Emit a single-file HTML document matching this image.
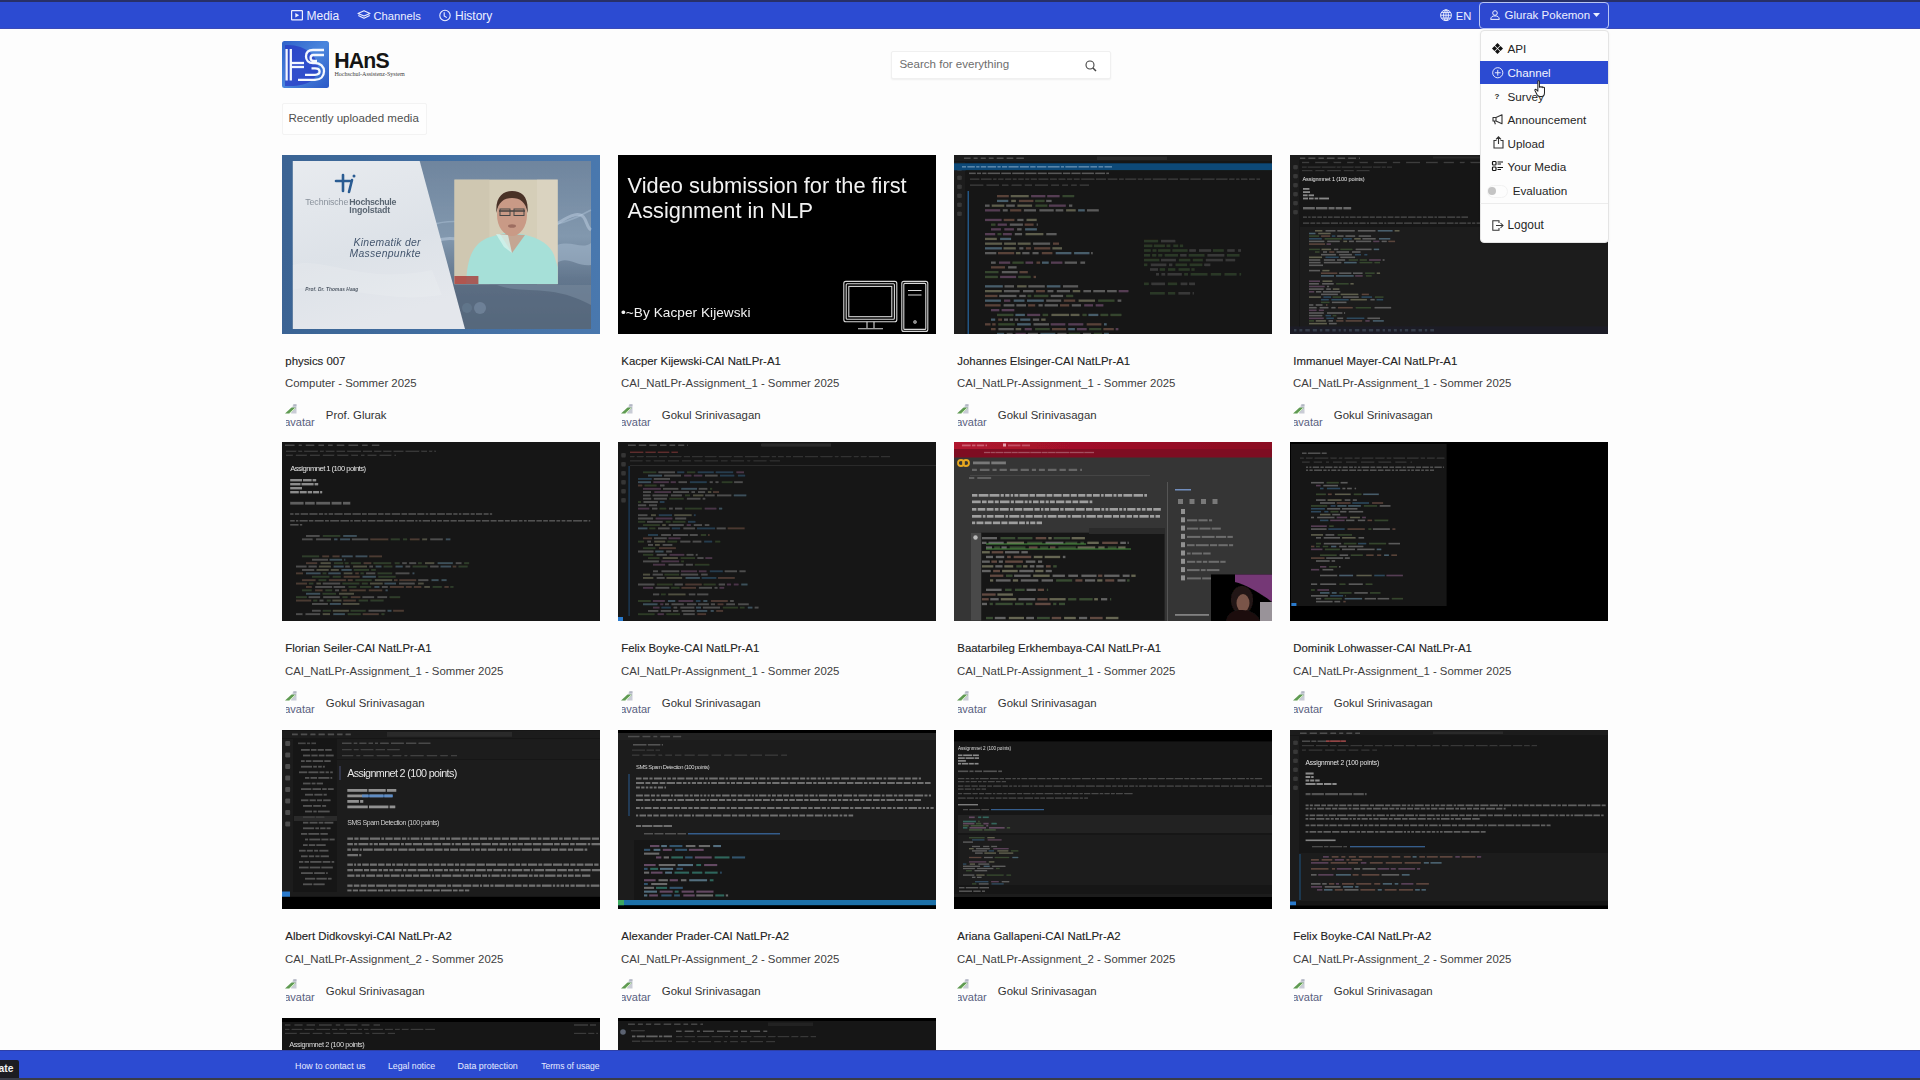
<!DOCTYPE html><html><head><meta charset="utf-8"><style>
*{margin:0;padding:0;box-sizing:border-box}
html,body{width:1920px;height:1080px;overflow:hidden;background:#fdfdfd;font-family:"Liberation Sans",sans-serif}
.t{position:absolute;white-space:nowrap;line-height:1}
.a{position:absolute}
svg{position:absolute;overflow:visible}
</style></head><body>
<svg width="0" height="0" style="position:absolute"><defs><filter id="bl" x="-5%" y="-5%" width="110%" height="110%"><feGaussianBlur stdDeviation="0.4"/></filter></defs></svg>
<svg style="left:282px;top:154.5px;overflow:hidden" width="318" height="179" viewBox="0 0 318 179"><g filter="url(#bl)"><defs><linearGradient id="t1b" x1="0" y1="0" x2="1" y2="0"><stop offset="0" stop-color="#3a6494"/><stop offset="1" stop-color="#4a78ae"/></linearGradient><linearGradient id="t1s" x1="0" y1="0" x2="0.3" y2="1"><stop offset="0" stop-color="#e8ebef"/><stop offset="0.6" stop-color="#dde2e8"/><stop offset="1" stop-color="#e4e7ec"/></linearGradient><linearGradient id="t1g" x1="0" y1="0" x2="0" y2="1"><stop offset="0" stop-color="#6f859e"/><stop offset="0.45" stop-color="#8298ae"/><stop offset="0.7" stop-color="#63778e"/><stop offset="1" stop-color="#55677c"/></linearGradient></defs><rect x="0.0" y="0.0" width="318.0" height="179.0" fill="url(#t1b)"/><rect x="10.8" y="6.0" width="298.2" height="168.0" fill="url(#t1g)"/><path d="M140 95 C180 60 210 120 260 80 S300 70 309 75" stroke="#c8d8e8" stroke-width="3" fill="none" opacity="0.45"/><path d="M150 70 C190 55 240 95 309 55" stroke="#b8cce0" stroke-width="1.5" fill="none" opacity="0.4"/><path d="M275 90 C290 85 300 95 309 88 L309 110 C295 112 285 100 275 108 Z" fill="#a9bdd2" opacity="0.5"/><rect x="172.0" y="130.0" width="137.0" height="44.0" fill="#56687c" opacity="0.6"/><path d="M215 130 C240 140 270 128 309 150 L309 130 Z" fill="#8fa3b8" opacity="0.35"/><circle cx="198" cy="153" r="6" fill="#7b8fa6" opacity="0.6"/><circle cx="185" cy="153" r="5" fill="#6a7f96" opacity="0.5"/><path d="M10.8 6 L137.7 6 L183 174 L10.8 174 Z" fill="url(#t1s)"/><path d="M10.8 110 C40 100 80 130 150 115 L160 140 C100 150 50 125 10.8 135 Z" fill="#ffffff" opacity="0.12"/><g stroke="#2b5b92" stroke-width="2.6" fill="none" stroke-linecap="round"><path d="M54 26 H68"/><path d="M61 20 V36"/><path d="M70 25 L67 37"/></g><circle cx="72" cy="21" r="1.5" fill="#2b5b92"/><text x="23.3" y="49.5" font-family="Liberation Sans" font-size="8.8" fill="#8a929c" textLength="43">Technische</text><text x="67.3" y="49.5" font-family="Liberation Sans" font-size="8.8" font-weight="700" fill="#5a6672" textLength="47">Hochschule</text><text x="67.3" y="57.8" font-family="Liberation Sans" font-size="8.8" font-weight="700" fill="#5a6672" textLength="41">Ingolstadt</text><text x="138.5" y="91.2" text-anchor="end" font-family="Liberation Sans" font-size="10.4" font-style="italic" fill="#44566e" textLength="67">Kinematik der</text><text x="138.5" y="101.5" text-anchor="end" font-family="Liberation Sans" font-size="10.4" font-style="italic" fill="#44566e" textLength="71">Massenpunkte</text><text x="23.3" y="135.8" font-family="Liberation Sans" font-size="4.8" font-style="italic" font-weight="700" fill="#505a66" textLength="53">Prof. Dr. Thomas Haag</text><rect x="172.4" y="24.6" width="103.3" height="104.5" fill="#d5ceb8"/><rect x="172.4" y="24.6" width="35.0" height="104.5" fill="#cbc3ab" opacity="0.6"/><rect x="255.0" y="24.6" width="20.7" height="104.5" fill="#ddd7c5" opacity="0.6"/><path d="M184 129 C185 104 190 90 205 83 L222 78 L240 79 C258 83 268 90 272 100 L275.7 112 L275.7 129 Z" fill="#a6e0d8"/><path d="M218 79 L230 98 L243 80 Z" fill="#c8a08c" opacity="0.9"/><path d="M214 79 L222 92 L230 98 L226 80 Z" fill="#d6f2ec" opacity="0.8"/><ellipse cx="230" cy="60" rx="15" ry="21" fill="#c99a86"/><path d="M214.5 58 C213 42 221 36 230 36 C240 36 247 42 245.5 58 C244 47 238 43 230 43 C222 43 216 47 214.5 58 Z" fill="#4a3028"/><path d="M217 56 H243" stroke="#3a3a3a" stroke-width="1.4"/><rect x="218" y="54" width="10" height="6.5" fill="none" stroke="#444" stroke-width="1"/><rect x="232" y="54" width="10" height="6.5" fill="none" stroke="#444" stroke-width="1"/><ellipse cx="230" cy="71" rx="4" ry="1.8" fill="#8a5a50" opacity="0.7"/><rect x="172.4" y="121.0" width="24.0" height="8.0" fill="#a83a38" opacity="0.8"/></g></svg>
<svg style="left:618px;top:154.5px;overflow:hidden" width="318" height="179" viewBox="0 0 318 179"><g filter="url(#bl)"><rect x="0.0" y="0.0" width="318.0" height="179.0" fill="#000"/><text x="9.6" y="37.9" font-family="Liberation Sans" font-size="21.8" fill="#f2f2f2" textLength="279">Video submission for the first</text><text x="9.6" y="63.1" font-family="Liberation Sans" font-size="21.8" fill="#f2f2f2">Assignment in NLP</text><text x="3" y="161.9" font-family="Liberation Sans" font-size="13.6" fill="#f2f2f2" textLength="129.5">•~By Kacper Kijewski</text><g fill="none" stroke="#d8d8d8" stroke-width="1.1"><rect x="225.8" y="126.4" width="53" height="40.3" rx="2"/><rect x="228.2" y="128.8" width="48.2" height="35.5" rx="1"/><rect x="230.8" y="131.4" width="43" height="30.3"/><path d="M249 166.7 V173 M256 166.7 V173 M240 173.8 H265"/><rect x="283.8" y="126.4" width="26" height="50" rx="2"/><rect x="285.8" y="128.4" width="22" height="46" rx="1"/><path d="M290 135.5 H303.5 M290 140 H303.5"/><circle cx="297" cy="167" r="1.2"/></g></g></svg>
<svg style="left:954px;top:154.5px;overflow:hidden" width="318" height="179" viewBox="0 0 318 179"><g filter="url(#bl)"><rect x="0.0" y="0.0" width="318.0" height="179.0" fill="#171717"/><rect x="0.0" y="0.0" width="318.0" height="6.5" fill="#1b1b1b"/><rect x="10.0" y="2.5" width="6.6" height="1.5" fill="#bbbbbb" opacity="0.324"/><rect x="19.6" y="2.5" width="4.1" height="1.5" fill="#bbbbbb" opacity="0.324"/><rect x="26.7" y="2.5" width="5.1" height="1.5" fill="#bbbbbb" opacity="0.324"/><rect x="34.8" y="2.5" width="4.9" height="1.5" fill="#bbbbbb" opacity="0.324"/><rect x="42.7" y="2.5" width="6.9" height="1.5" fill="#bbbbbb" opacity="0.324"/><rect x="52.6" y="2.5" width="6.7" height="1.5" fill="#bbbbbb" opacity="0.324"/><rect x="62.3" y="2.5" width="7.6" height="1.5" fill="#bbbbbb" opacity="0.324"/><rect x="143.1" y="1.5" width="70.0" height="3.5" fill="#2c2c2c"/><rect x="0.0" y="6.5" width="11.5" height="172.5" fill="#1b1b1b"/><rect x="3.2" y="11.5" width="4.6" height="4.6" fill="#8a8a8a" opacity="0.25" rx="1"/><rect x="3.2" y="20.5" width="4.6" height="4.6" fill="#8a8a8a" opacity="0.25" rx="1"/><rect x="3.2" y="29.5" width="4.6" height="4.6" fill="#8a8a8a" opacity="0.25" rx="1"/><rect x="3.2" y="38.5" width="4.6" height="4.6" fill="#8a8a8a" opacity="0.25" rx="1"/><rect x="3.2" y="47.5" width="4.6" height="4.6" fill="#8a8a8a" opacity="0.25" rx="1"/><rect x="3.2" y="56.5" width="4.6" height="4.6" fill="#8a8a8a" opacity="0.25" rx="1"/><rect x="0.0" y="8.3" width="318.0" height="7.0" fill="#0c4878"/><rect x="8.0" y="11.0" width="4.0" height="1.6" fill="#d0e4f4" opacity="0.396"/><rect x="13.3" y="11.0" width="7.6" height="1.6" fill="#d0e4f4" opacity="0.396"/><rect x="22.2" y="11.0" width="3.3" height="1.6" fill="#d0e4f4" opacity="0.396"/><rect x="26.8" y="11.0" width="5.4" height="1.6" fill="#d0e4f4" opacity="0.396"/><rect x="33.5" y="11.0" width="8.6" height="1.6" fill="#d0e4f4" opacity="0.396"/><rect x="43.4" y="11.0" width="3.3" height="1.6" fill="#d0e4f4" opacity="0.396"/><rect x="48.0" y="11.0" width="5.2" height="1.6" fill="#d0e4f4" opacity="0.396"/><rect x="54.5" y="11.0" width="10.1" height="1.6" fill="#d0e4f4" opacity="0.396"/><rect x="65.9" y="11.0" width="9.0" height="1.6" fill="#d0e4f4" opacity="0.396"/><rect x="76.2" y="11.0" width="5.4" height="1.6" fill="#d0e4f4" opacity="0.396"/><rect x="82.9" y="11.0" width="9.5" height="1.6" fill="#d0e4f4" opacity="0.396"/><rect x="93.7" y="11.0" width="11.9" height="1.6" fill="#d0e4f4" opacity="0.396"/><rect x="106.9" y="11.0" width="3.1" height="1.6" fill="#d0e4f4" opacity="0.396"/><rect x="111.3" y="11.0" width="11.9" height="1.6" fill="#d0e4f4" opacity="0.396"/><rect x="124.5" y="11.0" width="10.7" height="1.6" fill="#d0e4f4" opacity="0.396"/><rect x="136.4" y="11.0" width="6.7" height="1.6" fill="#d0e4f4" opacity="0.396"/><rect x="144.5" y="11.0" width="4.7" height="1.6" fill="#d0e4f4" opacity="0.396"/><rect x="150.5" y="11.0" width="7.5" height="1.6" fill="#d0e4f4" opacity="0.396"/><rect x="11.5" y="15.3" width="306.5" height="6.5" fill="#181818"/><rect x="15.0" y="17.6" width="6.7" height="1.5" fill="#cccccc" opacity="0.36"/><rect x="23.0" y="17.6" width="4.0" height="1.5" fill="#cccccc" opacity="0.36"/><rect x="28.3" y="17.6" width="4.1" height="1.5" fill="#cccccc" opacity="0.36"/><rect x="33.7" y="17.6" width="12.3" height="1.5" fill="#cccccc" opacity="0.36"/><rect x="47.3" y="17.6" width="9.6" height="1.5" fill="#cccccc" opacity="0.36"/><rect x="58.3" y="17.6" width="11.9" height="1.5" fill="#cccccc" opacity="0.36"/><rect x="71.4" y="17.6" width="11.0" height="1.5" fill="#cccccc" opacity="0.36"/><rect x="83.8" y="17.6" width="8.9" height="1.5" fill="#cccccc" opacity="0.36"/><rect x="94.0" y="17.6" width="13.7" height="1.5" fill="#cccccc" opacity="0.36"/><rect x="109.0" y="17.6" width="7.2" height="1.5" fill="#cccccc" opacity="0.36"/><rect x="117.4" y="17.6" width="9.1" height="1.5" fill="#cccccc" opacity="0.36"/><rect x="127.8" y="17.6" width="12.1" height="1.5" fill="#cccccc" opacity="0.36"/><rect x="141.2" y="17.6" width="9.8" height="1.5" fill="#cccccc" opacity="0.36"/><rect x="152.3" y="17.6" width="2.7" height="1.5" fill="#cccccc" opacity="0.36"/><rect x="16.0" y="23.5" width="9.4" height="1.3" fill="#aaaaaa" opacity="0.252"/><rect x="26.9" y="23.5" width="10.8" height="1.3" fill="#aaaaaa" opacity="0.252"/><rect x="39.1" y="23.5" width="3.5" height="1.3" fill="#aaaaaa" opacity="0.252"/><rect x="44.1" y="23.5" width="5.5" height="1.3" fill="#aaaaaa" opacity="0.252"/><rect x="51.1" y="23.5" width="6.2" height="1.3" fill="#aaaaaa" opacity="0.252"/><rect x="58.8" y="23.5" width="3.9" height="1.3" fill="#aaaaaa" opacity="0.252"/><rect x="64.2" y="23.5" width="5.6" height="1.3" fill="#aaaaaa" opacity="0.252"/><rect x="71.2" y="23.5" width="4.1" height="1.3" fill="#aaaaaa" opacity="0.252"/><rect x="76.8" y="23.5" width="6.1" height="1.3" fill="#aaaaaa" opacity="0.252"/><rect x="84.4" y="23.5" width="10.0" height="1.3" fill="#aaaaaa" opacity="0.252"/><rect x="95.9" y="23.5" width="7.0" height="1.3" fill="#aaaaaa" opacity="0.252"/><rect x="104.4" y="23.5" width="7.1" height="1.3" fill="#aaaaaa" opacity="0.252"/><rect x="113.0" y="23.5" width="5.3" height="1.3" fill="#aaaaaa" opacity="0.252"/><rect x="119.8" y="23.5" width="5.9" height="1.3" fill="#aaaaaa" opacity="0.252"/><rect x="127.2" y="23.5" width="13.3" height="1.3" fill="#aaaaaa" opacity="0.252"/><rect x="142.0" y="23.5" width="10.1" height="1.3" fill="#aaaaaa" opacity="0.252"/><rect x="153.7" y="23.5" width="9.7" height="1.3" fill="#aaaaaa" opacity="0.252"/><rect x="164.9" y="23.5" width="4.9" height="1.3" fill="#aaaaaa" opacity="0.252"/><rect x="171.2" y="23.5" width="11.0" height="1.3" fill="#aaaaaa" opacity="0.252"/><rect x="183.8" y="23.5" width="4.8" height="1.3" fill="#aaaaaa" opacity="0.252"/><rect x="190.1" y="23.5" width="7.2" height="1.3" fill="#aaaaaa" opacity="0.252"/><rect x="198.7" y="23.5" width="13.9" height="1.3" fill="#aaaaaa" opacity="0.252"/><rect x="214.1" y="23.5" width="10.0" height="1.3" fill="#aaaaaa" opacity="0.252"/><rect x="225.7" y="23.5" width="9.1" height="1.3" fill="#aaaaaa" opacity="0.252"/><rect x="236.3" y="23.5" width="10.5" height="1.3" fill="#aaaaaa" opacity="0.252"/><rect x="248.3" y="23.5" width="12.3" height="1.3" fill="#aaaaaa" opacity="0.252"/><rect x="262.1" y="23.5" width="11.5" height="1.3" fill="#aaaaaa" opacity="0.252"/><rect x="275.1" y="23.5" width="5.5" height="1.3" fill="#aaaaaa" opacity="0.252"/><rect x="282.1" y="23.5" width="3.4" height="1.3" fill="#aaaaaa" opacity="0.252"/><rect x="287.0" y="23.5" width="6.5" height="1.3" fill="#aaaaaa" opacity="0.252"/><rect x="295.0" y="23.5" width="5.9" height="1.3" fill="#aaaaaa" opacity="0.252"/><rect x="302.4" y="23.5" width="3.6" height="1.3" fill="#aaaaaa" opacity="0.252"/><rect x="16.0" y="29.5" width="13.4" height="1.3" fill="#aaaaaa" opacity="0.252"/><rect x="32.4" y="29.5" width="12.6" height="1.3" fill="#aaaaaa" opacity="0.252"/><rect x="48.0" y="29.5" width="6.5" height="1.3" fill="#aaaaaa" opacity="0.252"/><rect x="57.5" y="29.5" width="10.2" height="1.3" fill="#aaaaaa" opacity="0.252"/><rect x="70.7" y="29.5" width="7.4" height="1.3" fill="#aaaaaa" opacity="0.252"/><rect x="81.0" y="29.5" width="13.1" height="1.3" fill="#aaaaaa" opacity="0.252"/><rect x="97.1" y="29.5" width="8.0" height="1.3" fill="#aaaaaa" opacity="0.252"/><rect x="108.1" y="29.5" width="5.9" height="1.3" fill="#aaaaaa" opacity="0.252"/><rect x="117.1" y="29.5" width="5.7" height="1.3" fill="#aaaaaa" opacity="0.252"/><rect x="125.8" y="29.5" width="9.2" height="1.3" fill="#aaaaaa" opacity="0.252"/><rect x="13.6" y="36.0" width="1.2" height="143.0" fill="#2a6fb0" opacity="0.9"/><rect x="43.0" y="40.0" width="11.8" height="2.3" fill="#ce9178" opacity="0.36"/><rect x="56.7" y="40.0" width="18.0" height="2.3" fill="#dcdcaa" opacity="0.36"/><rect x="77.1" y="40.0" width="14.3" height="2.3" fill="#c586c0" opacity="0.36"/><rect x="93.2" y="40.0" width="12.4" height="2.3" fill="#c586c0" opacity="0.36"/><rect x="108.5" y="40.0" width="11.7" height="2.3" fill="#6a9955" opacity="0.36"/><rect x="43.0" y="44.8" width="11.3" height="2.3" fill="#9cdcfe" opacity="0.36"/><rect x="57.2" y="44.8" width="4.7" height="2.3" fill="#dcdcaa" opacity="0.36"/><rect x="64.9" y="44.8" width="14.5" height="2.3" fill="#ce9178" opacity="0.36"/><rect x="81.1" y="44.8" width="9.5" height="2.3" fill="#6a9955" opacity="0.36"/><rect x="92.2" y="44.8" width="5.4" height="2.3" fill="#d4d4d4" opacity="0.36"/><rect x="31.0" y="49.5" width="4.6" height="2.3" fill="#d4d4d4" opacity="0.36"/><rect x="37.7" y="49.5" width="12.6" height="2.3" fill="#dcdcaa" opacity="0.36"/><rect x="52.2" y="49.5" width="8.6" height="2.3" fill="#d4d4d4" opacity="0.36"/><rect x="63.4" y="49.5" width="14.7" height="2.3" fill="#dcdcaa" opacity="0.36"/><rect x="81.4" y="49.5" width="12.0" height="2.3" fill="#6a9955" opacity="0.36"/><rect x="94.9" y="49.5" width="16.9" height="2.3" fill="#c586c0" opacity="0.36"/><rect x="115.0" y="49.5" width="3.3" height="2.3" fill="#d4d4d4" opacity="0.36"/><rect x="31.0" y="54.2" width="15.2" height="2.3" fill="#c586c0" opacity="0.36"/><rect x="48.8" y="54.2" width="4.9" height="2.3" fill="#d4d4d4" opacity="0.36"/><rect x="56.1" y="54.2" width="11.2" height="2.3" fill="#ce9178" opacity="0.36"/><rect x="69.9" y="54.2" width="12.1" height="2.3" fill="#d4d4d4" opacity="0.36"/><rect x="85.4" y="54.2" width="14.3" height="2.3" fill="#d4d4d4" opacity="0.36"/><rect x="101.6" y="54.2" width="7.7" height="2.3" fill="#d4d4d4" opacity="0.36"/><rect x="112.1" y="54.2" width="9.6" height="2.3" fill="#dcdcaa" opacity="0.36"/><rect x="124.1" y="54.2" width="6.7" height="2.3" fill="#9cdcfe" opacity="0.36"/><rect x="133.0" y="54.2" width="11.8" height="2.3" fill="#d4d4d4" opacity="0.36"/><rect x="31.0" y="63.8" width="16.6" height="2.3" fill="#c586c0" opacity="0.36"/><rect x="49.7" y="63.8" width="10.7" height="2.3" fill="#ce9178" opacity="0.36"/><rect x="63.3" y="63.8" width="6.2" height="2.3" fill="#d4d4d4" opacity="0.36"/><rect x="72.5" y="63.8" width="10.2" height="2.3" fill="#dcdcaa" opacity="0.36"/><rect x="37.0" y="68.5" width="4.5" height="2.3" fill="#6a9955" opacity="0.36"/><rect x="43.7" y="68.5" width="9.2" height="2.3" fill="#c586c0" opacity="0.36"/><rect x="55.8" y="68.5" width="13.1" height="2.3" fill="#d4d4d4" opacity="0.36"/><rect x="70.6" y="68.5" width="9.0" height="2.3" fill="#ce9178" opacity="0.36"/><rect x="82.7" y="68.5" width="1.1" height="2.3" fill="#d4d4d4" opacity="0.36"/><rect x="37.0" y="73.2" width="9.9" height="2.3" fill="#c586c0" opacity="0.36"/><rect x="50.3" y="73.2" width="9.6" height="2.3" fill="#c586c0" opacity="0.36"/><rect x="63.1" y="73.2" width="4.5" height="2.3" fill="#d4d4d4" opacity="0.36"/><rect x="71.1" y="73.2" width="11.8" height="2.3" fill="#9cdcfe" opacity="0.36"/><rect x="31.0" y="78.0" width="10.2" height="2.3" fill="#c586c0" opacity="0.36"/><rect x="43.5" y="78.0" width="3.9" height="2.3" fill="#6a9955" opacity="0.36"/><rect x="48.9" y="78.0" width="8.9" height="2.3" fill="#c586c0" opacity="0.36"/><rect x="60.8" y="78.0" width="7.3" height="2.3" fill="#d4d4d4" opacity="0.36"/><rect x="71.5" y="78.0" width="17.9" height="2.3" fill="#dcdcaa" opacity="0.36"/><rect x="92.3" y="78.0" width="10.3" height="2.3" fill="#d4d4d4" opacity="0.36"/><rect x="31.0" y="82.8" width="11.8" height="2.3" fill="#dcdcaa" opacity="0.36"/><rect x="46.1" y="82.8" width="11.0" height="2.3" fill="#9cdcfe" opacity="0.36"/><rect x="31.0" y="87.5" width="17.1" height="2.3" fill="#dcdcaa" opacity="0.36"/><rect x="50.1" y="87.5" width="11.9" height="2.3" fill="#dcdcaa" opacity="0.36"/><rect x="63.7" y="87.5" width="12.9" height="2.3" fill="#dcdcaa" opacity="0.36"/><rect x="79.1" y="87.5" width="17.0" height="2.3" fill="#d4d4d4" opacity="0.36"/><rect x="99.0" y="87.5" width="6.0" height="2.3" fill="#ce9178" opacity="0.36"/><rect x="31.0" y="92.2" width="16.9" height="2.3" fill="#9cdcfe" opacity="0.36"/><rect x="49.5" y="92.2" width="12.3" height="2.3" fill="#dcdcaa" opacity="0.36"/><rect x="65.3" y="92.2" width="4.1" height="2.3" fill="#d4d4d4" opacity="0.36"/><rect x="71.9" y="92.2" width="5.0" height="2.3" fill="#ce9178" opacity="0.36"/><rect x="80.1" y="92.2" width="16.2" height="2.3" fill="#ce9178" opacity="0.36"/><rect x="98.4" y="92.2" width="9.6" height="2.3" fill="#dcdcaa" opacity="0.36"/><rect x="31.0" y="97.0" width="11.3" height="2.3" fill="#d4d4d4" opacity="0.36"/><rect x="44.0" y="97.0" width="16.2" height="2.3" fill="#ce9178" opacity="0.36"/><rect x="61.9" y="97.0" width="4.6" height="2.3" fill="#dcdcaa" opacity="0.36"/><rect x="68.3" y="97.0" width="7.2" height="2.3" fill="#d4d4d4" opacity="0.36"/><rect x="78.5" y="97.0" width="6.1" height="2.3" fill="#d4d4d4" opacity="0.36"/><rect x="87.8" y="97.0" width="10.6" height="2.3" fill="#ce9178" opacity="0.36"/><rect x="101.7" y="97.0" width="15.7" height="2.3" fill="#9cdcfe" opacity="0.36"/><rect x="120.1" y="97.0" width="15.4" height="2.3" fill="#9cdcfe" opacity="0.36"/><rect x="137.1" y="97.0" width="1.6" height="2.3" fill="#d4d4d4" opacity="0.36"/><rect x="37.0" y="106.5" width="4.7" height="2.3" fill="#d4d4d4" opacity="0.36"/><rect x="45.0" y="106.5" width="11.2" height="2.3" fill="#c586c0" opacity="0.36"/><rect x="58.4" y="106.5" width="11.3" height="2.3" fill="#6a9955" opacity="0.36"/><rect x="71.5" y="106.5" width="7.6" height="2.3" fill="#c586c0" opacity="0.36"/><rect x="82.5" y="106.5" width="3.6" height="2.3" fill="#ce9178" opacity="0.36"/><rect x="88.0" y="106.5" width="6.7" height="2.3" fill="#9cdcfe" opacity="0.36"/><rect x="97.0" y="106.5" width="11.4" height="2.3" fill="#c586c0" opacity="0.36"/><rect x="110.7" y="106.5" width="12.3" height="2.3" fill="#d4d4d4" opacity="0.36"/><rect x="126.4" y="106.5" width="4.7" height="2.3" fill="#d4d4d4" opacity="0.36"/><rect x="37.0" y="111.2" width="14.0" height="2.3" fill="#ce9178" opacity="0.36"/><rect x="54.1" y="111.2" width="8.5" height="2.3" fill="#d4d4d4" opacity="0.36"/><rect x="31.0" y="116.0" width="13.5" height="2.3" fill="#6a9955" opacity="0.36"/><rect x="47.8" y="116.0" width="15.9" height="2.3" fill="#d4d4d4" opacity="0.36"/><rect x="65.5" y="116.0" width="8.3" height="2.3" fill="#ce9178" opacity="0.36"/><rect x="31.0" y="120.8" width="12.9" height="2.3" fill="#6a9955" opacity="0.36"/><rect x="46.1" y="120.8" width="16.0" height="2.3" fill="#c586c0" opacity="0.36"/><rect x="64.1" y="120.8" width="12.6" height="2.3" fill="#6a9955" opacity="0.36"/><rect x="79.6" y="120.8" width="2.4" height="2.3" fill="#ce9178" opacity="0.36"/><rect x="31.0" y="130.2" width="17.8" height="2.3" fill="#9cdcfe" opacity="0.36"/><rect x="50.5" y="130.2" width="9.5" height="2.3" fill="#d4d4d4" opacity="0.36"/><rect x="63.1" y="130.2" width="9.5" height="2.3" fill="#dcdcaa" opacity="0.36"/><rect x="74.3" y="130.2" width="16.5" height="2.3" fill="#d4d4d4" opacity="0.36"/><rect x="92.8" y="130.2" width="13.6" height="2.3" fill="#9cdcfe" opacity="0.36"/><rect x="109.0" y="130.2" width="15.1" height="2.3" fill="#d4d4d4" opacity="0.36"/><rect x="31.0" y="135.0" width="16.8" height="2.3" fill="#dcdcaa" opacity="0.36"/><rect x="49.9" y="135.0" width="15.7" height="2.3" fill="#d4d4d4" opacity="0.36"/><rect x="69.0" y="135.0" width="10.6" height="2.3" fill="#d4d4d4" opacity="0.36"/><rect x="81.9" y="135.0" width="9.0" height="2.3" fill="#ce9178" opacity="0.36"/><rect x="93.5" y="135.0" width="5.9" height="2.3" fill="#d4d4d4" opacity="0.36"/><rect x="102.8" y="135.0" width="13.2" height="2.3" fill="#d4d4d4" opacity="0.36"/><rect x="118.7" y="135.0" width="7.5" height="2.3" fill="#dcdcaa" opacity="0.36"/><rect x="129.4" y="135.0" width="7.6" height="2.3" fill="#d4d4d4" opacity="0.36"/><rect x="139.3" y="135.0" width="11.7" height="2.3" fill="#d4d4d4" opacity="0.36"/><rect x="153.1" y="135.0" width="9.6" height="2.3" fill="#d4d4d4" opacity="0.36"/><rect x="164.7" y="135.0" width="9.8" height="2.3" fill="#c586c0" opacity="0.36"/><rect x="31.0" y="139.8" width="12.5" height="2.3" fill="#ce9178" opacity="0.36"/><rect x="45.2" y="139.8" width="17.3" height="2.3" fill="#d4d4d4" opacity="0.36"/><rect x="65.3" y="139.8" width="6.4" height="2.3" fill="#d4d4d4" opacity="0.36"/><rect x="73.5" y="139.8" width="3.7" height="2.3" fill="#6a9955" opacity="0.36"/><rect x="79.9" y="139.8" width="14.5" height="2.3" fill="#6a9955" opacity="0.36"/><rect x="96.7" y="139.8" width="12.4" height="2.3" fill="#d4d4d4" opacity="0.36"/><rect x="112.1" y="139.8" width="7.1" height="2.3" fill="#6a9955" opacity="0.36"/><rect x="31.0" y="144.5" width="15.9" height="2.3" fill="#9cdcfe" opacity="0.36"/><rect x="50.0" y="144.5" width="6.3" height="2.3" fill="#c586c0" opacity="0.36"/><rect x="59.7" y="144.5" width="10.8" height="2.3" fill="#9cdcfe" opacity="0.36"/><rect x="73.0" y="144.5" width="16.8" height="2.3" fill="#9cdcfe" opacity="0.36"/><rect x="92.2" y="144.5" width="15.0" height="2.3" fill="#d4d4d4" opacity="0.36"/><rect x="109.8" y="144.5" width="11.4" height="2.3" fill="#ce9178" opacity="0.36"/><rect x="124.6" y="144.5" width="16.4" height="2.3" fill="#dcdcaa" opacity="0.36"/><rect x="144.1" y="144.5" width="16.4" height="2.3" fill="#6a9955" opacity="0.36"/><rect x="163.6" y="144.5" width="3.7" height="2.3" fill="#d4d4d4" opacity="0.36"/><rect x="31.0" y="149.2" width="15.6" height="2.3" fill="#ce9178" opacity="0.36"/><rect x="49.6" y="149.2" width="10.8" height="2.3" fill="#d4d4d4" opacity="0.36"/><rect x="62.4" y="149.2" width="9.6" height="2.3" fill="#d4d4d4" opacity="0.36"/><rect x="74.1" y="149.2" width="7.1" height="2.3" fill="#ce9178" opacity="0.36"/><rect x="84.5" y="149.2" width="4.2" height="2.3" fill="#d4d4d4" opacity="0.36"/><rect x="90.6" y="149.2" width="13.4" height="2.3" fill="#d4d4d4" opacity="0.36"/><rect x="106.0" y="149.2" width="9.2" height="2.3" fill="#ce9178" opacity="0.36"/><rect x="117.8" y="149.2" width="9.2" height="2.3" fill="#d4d4d4" opacity="0.36"/><rect x="130.2" y="149.2" width="8.8" height="2.3" fill="#c586c0" opacity="0.36"/><rect x="141.7" y="149.2" width="7.7" height="2.3" fill="#c586c0" opacity="0.36"/><rect x="37.0" y="154.0" width="8.3" height="2.3" fill="#c586c0" opacity="0.36"/><rect x="47.6" y="154.0" width="12.7" height="2.3" fill="#c586c0" opacity="0.36"/><rect x="43.0" y="158.8" width="16.5" height="2.3" fill="#6a9955" opacity="0.36"/><rect x="61.4" y="158.8" width="9.5" height="2.3" fill="#9cdcfe" opacity="0.36"/><rect x="73.2" y="158.8" width="13.0" height="2.3" fill="#c586c0" opacity="0.36"/><rect x="88.6" y="158.8" width="5.5" height="2.3" fill="#6a9955" opacity="0.36"/><rect x="97.4" y="158.8" width="17.7" height="2.3" fill="#dcdcaa" opacity="0.36"/><rect x="116.6" y="158.8" width="8.9" height="2.3" fill="#dcdcaa" opacity="0.36"/><rect x="128.4" y="158.8" width="4.3" height="2.3" fill="#6a9955" opacity="0.36"/><rect x="134.4" y="158.8" width="9.9" height="2.3" fill="#9cdcfe" opacity="0.36"/><rect x="146.4" y="158.8" width="7.9" height="2.3" fill="#6a9955" opacity="0.36"/><rect x="156.4" y="158.8" width="11.1" height="2.3" fill="#6a9955" opacity="0.36"/><rect x="37.0" y="163.5" width="4.2" height="2.3" fill="#9cdcfe" opacity="0.36"/><rect x="44.2" y="163.5" width="3.8" height="2.3" fill="#ce9178" opacity="0.36"/><rect x="50.0" y="163.5" width="4.0" height="2.3" fill="#d4d4d4" opacity="0.36"/><rect x="55.6" y="163.5" width="3.5" height="2.3" fill="#d4d4d4" opacity="0.36"/><rect x="60.9" y="163.5" width="3.3" height="2.3" fill="#d4d4d4" opacity="0.36"/><rect x="66.2" y="163.5" width="10.1" height="2.3" fill="#9cdcfe" opacity="0.36"/><rect x="78.9" y="163.5" width="6.3" height="2.3" fill="#d4d4d4" opacity="0.36"/><rect x="87.2" y="163.5" width="4.4" height="2.3" fill="#dcdcaa" opacity="0.36"/><rect x="31.0" y="168.2" width="5.5" height="2.3" fill="#ce9178" opacity="0.36"/><rect x="38.2" y="168.2" width="3.4" height="2.3" fill="#ce9178" opacity="0.36"/><rect x="44.2" y="168.2" width="16.6" height="2.3" fill="#6a9955" opacity="0.36"/><rect x="63.1" y="168.2" width="13.7" height="2.3" fill="#9cdcfe" opacity="0.36"/><rect x="79.5" y="168.2" width="15.5" height="2.3" fill="#d4d4d4" opacity="0.36"/><rect x="96.7" y="168.2" width="14.6" height="2.3" fill="#c586c0" opacity="0.36"/><rect x="114.2" y="168.2" width="15.1" height="2.3" fill="#c586c0" opacity="0.36"/><rect x="132.7" y="168.2" width="14.7" height="2.3" fill="#ce9178" opacity="0.36"/><rect x="150.0" y="168.2" width="2.7" height="2.3" fill="#9cdcfe" opacity="0.36"/><rect x="37.0" y="173.0" width="4.6" height="2.3" fill="#ce9178" opacity="0.36"/><rect x="44.4" y="173.0" width="15.4" height="2.3" fill="#d4d4d4" opacity="0.36"/><rect x="61.6" y="173.0" width="5.6" height="2.3" fill="#dcdcaa" opacity="0.36"/><rect x="70.7" y="173.0" width="7.1" height="2.3" fill="#c586c0" opacity="0.36"/><rect x="81.1" y="173.0" width="14.6" height="2.3" fill="#6a9955" opacity="0.36"/><rect x="98.0" y="173.0" width="14.0" height="2.3" fill="#ce9178" opacity="0.36"/><rect x="114.2" y="173.0" width="6.7" height="2.3" fill="#9cdcfe" opacity="0.36"/><rect x="122.9" y="173.0" width="9.8" height="2.3" fill="#c586c0" opacity="0.36"/><rect x="135.1" y="173.0" width="12.2" height="2.3" fill="#6a9955" opacity="0.36"/><rect x="149.4" y="173.0" width="10.4" height="2.3" fill="#ce9178" opacity="0.36"/><rect x="161.7" y="173.0" width="2.7" height="2.3" fill="#c586c0" opacity="0.36"/><rect x="43.0" y="177.8" width="7.1" height="2.3" fill="#9cdcfe" opacity="0.36"/><rect x="52.7" y="177.8" width="5.9" height="2.3" fill="#d4d4d4" opacity="0.36"/><rect x="61.5" y="177.8" width="10.3" height="2.3" fill="#c586c0" opacity="0.36"/><rect x="73.8" y="177.8" width="10.1" height="2.3" fill="#d4d4d4" opacity="0.36"/><rect x="86.4" y="177.8" width="14.9" height="2.3" fill="#9cdcfe" opacity="0.36"/><rect x="103.4" y="177.8" width="9.1" height="2.3" fill="#d4d4d4" opacity="0.36"/><rect x="114.6" y="177.8" width="11.7" height="2.3" fill="#6a9955" opacity="0.36"/><rect x="128.9" y="177.8" width="8.2" height="2.3" fill="#d4d4d4" opacity="0.36"/><rect x="139.7" y="177.8" width="8.3" height="2.3" fill="#6a9955" opacity="0.36"/><rect x="150.0" y="177.8" width="4.9" height="2.3" fill="#9cdcfe" opacity="0.36"/><rect x="190.0" y="84.8" width="14.1" height="2.6" fill="#6a9955" opacity="0.259"/><rect x="207.0" y="84.8" width="14.3" height="2.6" fill="#9a9a9a" opacity="0.259"/><rect x="190.0" y="89.5" width="8.4" height="2.6" fill="#6a9955" opacity="0.259"/><rect x="199.9" y="89.5" width="11.0" height="2.6" fill="#6a9955" opacity="0.259"/><rect x="212.5" y="89.5" width="3.8" height="2.6" fill="#6a9955" opacity="0.259"/><rect x="219.3" y="89.5" width="4.9" height="2.6" fill="#6a9955" opacity="0.259"/><rect x="225.9" y="89.5" width="3.2" height="2.6" fill="#6a9955" opacity="0.259"/><rect x="190.0" y="94.2" width="6.8" height="2.6" fill="#6a9955" opacity="0.259"/><rect x="198.5" y="94.2" width="4.0" height="2.6" fill="#6a9955" opacity="0.259"/><rect x="204.1" y="94.2" width="12.4" height="2.6" fill="#6a9955" opacity="0.259"/><rect x="218.4" y="94.2" width="15.2" height="2.6" fill="#6a9955" opacity="0.259"/><rect x="235.2" y="94.2" width="6.7" height="2.6" fill="#9a9a9a" opacity="0.259"/><rect x="245.0" y="94.2" width="12.1" height="2.6" fill="#9a9a9a" opacity="0.259"/><rect x="259.0" y="94.2" width="10.8" height="2.6" fill="#6a9955" opacity="0.259"/><rect x="273.2" y="94.2" width="7.5" height="2.6" fill="#9a9a9a" opacity="0.259"/><rect x="284.1" y="94.2" width="2.9" height="2.6" fill="#9a9a9a" opacity="0.259"/><rect x="190.0" y="99.0" width="6.1" height="2.6" fill="#6a9955" opacity="0.259"/><rect x="198.1" y="99.0" width="4.2" height="2.6" fill="#6a9955" opacity="0.259"/><rect x="204.2" y="99.0" width="4.1" height="2.6" fill="#6a9955" opacity="0.259"/><rect x="210.7" y="99.0" width="13.3" height="2.6" fill="#6a9955" opacity="0.259"/><rect x="226.1" y="99.0" width="6.5" height="2.6" fill="#9a9a9a" opacity="0.259"/><rect x="234.6" y="99.0" width="15.9" height="2.6" fill="#6a9955" opacity="0.259"/><rect x="253.4" y="99.0" width="16.9" height="2.6" fill="#9a9a9a" opacity="0.259"/><rect x="272.9" y="99.0" width="12.6" height="2.6" fill="#6a9955" opacity="0.259"/><rect x="190.0" y="103.8" width="15.4" height="2.6" fill="#6a9955" opacity="0.259"/><rect x="207.0" y="103.8" width="14.9" height="2.6" fill="#9a9a9a" opacity="0.259"/><rect x="224.9" y="103.8" width="11.5" height="2.6" fill="#6a9955" opacity="0.259"/><rect x="238.8" y="103.8" width="10.0" height="2.6" fill="#6a9955" opacity="0.259"/><rect x="251.8" y="103.8" width="17.1" height="2.6" fill="#9a9a9a" opacity="0.259"/><rect x="271.5" y="103.8" width="9.6" height="2.6" fill="#9a9a9a" opacity="0.259"/><rect x="190.0" y="108.5" width="3.4" height="2.6" fill="#6a9955" opacity="0.259"/><rect x="196.8" y="108.5" width="15.5" height="2.6" fill="#9a9a9a" opacity="0.259"/><rect x="215.0" y="108.5" width="3.3" height="2.6" fill="#9a9a9a" opacity="0.259"/><rect x="221.5" y="108.5" width="11.6" height="2.6" fill="#6a9955" opacity="0.259"/><rect x="235.6" y="108.5" width="12.8" height="2.6" fill="#6a9955" opacity="0.259"/><rect x="250.2" y="108.5" width="6.1" height="2.6" fill="#9a9a9a" opacity="0.259"/><rect x="196.0" y="113.2" width="8.0" height="2.6" fill="#9a9a9a" opacity="0.259"/><rect x="205.7" y="113.2" width="5.4" height="2.6" fill="#6a9955" opacity="0.259"/><rect x="214.0" y="113.2" width="7.3" height="2.6" fill="#6a9955" opacity="0.259"/><rect x="224.5" y="113.2" width="11.3" height="2.6" fill="#6a9955" opacity="0.259"/><rect x="237.4" y="113.2" width="3.2" height="2.6" fill="#6a9955" opacity="0.259"/><rect x="202.0" y="118.0" width="3.0" height="2.6" fill="#9a9a9a" opacity="0.259"/><rect x="207.4" y="118.0" width="3.8" height="2.6" fill="#9a9a9a" opacity="0.259"/><rect x="213.5" y="118.0" width="14.3" height="2.6" fill="#9a9a9a" opacity="0.259"/><rect x="230.2" y="118.0" width="3.8" height="2.6" fill="#6a9955" opacity="0.259"/><rect x="236.6" y="118.0" width="16.9" height="2.6" fill="#6a9955" opacity="0.259"/><rect x="256.8" y="118.0" width="10.3" height="2.6" fill="#6a9955" opacity="0.259"/><rect x="270.5" y="118.0" width="12.1" height="2.6" fill="#6a9955" opacity="0.259"/><rect x="285.5" y="118.0" width="1.6" height="2.6" fill="#6a9955" opacity="0.259"/><rect x="190.0" y="127.5" width="4.8" height="2.6" fill="#6a9955" opacity="0.259"/><rect x="197.3" y="127.5" width="13.7" height="2.6" fill="#9a9a9a" opacity="0.259"/><rect x="213.9" y="127.5" width="9.2" height="2.6" fill="#6a9955" opacity="0.259"/><rect x="226.6" y="127.5" width="6.7" height="2.6" fill="#9a9a9a" opacity="0.259"/><rect x="235.1" y="127.5" width="5.9" height="2.6" fill="#9a9a9a" opacity="0.259"/><rect x="196.0" y="137.0" width="14.8" height="2.6" fill="#6a9955" opacity="0.259"/><rect x="214.0" y="137.0" width="7.2" height="2.6" fill="#6a9955" opacity="0.259"/><rect x="224.4" y="137.0" width="11.7" height="2.6" fill="#9a9a9a" opacity="0.259"/><rect x="238.6" y="137.0" width="1.3" height="2.6" fill="#9a9a9a" opacity="0.259"/></g></svg>
<svg style="left:1290px;top:154.5px;overflow:hidden" width="318" height="179" viewBox="0 0 318 179"><g filter="url(#bl)"><rect x="0.0" y="0.0" width="318.0" height="179.0" fill="#191919"/><rect x="0.0" y="0.0" width="318.0" height="5.0" fill="#1b1b1b"/><rect x="10.0" y="2.5" width="5.3" height="1.5" fill="#bbbbbb" opacity="0.324"/><rect x="18.3" y="2.5" width="7.1" height="1.5" fill="#bbbbbb" opacity="0.324"/><rect x="28.4" y="2.5" width="5.5" height="1.5" fill="#bbbbbb" opacity="0.324"/><rect x="36.9" y="2.5" width="7.7" height="1.5" fill="#bbbbbb" opacity="0.324"/><rect x="47.6" y="2.5" width="7.5" height="1.5" fill="#bbbbbb" opacity="0.324"/><rect x="58.1" y="2.5" width="7.9" height="1.5" fill="#bbbbbb" opacity="0.324"/><rect x="69.0" y="2.5" width="1.0" height="1.5" fill="#bbbbbb" opacity="0.324"/><rect x="143.1" y="1.5" width="70.0" height="2.0" fill="#2c2c2c"/><rect x="0.0" y="5.0" width="9.0" height="174.0" fill="#1b1b1b"/><rect x="3.2" y="10.0" width="4.6" height="4.6" fill="#8a8a8a" opacity="0.25" rx="1"/><rect x="3.2" y="19.0" width="4.6" height="4.6" fill="#8a8a8a" opacity="0.25" rx="1"/><rect x="3.2" y="28.0" width="4.6" height="4.6" fill="#8a8a8a" opacity="0.25" rx="1"/><rect x="3.2" y="37.0" width="4.6" height="4.6" fill="#8a8a8a" opacity="0.25" rx="1"/><rect x="3.2" y="46.0" width="4.6" height="4.6" fill="#8a8a8a" opacity="0.25" rx="1"/><rect x="3.2" y="55.0" width="4.6" height="4.6" fill="#8a8a8a" opacity="0.25" rx="1"/><rect x="9.0" y="5.0" width="309.0" height="5.0" fill="#181818"/><rect x="12.0" y="6.8" width="7.2" height="1.3" fill="#aaaaaa" opacity="0.252"/><rect x="25.2" y="6.8" width="12.4" height="1.3" fill="#aaaaaa" opacity="0.252"/><rect x="43.6" y="6.8" width="7.5" height="1.3" fill="#aaaaaa" opacity="0.252"/><rect x="57.1" y="6.8" width="6.5" height="1.3" fill="#aaaaaa" opacity="0.252"/><rect x="69.6" y="6.8" width="8.2" height="1.3" fill="#aaaaaa" opacity="0.252"/><rect x="83.9" y="6.8" width="13.0" height="1.3" fill="#aaaaaa" opacity="0.252"/><rect x="102.9" y="6.8" width="7.2" height="1.3" fill="#aaaaaa" opacity="0.252"/><rect x="116.1" y="6.8" width="13.9" height="1.3" fill="#aaaaaa" opacity="0.252"/><rect x="136.0" y="6.8" width="11.7" height="1.3" fill="#aaaaaa" opacity="0.252"/><rect x="153.7" y="6.8" width="10.2" height="1.3" fill="#aaaaaa" opacity="0.252"/><rect x="169.9" y="6.8" width="4.7" height="1.3" fill="#aaaaaa" opacity="0.252"/><rect x="180.5" y="6.8" width="13.6" height="1.3" fill="#aaaaaa" opacity="0.252"/><rect x="200.1" y="6.8" width="4.4" height="1.3" fill="#aaaaaa" opacity="0.252"/><rect x="210.5" y="6.8" width="13.6" height="1.3" fill="#aaaaaa" opacity="0.252"/><rect x="230.1" y="6.8" width="6.7" height="1.3" fill="#aaaaaa" opacity="0.252"/><rect x="242.8" y="6.8" width="4.1" height="1.3" fill="#aaaaaa" opacity="0.252"/><rect x="252.9" y="6.8" width="12.3" height="1.3" fill="#aaaaaa" opacity="0.252"/><rect x="271.2" y="6.8" width="4.1" height="1.3" fill="#aaaaaa" opacity="0.252"/><rect x="281.3" y="6.8" width="13.0" height="1.3" fill="#aaaaaa" opacity="0.252"/><rect x="300.3" y="6.8" width="1.7" height="1.3" fill="#aaaaaa" opacity="0.252"/><rect x="12.0" y="11.5" width="4.6" height="1.2" fill="#aaaaaa" opacity="0.216"/><rect x="17.9" y="11.5" width="12.6" height="1.2" fill="#aaaaaa" opacity="0.216"/><rect x="31.8" y="11.5" width="13.7" height="1.2" fill="#aaaaaa" opacity="0.216"/><rect x="46.7" y="11.5" width="3.8" height="1.2" fill="#aaaaaa" opacity="0.216"/><rect x="51.9" y="11.5" width="11.6" height="1.2" fill="#aaaaaa" opacity="0.216"/><rect x="64.8" y="11.5" width="5.9" height="1.2" fill="#aaaaaa" opacity="0.216"/><rect x="72.0" y="11.5" width="9.9" height="1.2" fill="#aaaaaa" opacity="0.216"/><rect x="83.1" y="11.5" width="7.4" height="1.2" fill="#aaaaaa" opacity="0.216"/><rect x="91.8" y="11.5" width="3.9" height="1.2" fill="#aaaaaa" opacity="0.216"/><rect x="97.0" y="11.5" width="5.0" height="1.2" fill="#aaaaaa" opacity="0.216"/><rect x="12.0" y="15.0" width="10.4" height="1.2" fill="#aaaaaa" opacity="0.216"/><rect x="25.4" y="15.0" width="8.9" height="1.2" fill="#aaaaaa" opacity="0.216"/><rect x="37.3" y="15.0" width="13.5" height="1.2" fill="#aaaaaa" opacity="0.216"/><rect x="53.8" y="15.0" width="9.9" height="1.2" fill="#aaaaaa" opacity="0.216"/><rect x="66.7" y="15.0" width="12.8" height="1.2" fill="#aaaaaa" opacity="0.216"/><text x="12.5" y="26" font-family="Liberation Sans" font-size="5.6" fill="#e6e6e6" textLength="62">Assignmnet 1 (100 points)</text><rect x="13.0" y="33.0" width="6.4" height="1.8" fill="#e8e8e8" opacity="0.54"/><rect x="13.0" y="36.2" width="7.0" height="1.8" fill="#e8e8e8" opacity="0.54"/><rect x="13.0" y="39.4" width="4.6" height="1.8" fill="#e8e8e8" opacity="0.54"/><rect x="18.6" y="39.4" width="5.4" height="1.8" fill="#e8e8e8" opacity="0.54"/><rect x="13.0" y="42.6" width="5.0" height="1.8" fill="#e8e8e8" opacity="0.54"/><rect x="19.0" y="42.6" width="4.6" height="1.8" fill="#e8e8e8" opacity="0.54"/><rect x="24.6" y="42.6" width="3.6" height="1.8" fill="#e8e8e8" opacity="0.54"/><rect x="29.2" y="42.6" width="9.8" height="1.8" fill="#e8e8e8" opacity="0.54"/><rect x="13.0" y="52.0" width="11.8" height="2.4" fill="#d0d0d0" opacity="0.432"/><rect x="26.0" y="52.0" width="11.3" height="2.4" fill="#d0d0d0" opacity="0.432"/><rect x="38.6" y="52.0" width="5.9" height="2.4" fill="#d0d0d0" opacity="0.432"/><rect x="45.7" y="52.0" width="6.5" height="2.4" fill="#d0d0d0" opacity="0.432"/><rect x="53.4" y="52.0" width="7.7" height="2.4" fill="#d0d0d0" opacity="0.432"/><rect x="13.0" y="61.5" width="3.9" height="1.3" fill="#cccccc" opacity="0.288"/><rect x="18.2" y="61.5" width="2.3" height="1.3" fill="#cccccc" opacity="0.288"/><rect x="21.9" y="61.5" width="4.2" height="1.3" fill="#cccccc" opacity="0.288"/><rect x="27.3" y="61.5" width="4.6" height="1.3" fill="#cccccc" opacity="0.288"/><rect x="33.2" y="61.5" width="3.5" height="1.3" fill="#cccccc" opacity="0.288"/><rect x="38.0" y="61.5" width="4.5" height="1.3" fill="#cccccc" opacity="0.288"/><rect x="43.8" y="61.5" width="6.1" height="1.3" fill="#cccccc" opacity="0.288"/><rect x="51.1" y="61.5" width="3.1" height="1.3" fill="#cccccc" opacity="0.288"/><rect x="55.5" y="61.5" width="3.1" height="1.3" fill="#cccccc" opacity="0.288"/><rect x="59.9" y="61.5" width="5.7" height="1.3" fill="#cccccc" opacity="0.288"/><rect x="66.8" y="61.5" width="4.3" height="1.3" fill="#cccccc" opacity="0.288"/><rect x="72.4" y="61.5" width="6.1" height="1.3" fill="#cccccc" opacity="0.288"/><rect x="79.8" y="61.5" width="5.0" height="1.3" fill="#cccccc" opacity="0.288"/><rect x="86.1" y="61.5" width="5.5" height="1.3" fill="#cccccc" opacity="0.288"/><rect x="92.9" y="61.5" width="3.4" height="1.3" fill="#cccccc" opacity="0.288"/><rect x="97.6" y="61.5" width="5.8" height="1.3" fill="#cccccc" opacity="0.288"/><rect x="104.7" y="61.5" width="4.8" height="1.3" fill="#cccccc" opacity="0.288"/><rect x="110.8" y="61.5" width="6.0" height="1.3" fill="#cccccc" opacity="0.288"/><rect x="118.1" y="61.5" width="7.4" height="1.3" fill="#cccccc" opacity="0.288"/><rect x="126.8" y="61.5" width="4.8" height="1.3" fill="#cccccc" opacity="0.288"/><rect x="132.9" y="61.5" width="3.7" height="1.3" fill="#cccccc" opacity="0.288"/><rect x="137.9" y="61.5" width="5.3" height="1.3" fill="#cccccc" opacity="0.288"/><rect x="144.5" y="61.5" width="2.4" height="1.3" fill="#cccccc" opacity="0.288"/><rect x="148.2" y="61.5" width="7.7" height="1.3" fill="#cccccc" opacity="0.288"/><rect x="157.2" y="61.5" width="7.9" height="1.3" fill="#cccccc" opacity="0.288"/><rect x="166.4" y="61.5" width="3.8" height="1.3" fill="#cccccc" opacity="0.288"/><rect x="171.5" y="61.5" width="6.5" height="1.3" fill="#cccccc" opacity="0.288"/><rect x="13.0" y="67.5" width="6.1" height="1.3" fill="#cccccc" opacity="0.288"/><rect x="20.4" y="67.5" width="4.7" height="1.3" fill="#cccccc" opacity="0.288"/><rect x="26.5" y="67.5" width="3.8" height="1.3" fill="#cccccc" opacity="0.288"/><rect x="31.6" y="67.5" width="8.0" height="1.3" fill="#cccccc" opacity="0.288"/><rect x="40.9" y="67.5" width="7.1" height="1.3" fill="#cccccc" opacity="0.288"/><rect x="49.3" y="67.5" width="2.6" height="1.3" fill="#cccccc" opacity="0.288"/><rect x="53.3" y="67.5" width="4.3" height="1.3" fill="#cccccc" opacity="0.288"/><rect x="58.8" y="67.5" width="4.2" height="1.3" fill="#cccccc" opacity="0.288"/><rect x="64.3" y="67.5" width="3.8" height="1.3" fill="#cccccc" opacity="0.288"/><rect x="69.4" y="67.5" width="6.2" height="1.3" fill="#cccccc" opacity="0.288"/><rect x="76.9" y="67.5" width="2.1" height="1.3" fill="#cccccc" opacity="0.288"/><rect x="80.3" y="67.5" width="7.0" height="1.3" fill="#cccccc" opacity="0.288"/><rect x="88.6" y="67.5" width="4.4" height="1.3" fill="#cccccc" opacity="0.288"/><rect x="94.3" y="67.5" width="2.0" height="1.3" fill="#cccccc" opacity="0.288"/><rect x="97.6" y="67.5" width="7.2" height="1.3" fill="#cccccc" opacity="0.288"/><rect x="106.1" y="67.5" width="6.7" height="1.3" fill="#cccccc" opacity="0.288"/><rect x="114.1" y="67.5" width="7.8" height="1.3" fill="#cccccc" opacity="0.288"/><rect x="123.2" y="67.5" width="7.5" height="1.3" fill="#cccccc" opacity="0.288"/><rect x="132.0" y="67.5" width="6.5" height="1.3" fill="#cccccc" opacity="0.288"/><rect x="139.7" y="67.5" width="7.0" height="1.3" fill="#cccccc" opacity="0.288"/><rect x="148.0" y="67.5" width="7.4" height="1.3" fill="#cccccc" opacity="0.288"/><rect x="156.8" y="67.5" width="6.7" height="1.3" fill="#cccccc" opacity="0.288"/><rect x="164.7" y="67.5" width="3.4" height="1.3" fill="#cccccc" opacity="0.288"/><rect x="169.4" y="67.5" width="6.8" height="1.3" fill="#cccccc" opacity="0.288"/><rect x="177.5" y="67.5" width="3.3" height="1.3" fill="#cccccc" opacity="0.288"/><rect x="182.1" y="67.5" width="3.1" height="1.3" fill="#cccccc" opacity="0.288"/><rect x="186.6" y="67.5" width="3.5" height="1.3" fill="#cccccc" opacity="0.288"/><rect x="191.4" y="67.5" width="6.5" height="1.3" fill="#cccccc" opacity="0.288"/><rect x="199.2" y="67.5" width="6.6" height="1.3" fill="#cccccc" opacity="0.288"/><rect x="207.1" y="67.5" width="6.1" height="1.3" fill="#cccccc" opacity="0.288"/><rect x="214.5" y="67.5" width="2.8" height="1.3" fill="#cccccc" opacity="0.288"/><rect x="218.6" y="67.5" width="2.6" height="1.3" fill="#cccccc" opacity="0.288"/><rect x="222.5" y="67.5" width="5.8" height="1.3" fill="#cccccc" opacity="0.288"/><rect x="229.5" y="67.5" width="2.2" height="1.3" fill="#cccccc" opacity="0.288"/><rect x="233.1" y="67.5" width="6.7" height="1.3" fill="#cccccc" opacity="0.288"/><rect x="241.1" y="67.5" width="2.2" height="1.3" fill="#cccccc" opacity="0.288"/><rect x="244.6" y="67.5" width="4.2" height="1.3" fill="#cccccc" opacity="0.288"/><rect x="250.1" y="67.5" width="2.8" height="1.3" fill="#cccccc" opacity="0.288"/><rect x="254.2" y="67.5" width="7.5" height="1.3" fill="#cccccc" opacity="0.288"/><rect x="263.0" y="67.5" width="4.0" height="1.3" fill="#cccccc" opacity="0.288"/><rect x="268.2" y="67.5" width="4.5" height="1.3" fill="#cccccc" opacity="0.288"/><rect x="274.0" y="67.5" width="3.2" height="1.3" fill="#cccccc" opacity="0.288"/><rect x="278.5" y="67.5" width="6.7" height="1.3" fill="#cccccc" opacity="0.288"/><rect x="286.5" y="67.5" width="7.3" height="1.3" fill="#cccccc" opacity="0.288"/><rect x="295.1" y="67.5" width="4.2" height="1.3" fill="#cccccc" opacity="0.288"/><rect x="300.6" y="67.5" width="5.0" height="1.3" fill="#cccccc" opacity="0.288"/><rect x="306.9" y="67.5" width="3.6" height="1.3" fill="#cccccc" opacity="0.288"/><rect x="311.8" y="67.5" width="1.2" height="1.3" fill="#cccccc" opacity="0.288"/><rect x="10.0" y="72.0" width="308.0" height="100.0" fill="#1a1a1a"/><rect x="25.0" y="75.0" width="7.4" height="1.6" fill="#dcdcaa" opacity="0.36"/><rect x="35.5" y="75.0" width="10.0" height="1.6" fill="#d4d4d4" opacity="0.36"/><rect x="47.3" y="75.0" width="17.5" height="1.6" fill="#d4d4d4" opacity="0.36"/><rect x="67.8" y="75.0" width="17.7" height="1.6" fill="#d4d4d4" opacity="0.36"/><rect x="87.7" y="75.0" width="14.9" height="1.6" fill="#9cdcfe" opacity="0.36"/><rect x="104.6" y="75.0" width="4.9" height="1.6" fill="#dcdcaa" opacity="0.36"/><rect x="19.0" y="77.7" width="6.5" height="1.6" fill="#9cdcfe" opacity="0.36"/><rect x="28.2" y="77.7" width="12.5" height="1.6" fill="#dcdcaa" opacity="0.36"/><rect x="19.0" y="80.3" width="10.0" height="1.6" fill="#6a9955" opacity="0.36"/><rect x="31.1" y="80.3" width="9.1" height="1.6" fill="#ce9178" opacity="0.36"/><rect x="41.8" y="80.3" width="3.6" height="1.6" fill="#569cd6" opacity="0.36"/><rect x="47.1" y="80.3" width="6.5" height="1.6" fill="#d4d4d4" opacity="0.36"/><rect x="55.4" y="80.3" width="9.8" height="1.6" fill="#d4d4d4" opacity="0.36"/><rect x="68.6" y="80.3" width="12.5" height="1.6" fill="#d4d4d4" opacity="0.36"/><rect x="19.0" y="83.0" width="12.8" height="1.6" fill="#569cd6" opacity="0.36"/><rect x="34.6" y="83.0" width="17.1" height="1.6" fill="#6a9955" opacity="0.36"/><rect x="53.2" y="83.0" width="8.6" height="1.6" fill="#569cd6" opacity="0.36"/><rect x="64.2" y="83.0" width="6.5" height="1.6" fill="#dcdcaa" opacity="0.36"/><rect x="72.4" y="83.0" width="13.3" height="1.6" fill="#d4d4d4" opacity="0.36"/><rect x="89.0" y="83.0" width="11.3" height="1.6" fill="#9cdcfe" opacity="0.36"/><rect x="19.0" y="85.6" width="15.4" height="1.6" fill="#d4d4d4" opacity="0.36"/><rect x="37.2" y="85.6" width="12.6" height="1.6" fill="#d4d4d4" opacity="0.36"/><rect x="53.3" y="85.6" width="3.8" height="1.6" fill="#dcdcaa" opacity="0.36"/><rect x="59.0" y="85.6" width="4.9" height="1.6" fill="#d4d4d4" opacity="0.36"/><rect x="65.8" y="85.6" width="15.4" height="1.6" fill="#d4d4d4" opacity="0.36"/><rect x="83.2" y="85.6" width="6.2" height="1.6" fill="#c586c0" opacity="0.36"/><rect x="91.6" y="85.6" width="5.2" height="1.6" fill="#d4d4d4" opacity="0.36"/><rect x="98.3" y="85.6" width="6.8" height="1.6" fill="#ce9178" opacity="0.36"/><rect x="19.0" y="88.3" width="16.0" height="1.6" fill="#ce9178" opacity="0.36"/><rect x="36.5" y="88.3" width="4.4" height="1.6" fill="#c586c0" opacity="0.36"/><rect x="19.0" y="93.6" width="10.9" height="1.6" fill="#6a9955" opacity="0.36"/><rect x="31.5" y="93.6" width="9.7" height="1.6" fill="#dcdcaa" opacity="0.36"/><rect x="43.8" y="93.6" width="4.6" height="1.6" fill="#d4d4d4" opacity="0.36"/><rect x="50.3" y="93.6" width="12.2" height="1.6" fill="#6a9955" opacity="0.36"/><rect x="65.6" y="93.6" width="16.0" height="1.6" fill="#d4d4d4" opacity="0.36"/><rect x="83.7" y="93.6" width="5.5" height="1.6" fill="#9cdcfe" opacity="0.36"/><rect x="25.0" y="96.2" width="4.6" height="1.6" fill="#6a9955" opacity="0.36"/><rect x="32.9" y="96.2" width="4.1" height="1.6" fill="#d4d4d4" opacity="0.36"/><rect x="39.2" y="96.2" width="5.2" height="1.6" fill="#ce9178" opacity="0.36"/><rect x="46.5" y="96.2" width="12.5" height="1.6" fill="#d4d4d4" opacity="0.36"/><rect x="61.9" y="96.2" width="8.7" height="1.6" fill="#d4d4d4" opacity="0.36"/><rect x="31.0" y="98.9" width="14.9" height="1.6" fill="#d4d4d4" opacity="0.36"/><rect x="49.1" y="98.9" width="12.8" height="1.6" fill="#d4d4d4" opacity="0.36"/><rect x="64.8" y="98.9" width="6.2" height="1.6" fill="#569cd6" opacity="0.36"/><rect x="74.3" y="98.9" width="3.1" height="1.6" fill="#569cd6" opacity="0.36"/><rect x="19.0" y="101.5" width="13.0" height="1.6" fill="#dcdcaa" opacity="0.36"/><rect x="35.4" y="101.5" width="13.3" height="1.6" fill="#569cd6" opacity="0.36"/><rect x="50.3" y="101.5" width="14.8" height="1.6" fill="#d4d4d4" opacity="0.36"/><rect x="19.0" y="104.2" width="11.3" height="1.6" fill="#d4d4d4" opacity="0.36"/><rect x="33.8" y="104.2" width="11.4" height="1.6" fill="#d4d4d4" opacity="0.36"/><rect x="46.9" y="104.2" width="8.3" height="1.6" fill="#d4d4d4" opacity="0.36"/><rect x="58.6" y="104.2" width="9.3" height="1.6" fill="#6a9955" opacity="0.36"/><rect x="69.6" y="104.2" width="7.3" height="1.6" fill="#6a9955" opacity="0.36"/><rect x="79.1" y="104.2" width="11.7" height="1.6" fill="#c586c0" opacity="0.36"/><rect x="92.6" y="104.2" width="2.0" height="1.6" fill="#d4d4d4" opacity="0.36"/><rect x="19.0" y="106.8" width="11.6" height="1.6" fill="#d4d4d4" opacity="0.36"/><rect x="33.8" y="106.8" width="17.6" height="1.6" fill="#d4d4d4" opacity="0.36"/><rect x="54.1" y="106.8" width="12.6" height="1.6" fill="#9cdcfe" opacity="0.36"/><rect x="69.5" y="106.8" width="12.9" height="1.6" fill="#6a9955" opacity="0.36"/><rect x="84.4" y="106.8" width="5.7" height="1.6" fill="#6a9955" opacity="0.36"/><rect x="19.0" y="109.5" width="14.0" height="1.6" fill="#d4d4d4" opacity="0.36"/><rect x="19.0" y="114.8" width="11.0" height="1.6" fill="#d4d4d4" opacity="0.36"/><rect x="32.3" y="114.8" width="7.2" height="1.6" fill="#dcdcaa" opacity="0.36"/><rect x="31.0" y="117.4" width="16.3" height="1.6" fill="#ce9178" opacity="0.36"/><rect x="49.1" y="117.4" width="12.3" height="1.6" fill="#d4d4d4" opacity="0.36"/><rect x="63.0" y="117.4" width="9.6" height="1.6" fill="#d4d4d4" opacity="0.36"/><rect x="75.1" y="117.4" width="9.6" height="1.6" fill="#6a9955" opacity="0.36"/><rect x="86.7" y="117.4" width="3.4" height="1.6" fill="#dcdcaa" opacity="0.36"/><rect x="31.0" y="120.1" width="13.0" height="1.6" fill="#9cdcfe" opacity="0.36"/><rect x="45.9" y="120.1" width="17.8" height="1.6" fill="#9cdcfe" opacity="0.36"/><rect x="65.2" y="120.1" width="7.5" height="1.6" fill="#c586c0" opacity="0.36"/><rect x="75.8" y="120.1" width="5.9" height="1.6" fill="#6a9955" opacity="0.36"/><rect x="19.0" y="125.4" width="11.0" height="1.6" fill="#c586c0" opacity="0.36"/><rect x="32.5" y="125.4" width="9.9" height="1.6" fill="#dcdcaa" opacity="0.36"/><rect x="19.0" y="128.0" width="9.9" height="1.6" fill="#d4d4d4" opacity="0.36"/><rect x="32.1" y="128.0" width="11.6" height="1.6" fill="#d4d4d4" opacity="0.36"/><rect x="46.1" y="128.0" width="12.6" height="1.6" fill="#6a9955" opacity="0.36"/><rect x="60.4" y="128.0" width="3.3" height="1.6" fill="#dcdcaa" opacity="0.36"/><rect x="19.0" y="130.7" width="15.7" height="1.6" fill="#c586c0" opacity="0.36"/><rect x="37.0" y="130.7" width="2.2" height="1.6" fill="#d4d4d4" opacity="0.36"/><rect x="19.0" y="133.3" width="14.7" height="1.6" fill="#d4d4d4" opacity="0.36"/><rect x="36.2" y="133.3" width="4.7" height="1.6" fill="#d4d4d4" opacity="0.36"/><rect x="42.8" y="133.3" width="6.6" height="1.6" fill="#dcdcaa" opacity="0.36"/><rect x="19.0" y="136.0" width="5.2" height="1.6" fill="#c586c0" opacity="0.36"/><rect x="26.0" y="136.0" width="5.3" height="1.6" fill="#d4d4d4" opacity="0.36"/><rect x="33.0" y="136.0" width="17.3" height="1.6" fill="#d4d4d4" opacity="0.36"/><rect x="31.0" y="138.6" width="16.9" height="1.6" fill="#d4d4d4" opacity="0.36"/><rect x="50.6" y="138.6" width="17.8" height="1.6" fill="#dcdcaa" opacity="0.36"/><rect x="71.7" y="138.6" width="7.2" height="1.6" fill="#ce9178" opacity="0.36"/><rect x="19.0" y="141.3" width="11.9" height="1.6" fill="#dcdcaa" opacity="0.36"/><rect x="33.4" y="141.3" width="7.7" height="1.6" fill="#569cd6" opacity="0.36"/><rect x="42.6" y="141.3" width="8.5" height="1.6" fill="#6a9955" opacity="0.36"/><rect x="52.8" y="141.3" width="16.0" height="1.6" fill="#d4d4d4" opacity="0.36"/><rect x="71.5" y="141.3" width="10.6" height="1.6" fill="#569cd6" opacity="0.36"/><rect x="84.8" y="141.3" width="8.7" height="1.6" fill="#6a9955" opacity="0.36"/><rect x="31.0" y="143.9" width="7.8" height="1.6" fill="#569cd6" opacity="0.36"/><rect x="41.3" y="143.9" width="17.4" height="1.6" fill="#569cd6" opacity="0.36"/><rect x="60.4" y="143.9" width="16.5" height="1.6" fill="#dcdcaa" opacity="0.36"/><rect x="80.4" y="143.9" width="4.3" height="1.6" fill="#d4d4d4" opacity="0.36"/><rect x="86.5" y="143.9" width="6.7" height="1.6" fill="#569cd6" opacity="0.36"/><rect x="31.0" y="146.6" width="8.6" height="1.6" fill="#6a9955" opacity="0.36"/><rect x="41.9" y="146.6" width="14.6" height="1.6" fill="#d4d4d4" opacity="0.36"/><rect x="19.0" y="149.2" width="4.4" height="1.6" fill="#d4d4d4" opacity="0.36"/><rect x="25.7" y="149.2" width="6.8" height="1.6" fill="#d4d4d4" opacity="0.36"/><rect x="35.9" y="149.2" width="1.6" height="1.6" fill="#ce9178" opacity="0.36"/><rect x="19.0" y="151.9" width="7.7" height="1.6" fill="#d4d4d4" opacity="0.36"/><rect x="29.6" y="151.9" width="8.9" height="1.6" fill="#d4d4d4" opacity="0.36"/><rect x="41.3" y="151.9" width="4.3" height="1.6" fill="#d4d4d4" opacity="0.36"/><rect x="47.9" y="151.9" width="14.9" height="1.6" fill="#ce9178" opacity="0.36"/><rect x="65.6" y="151.9" width="15.4" height="1.6" fill="#6a9955" opacity="0.36"/><rect x="84.5" y="151.9" width="16.7" height="1.6" fill="#d4d4d4" opacity="0.36"/><rect x="19.0" y="154.5" width="7.6" height="1.6" fill="#c586c0" opacity="0.36"/><rect x="28.8" y="154.5" width="5.1" height="1.6" fill="#c586c0" opacity="0.36"/><rect x="19.0" y="157.2" width="14.8" height="1.6" fill="#d4d4d4" opacity="0.36"/><rect x="36.9" y="157.2" width="15.5" height="1.6" fill="#d4d4d4" opacity="0.36"/><rect x="54.0" y="157.2" width="1.2" height="1.6" fill="#d4d4d4" opacity="0.36"/><rect x="19.0" y="159.8" width="13.4" height="1.6" fill="#d4d4d4" opacity="0.36"/><rect x="35.5" y="159.8" width="5.5" height="1.6" fill="#569cd6" opacity="0.36"/><rect x="42.6" y="159.8" width="3.8" height="1.6" fill="#6a9955" opacity="0.36"/><rect x="19.0" y="162.5" width="14.8" height="1.6" fill="#c586c0" opacity="0.36"/><rect x="36.3" y="162.5" width="7.6" height="1.6" fill="#569cd6" opacity="0.36"/><rect x="47.3" y="162.5" width="5.9" height="1.6" fill="#d4d4d4" opacity="0.36"/><rect x="56.6" y="162.5" width="17.8" height="1.6" fill="#569cd6" opacity="0.36"/><rect x="77.4" y="162.5" width="12.7" height="1.6" fill="#d4d4d4" opacity="0.36"/><rect x="19.0" y="165.1" width="5.1" height="1.6" fill="#6a9955" opacity="0.36"/><rect x="25.7" y="165.1" width="10.2" height="1.6" fill="#dcdcaa" opacity="0.36"/><rect x="38.5" y="165.1" width="4.5" height="1.6" fill="#d4d4d4" opacity="0.36"/><rect x="46.2" y="165.1" width="7.3" height="1.6" fill="#ce9178" opacity="0.36"/><rect x="55.6" y="165.1" width="16.6" height="1.6" fill="#ce9178" opacity="0.36"/><rect x="75.3" y="165.1" width="4.4" height="1.6" fill="#c586c0" opacity="0.36"/><rect x="82.8" y="165.1" width="11.0" height="1.6" fill="#9cdcfe" opacity="0.36"/><rect x="19.0" y="167.8" width="17.9" height="1.6" fill="#dcdcaa" opacity="0.36"/><rect x="38.9" y="167.8" width="7.8" height="1.6" fill="#d4d4d4" opacity="0.36"/><rect x="0.0" y="171.5" width="318.0" height="7.5" fill="#1a1d26"/><rect x="4.0" y="174.0" width="2.4" height="2.5" fill="#8a9ab8" opacity="0.252"/><rect x="9.4" y="174.0" width="2.9" height="2.5" fill="#8a9ab8" opacity="0.252"/><rect x="15.3" y="174.0" width="4.5" height="2.5" fill="#8a9ab8" opacity="0.252"/><rect x="22.8" y="174.0" width="4.1" height="2.5" fill="#8a9ab8" opacity="0.252"/><rect x="29.9" y="174.0" width="2.4" height="2.5" fill="#8a9ab8" opacity="0.252"/><rect x="35.3" y="174.0" width="4.1" height="2.5" fill="#8a9ab8" opacity="0.252"/><rect x="42.4" y="174.0" width="3.3" height="2.5" fill="#8a9ab8" opacity="0.252"/><rect x="48.7" y="174.0" width="2.0" height="2.5" fill="#8a9ab8" opacity="0.252"/><rect x="53.7" y="174.0" width="2.2" height="2.5" fill="#8a9ab8" opacity="0.252"/><rect x="59.0" y="174.0" width="2.8" height="2.5" fill="#8a9ab8" opacity="0.252"/><rect x="64.8" y="174.0" width="4.5" height="2.5" fill="#8a9ab8" opacity="0.252"/><rect x="72.3" y="174.0" width="3.6" height="2.5" fill="#8a9ab8" opacity="0.252"/><rect x="78.9" y="174.0" width="4.2" height="2.5" fill="#8a9ab8" opacity="0.252"/><rect x="86.1" y="174.0" width="3.6" height="2.5" fill="#8a9ab8" opacity="0.252"/><rect x="92.7" y="174.0" width="2.3" height="2.5" fill="#8a9ab8" opacity="0.252"/><rect x="98.0" y="174.0" width="2.9" height="2.5" fill="#8a9ab8" opacity="0.252"/><rect x="103.9" y="174.0" width="2.9" height="2.5" fill="#8a9ab8" opacity="0.252"/><rect x="109.8" y="174.0" width="2.1" height="2.5" fill="#8a9ab8" opacity="0.252"/><rect x="114.9" y="174.0" width="3.3" height="2.5" fill="#8a9ab8" opacity="0.252"/><rect x="121.2" y="174.0" width="4.4" height="2.5" fill="#8a9ab8" opacity="0.252"/><rect x="128.6" y="174.0" width="3.4" height="2.5" fill="#8a9ab8" opacity="0.252"/><rect x="134.9" y="174.0" width="2.3" height="2.5" fill="#8a9ab8" opacity="0.252"/><rect x="140.3" y="174.0" width="3.7" height="2.5" fill="#8a9ab8" opacity="0.252"/></g></svg>
<svg style="left:282px;top:442.2px;overflow:hidden" width="318" height="179" viewBox="0 0 318 179"><g filter="url(#bl)"><rect x="0.0" y="0.0" width="318.0" height="179.0" fill="#161616"/><rect x="0.0" y="0.0" width="318.0" height="7.0" fill="#131313"/><rect x="3.0" y="2.5" width="9.6" height="1.6" fill="#bbbbbb" opacity="0.324"/><rect x="16.6" y="2.5" width="3.2" height="1.6" fill="#bbbbbb" opacity="0.324"/><rect x="23.7" y="2.5" width="8.7" height="1.6" fill="#bbbbbb" opacity="0.324"/><rect x="36.4" y="2.5" width="5.7" height="1.6" fill="#bbbbbb" opacity="0.324"/><rect x="46.1" y="2.5" width="4.6" height="1.6" fill="#bbbbbb" opacity="0.324"/><rect x="54.7" y="2.5" width="7.7" height="1.6" fill="#bbbbbb" opacity="0.324"/><rect x="66.4" y="2.5" width="9.8" height="1.6" fill="#bbbbbb" opacity="0.324"/><rect x="80.1" y="2.5" width="5.6" height="1.6" fill="#bbbbbb" opacity="0.324"/><rect x="89.8" y="2.5" width="7.6" height="1.6" fill="#bbbbbb" opacity="0.324"/><rect x="4.0" y="8.6" width="10.3" height="1.3" fill="#aaaaaa" opacity="0.252"/><rect x="16.3" y="8.6" width="3.9" height="1.3" fill="#aaaaaa" opacity="0.252"/><rect x="22.2" y="8.6" width="13.7" height="1.3" fill="#aaaaaa" opacity="0.252"/><rect x="38.0" y="8.6" width="3.7" height="1.3" fill="#aaaaaa" opacity="0.252"/><rect x="43.7" y="8.6" width="8.8" height="1.3" fill="#aaaaaa" opacity="0.252"/><rect x="54.5" y="8.6" width="8.6" height="1.3" fill="#aaaaaa" opacity="0.252"/><rect x="65.1" y="8.6" width="13.9" height="1.3" fill="#aaaaaa" opacity="0.252"/><rect x="81.0" y="8.6" width="9.1" height="1.3" fill="#aaaaaa" opacity="0.252"/><rect x="92.1" y="8.6" width="7.3" height="1.3" fill="#aaaaaa" opacity="0.252"/><rect x="101.3" y="8.6" width="8.2" height="1.3" fill="#aaaaaa" opacity="0.252"/><rect x="111.5" y="8.6" width="10.0" height="1.3" fill="#aaaaaa" opacity="0.252"/><rect x="123.5" y="8.6" width="13.8" height="1.3" fill="#aaaaaa" opacity="0.252"/><rect x="139.3" y="8.6" width="5.8" height="1.3" fill="#aaaaaa" opacity="0.252"/><rect x="147.1" y="8.6" width="3.2" height="1.3" fill="#aaaaaa" opacity="0.252"/><rect x="152.3" y="8.6" width="1.7" height="1.3" fill="#aaaaaa" opacity="0.252"/><rect x="4.0" y="12.6" width="6.8" height="1.3" fill="#aaaaaa" opacity="0.252"/><rect x="13.8" y="12.6" width="11.1" height="1.3" fill="#aaaaaa" opacity="0.252"/><rect x="27.9" y="12.6" width="9.9" height="1.3" fill="#aaaaaa" opacity="0.252"/><rect x="40.8" y="12.6" width="11.5" height="1.3" fill="#aaaaaa" opacity="0.252"/><rect x="55.3" y="12.6" width="11.1" height="1.3" fill="#aaaaaa" opacity="0.252"/><rect x="69.3" y="12.6" width="6.7" height="1.3" fill="#aaaaaa" opacity="0.252"/><rect x="79.0" y="12.6" width="3.5" height="1.3" fill="#aaaaaa" opacity="0.252"/><rect x="85.5" y="12.6" width="9.0" height="1.3" fill="#aaaaaa" opacity="0.252"/><rect x="97.5" y="12.6" width="11.9" height="1.3" fill="#aaaaaa" opacity="0.252"/><rect x="112.4" y="12.6" width="1.6" height="1.3" fill="#aaaaaa" opacity="0.252"/><text x="8.2" y="29" font-family="Liberation Sans" font-size="7.7" fill="#e4e4e4" textLength="75.8">Assignmnet 1 (100 points)</text><rect x="8.2" y="37.0" width="11.8" height="2.4" fill="#e4e4e4" opacity="0.576"/><rect x="21.0" y="37.0" width="8.6" height="2.4" fill="#e4e4e4" opacity="0.576"/><rect x="30.6" y="37.0" width="3.6" height="2.4" fill="#e4e4e4" opacity="0.576"/><rect x="8.2" y="41.0" width="10.3" height="2.4" fill="#e4e4e4" opacity="0.576"/><rect x="19.5" y="41.0" width="12.1" height="2.4" fill="#e4e4e4" opacity="0.576"/><rect x="32.6" y="41.0" width="3.6" height="2.4" fill="#e4e4e4" opacity="0.576"/><rect x="8.2" y="45.0" width="11.8" height="2.4" fill="#e4e4e4" opacity="0.576"/><rect x="8.2" y="49.0" width="8.6" height="2.4" fill="#e4e4e4" opacity="0.576"/><rect x="17.8" y="49.0" width="6.9" height="2.4" fill="#e4e4e4" opacity="0.576"/><rect x="25.7" y="49.0" width="4.4" height="2.4" fill="#e4e4e4" opacity="0.576"/><rect x="31.1" y="49.0" width="6.0" height="2.4" fill="#e4e4e4" opacity="0.576"/><rect x="38.1" y="49.0" width="2.1" height="2.4" fill="#e4e4e4" opacity="0.576"/><rect x="8.2" y="59.8" width="13.4" height="2.8" fill="#d0d0d0" opacity="0.396"/><rect x="23.1" y="59.8" width="9.6" height="2.8" fill="#d0d0d0" opacity="0.396"/><rect x="34.2" y="59.8" width="13.9" height="2.8" fill="#d0d0d0" opacity="0.396"/><rect x="49.6" y="59.8" width="9.9" height="2.8" fill="#d0d0d0" opacity="0.396"/><rect x="61.0" y="59.8" width="7.3" height="2.8" fill="#d0d0d0" opacity="0.396"/><rect x="8.2" y="71.2" width="3.3" height="1.6" fill="#cfcfcf" opacity="0.324"/><rect x="12.8" y="71.2" width="4.5" height="1.6" fill="#cfcfcf" opacity="0.324"/><rect x="18.6" y="71.2" width="7.5" height="1.6" fill="#cfcfcf" opacity="0.324"/><rect x="27.4" y="71.2" width="8.1" height="1.6" fill="#cfcfcf" opacity="0.324"/><rect x="36.8" y="71.2" width="4.3" height="1.6" fill="#cfcfcf" opacity="0.324"/><rect x="42.4" y="71.2" width="2.9" height="1.6" fill="#cfcfcf" opacity="0.324"/><rect x="46.6" y="71.2" width="4.6" height="1.6" fill="#cfcfcf" opacity="0.324"/><rect x="52.4" y="71.2" width="8.2" height="1.6" fill="#cfcfcf" opacity="0.324"/><rect x="62.0" y="71.2" width="7.2" height="1.6" fill="#cfcfcf" opacity="0.324"/><rect x="70.5" y="71.2" width="8.3" height="1.6" fill="#cfcfcf" opacity="0.324"/><rect x="80.0" y="71.2" width="4.7" height="1.6" fill="#cfcfcf" opacity="0.324"/><rect x="86.0" y="71.2" width="8.8" height="1.6" fill="#cfcfcf" opacity="0.324"/><rect x="96.1" y="71.2" width="5.5" height="1.6" fill="#cfcfcf" opacity="0.324"/><rect x="102.9" y="71.2" width="5.5" height="1.6" fill="#cfcfcf" opacity="0.324"/><rect x="109.7" y="71.2" width="8.5" height="1.6" fill="#cfcfcf" opacity="0.324"/><rect x="119.5" y="71.2" width="5.6" height="1.6" fill="#cfcfcf" opacity="0.324"/><rect x="126.4" y="71.2" width="7.6" height="1.6" fill="#cfcfcf" opacity="0.324"/><rect x="135.3" y="71.2" width="7.1" height="1.6" fill="#cfcfcf" opacity="0.324"/><rect x="143.7" y="71.2" width="2.6" height="1.6" fill="#cfcfcf" opacity="0.324"/><rect x="147.6" y="71.2" width="6.2" height="1.6" fill="#cfcfcf" opacity="0.324"/><rect x="155.1" y="71.2" width="7.8" height="1.6" fill="#cfcfcf" opacity="0.324"/><rect x="164.1" y="71.2" width="5.8" height="1.6" fill="#cfcfcf" opacity="0.324"/><rect x="171.3" y="71.2" width="4.2" height="1.6" fill="#cfcfcf" opacity="0.324"/><rect x="176.8" y="71.2" width="2.6" height="1.6" fill="#cfcfcf" opacity="0.324"/><rect x="180.7" y="71.2" width="6.6" height="1.6" fill="#cfcfcf" opacity="0.324"/><rect x="188.6" y="71.2" width="4.1" height="1.6" fill="#cfcfcf" opacity="0.324"/><rect x="194.0" y="71.2" width="6.2" height="1.6" fill="#cfcfcf" opacity="0.324"/><rect x="201.6" y="71.2" width="5.0" height="1.6" fill="#cfcfcf" opacity="0.324"/><rect x="207.8" y="71.2" width="2.4" height="1.6" fill="#cfcfcf" opacity="0.324"/><rect x="8.2" y="78.0" width="4.5" height="1.6" fill="#cfcfcf" opacity="0.324"/><rect x="14.0" y="78.0" width="2.3" height="1.6" fill="#cfcfcf" opacity="0.324"/><rect x="17.6" y="78.0" width="8.1" height="1.6" fill="#cfcfcf" opacity="0.324"/><rect x="26.9" y="78.0" width="4.5" height="1.6" fill="#cfcfcf" opacity="0.324"/><rect x="32.7" y="78.0" width="9.0" height="1.6" fill="#cfcfcf" opacity="0.324"/><rect x="43.0" y="78.0" width="3.9" height="1.6" fill="#cfcfcf" opacity="0.324"/><rect x="48.2" y="78.0" width="8.9" height="1.6" fill="#cfcfcf" opacity="0.324"/><rect x="58.4" y="78.0" width="8.6" height="1.6" fill="#cfcfcf" opacity="0.324"/><rect x="68.3" y="78.0" width="2.5" height="1.6" fill="#cfcfcf" opacity="0.324"/><rect x="72.1" y="78.0" width="6.5" height="1.6" fill="#cfcfcf" opacity="0.324"/><rect x="79.9" y="78.0" width="4.5" height="1.6" fill="#cfcfcf" opacity="0.324"/><rect x="85.8" y="78.0" width="7.6" height="1.6" fill="#cfcfcf" opacity="0.324"/><rect x="94.7" y="78.0" width="6.8" height="1.6" fill="#cfcfcf" opacity="0.324"/><rect x="102.7" y="78.0" width="8.7" height="1.6" fill="#cfcfcf" opacity="0.324"/><rect x="112.7" y="78.0" width="3.0" height="1.6" fill="#cfcfcf" opacity="0.324"/><rect x="117.0" y="78.0" width="6.3" height="1.6" fill="#cfcfcf" opacity="0.324"/><rect x="124.5" y="78.0" width="7.5" height="1.6" fill="#cfcfcf" opacity="0.324"/><rect x="133.3" y="78.0" width="2.2" height="1.6" fill="#cfcfcf" opacity="0.324"/><rect x="136.8" y="78.0" width="2.5" height="1.6" fill="#cfcfcf" opacity="0.324"/><rect x="140.6" y="78.0" width="7.4" height="1.6" fill="#cfcfcf" opacity="0.324"/><rect x="149.4" y="78.0" width="4.6" height="1.6" fill="#cfcfcf" opacity="0.324"/><rect x="155.2" y="78.0" width="4.7" height="1.6" fill="#cfcfcf" opacity="0.324"/><rect x="161.2" y="78.0" width="6.0" height="1.6" fill="#cfcfcf" opacity="0.324"/><rect x="168.5" y="78.0" width="6.2" height="1.6" fill="#cfcfcf" opacity="0.324"/><rect x="176.0" y="78.0" width="6.8" height="1.6" fill="#cfcfcf" opacity="0.324"/><rect x="184.1" y="78.0" width="8.6" height="1.6" fill="#cfcfcf" opacity="0.324"/><rect x="194.0" y="78.0" width="4.6" height="1.6" fill="#cfcfcf" opacity="0.324"/><rect x="199.9" y="78.0" width="7.3" height="1.6" fill="#cfcfcf" opacity="0.324"/><rect x="208.6" y="78.0" width="6.0" height="1.6" fill="#cfcfcf" opacity="0.324"/><rect x="215.9" y="78.0" width="5.7" height="1.6" fill="#cfcfcf" opacity="0.324"/><rect x="222.9" y="78.0" width="4.8" height="1.6" fill="#cfcfcf" opacity="0.324"/><rect x="229.0" y="78.0" width="6.5" height="1.6" fill="#cfcfcf" opacity="0.324"/><rect x="236.8" y="78.0" width="3.7" height="1.6" fill="#cfcfcf" opacity="0.324"/><rect x="241.9" y="78.0" width="2.8" height="1.6" fill="#cfcfcf" opacity="0.324"/><rect x="246.0" y="78.0" width="7.1" height="1.6" fill="#cfcfcf" opacity="0.324"/><rect x="254.4" y="78.0" width="5.5" height="1.6" fill="#cfcfcf" opacity="0.324"/><rect x="261.2" y="78.0" width="4.7" height="1.6" fill="#cfcfcf" opacity="0.324"/><rect x="267.2" y="78.0" width="5.9" height="1.6" fill="#cfcfcf" opacity="0.324"/><rect x="274.4" y="78.0" width="3.8" height="1.6" fill="#cfcfcf" opacity="0.324"/><rect x="279.6" y="78.0" width="3.8" height="1.6" fill="#cfcfcf" opacity="0.324"/><rect x="284.7" y="78.0" width="5.1" height="1.6" fill="#cfcfcf" opacity="0.324"/><rect x="291.1" y="78.0" width="9.0" height="1.6" fill="#cfcfcf" opacity="0.324"/><rect x="301.4" y="78.0" width="4.0" height="1.6" fill="#cfcfcf" opacity="0.324"/><rect x="306.7" y="78.0" width="1.5" height="1.6" fill="#cfcfcf" opacity="0.324"/><rect x="8.2" y="82.0" width="8.4" height="1.6" fill="#cfcfcf" opacity="0.324"/><rect x="17.9" y="82.0" width="2.3" height="1.6" fill="#cfcfcf" opacity="0.324"/><rect x="8.0" y="90.0" width="310.0" height="84.0" fill="#181818"/><rect x="24.0" y="93.0" width="13.7" height="1.9" fill="#d4d4d4" opacity="0.288"/><rect x="40.8" y="93.0" width="17.5" height="1.9" fill="#6a9955" opacity="0.288"/><rect x="61.2" y="93.0" width="13.6" height="1.9" fill="#9cdcfe" opacity="0.288"/><rect x="20.0" y="96.4" width="10.6" height="1.9" fill="#d4d4d4" opacity="0.288"/><rect x="34.1" y="96.4" width="14.9" height="1.9" fill="#d4d4d4" opacity="0.288"/><rect x="52.1" y="96.4" width="3.4" height="1.9" fill="#9cdcfe" opacity="0.288"/><rect x="58.1" y="96.4" width="10.0" height="1.9" fill="#9cdcfe" opacity="0.288"/><rect x="69.9" y="96.4" width="16.3" height="1.9" fill="#d4d4d4" opacity="0.288"/><rect x="88.3" y="96.4" width="18.0" height="1.9" fill="#ce9178" opacity="0.288"/><rect x="108.7" y="96.4" width="9.2" height="1.9" fill="#6a9955" opacity="0.288"/><rect x="121.0" y="96.4" width="4.1" height="1.9" fill="#6a9955" opacity="0.288"/><rect x="127.9" y="96.4" width="9.7" height="1.9" fill="#ce9178" opacity="0.288"/><rect x="140.2" y="96.4" width="4.9" height="1.9" fill="#dcdcaa" opacity="0.288"/><rect x="148.2" y="96.4" width="12.6" height="1.9" fill="#d4d4d4" opacity="0.288"/><rect x="163.8" y="96.4" width="4.6" height="1.9" fill="#9cdcfe" opacity="0.288"/><rect x="20.0" y="113.4" width="17.1" height="1.9" fill="#6a9955" opacity="0.288"/><rect x="40.3" y="113.4" width="6.8" height="1.9" fill="#ce9178" opacity="0.288"/><rect x="50.5" y="113.4" width="7.1" height="1.9" fill="#ce9178" opacity="0.288"/><rect x="59.7" y="113.4" width="11.0" height="1.9" fill="#9cdcfe" opacity="0.288"/><rect x="73.5" y="113.4" width="11.9" height="1.9" fill="#9cdcfe" opacity="0.288"/><rect x="87.2" y="113.4" width="12.8" height="1.9" fill="#ce9178" opacity="0.288"/><rect x="30.0" y="116.8" width="16.0" height="1.9" fill="#d4d4d4" opacity="0.288"/><rect x="47.5" y="116.8" width="12.6" height="1.9" fill="#9cdcfe" opacity="0.288"/><rect x="62.2" y="116.8" width="1.1" height="1.9" fill="#9cdcfe" opacity="0.288"/><rect x="24.0" y="120.2" width="11.2" height="1.9" fill="#ce9178" opacity="0.288"/><rect x="38.6" y="120.2" width="10.2" height="1.9" fill="#dcdcaa" opacity="0.288"/><rect x="52.0" y="120.2" width="9.1" height="1.9" fill="#6a9955" opacity="0.288"/><rect x="62.7" y="120.2" width="3.9" height="1.9" fill="#6a9955" opacity="0.288"/><rect x="68.9" y="120.2" width="10.0" height="1.9" fill="#6a9955" opacity="0.288"/><rect x="81.6" y="120.2" width="7.7" height="1.9" fill="#ce9178" opacity="0.288"/><rect x="91.4" y="120.2" width="17.8" height="1.9" fill="#6a9955" opacity="0.288"/><rect x="112.7" y="120.2" width="5.0" height="1.9" fill="#6a9955" opacity="0.288"/><rect x="120.2" y="120.2" width="4.6" height="1.9" fill="#d4d4d4" opacity="0.288"/><rect x="127.2" y="120.2" width="7.0" height="1.9" fill="#d4d4d4" opacity="0.288"/><rect x="136.0" y="120.2" width="3.8" height="1.9" fill="#6a9955" opacity="0.288"/><rect x="143.0" y="120.2" width="9.3" height="1.9" fill="#dcdcaa" opacity="0.288"/><rect x="155.6" y="120.2" width="15.2" height="1.9" fill="#9cdcfe" opacity="0.288"/><rect x="173.7" y="120.2" width="5.8" height="1.9" fill="#d4d4d4" opacity="0.288"/><rect x="182.1" y="120.2" width="5.0" height="1.9" fill="#6a9955" opacity="0.288"/><rect x="14.0" y="123.6" width="10.6" height="1.9" fill="#d4d4d4" opacity="0.288"/><rect x="26.5" y="123.6" width="8.3" height="1.9" fill="#d4d4d4" opacity="0.288"/><rect x="36.9" y="123.6" width="12.0" height="1.9" fill="#dcdcaa" opacity="0.288"/><rect x="51.6" y="123.6" width="10.1" height="1.9" fill="#9cdcfe" opacity="0.288"/><rect x="63.2" y="123.6" width="4.6" height="1.9" fill="#d4d4d4" opacity="0.288"/><rect x="71.1" y="123.6" width="13.9" height="1.9" fill="#dcdcaa" opacity="0.288"/><rect x="87.3" y="123.6" width="3.7" height="1.9" fill="#d4d4d4" opacity="0.288"/><rect x="93.6" y="123.6" width="5.9" height="1.9" fill="#9cdcfe" opacity="0.288"/><rect x="101.6" y="123.6" width="8.8" height="1.9" fill="#6a9955" opacity="0.288"/><rect x="113.5" y="123.6" width="7.2" height="1.9" fill="#9cdcfe" opacity="0.288"/><rect x="123.5" y="123.6" width="4.8" height="1.9" fill="#d4d4d4" opacity="0.288"/><rect x="130.6" y="123.6" width="14.9" height="1.9" fill="#6a9955" opacity="0.288"/><rect x="148.1" y="123.6" width="8.5" height="1.9" fill="#d4d4d4" opacity="0.288"/><rect x="158.5" y="123.6" width="10.6" height="1.9" fill="#9cdcfe" opacity="0.288"/><rect x="170.7" y="123.6" width="3.6" height="1.9" fill="#ce9178" opacity="0.288"/><rect x="176.5" y="123.6" width="9.2" height="1.9" fill="#6a9955" opacity="0.288"/><rect x="20.0" y="127.0" width="12.2" height="1.9" fill="#d4d4d4" opacity="0.288"/><rect x="34.5" y="127.0" width="12.2" height="1.9" fill="#dcdcaa" opacity="0.288"/><rect x="48.8" y="127.0" width="8.0" height="1.9" fill="#dcdcaa" opacity="0.288"/><rect x="59.4" y="127.0" width="10.3" height="1.9" fill="#9cdcfe" opacity="0.288"/><rect x="71.8" y="127.0" width="15.2" height="1.9" fill="#6a9955" opacity="0.288"/><rect x="89.2" y="127.0" width="4.6" height="1.9" fill="#6a9955" opacity="0.288"/><rect x="14.0" y="130.4" width="7.0" height="1.9" fill="#ce9178" opacity="0.288"/><rect x="24.0" y="130.4" width="14.6" height="1.9" fill="#9cdcfe" opacity="0.288"/><rect x="40.6" y="130.4" width="3.8" height="1.9" fill="#6a9955" opacity="0.288"/><rect x="46.3" y="130.4" width="12.4" height="1.9" fill="#9cdcfe" opacity="0.288"/><rect x="61.7" y="130.4" width="8.7" height="1.9" fill="#dcdcaa" opacity="0.288"/><rect x="73.3" y="130.4" width="3.5" height="1.9" fill="#ce9178" opacity="0.288"/><rect x="78.5" y="130.4" width="3.3" height="1.9" fill="#6a9955" opacity="0.288"/><rect x="84.1" y="130.4" width="9.2" height="1.9" fill="#d4d4d4" opacity="0.288"/><rect x="95.6" y="130.4" width="14.6" height="1.9" fill="#6a9955" opacity="0.288"/><rect x="113.5" y="130.4" width="14.0" height="1.9" fill="#d4d4d4" opacity="0.288"/><rect x="130.5" y="130.4" width="1.9" height="1.9" fill="#9cdcfe" opacity="0.288"/><rect x="30.0" y="133.8" width="17.4" height="1.9" fill="#6a9955" opacity="0.288"/><rect x="50.7" y="133.8" width="8.1" height="1.9" fill="#6a9955" opacity="0.288"/><rect x="61.7" y="133.8" width="16.0" height="1.9" fill="#ce9178" opacity="0.288"/><rect x="80.5" y="133.8" width="13.4" height="1.9" fill="#9cdcfe" opacity="0.288"/><rect x="96.3" y="133.8" width="17.4" height="1.9" fill="#6a9955" opacity="0.288"/><rect x="20.0" y="137.2" width="13.6" height="1.9" fill="#ce9178" opacity="0.288"/><rect x="36.5" y="137.2" width="7.8" height="1.9" fill="#6a9955" opacity="0.288"/><rect x="46.9" y="137.2" width="17.0" height="1.9" fill="#ce9178" opacity="0.288"/><rect x="65.9" y="137.2" width="4.8" height="1.9" fill="#ce9178" opacity="0.288"/><rect x="73.3" y="137.2" width="16.4" height="1.9" fill="#6a9955" opacity="0.288"/><rect x="92.9" y="137.2" width="17.3" height="1.9" fill="#dcdcaa" opacity="0.288"/><rect x="112.0" y="137.2" width="3.6" height="1.9" fill="#ce9178" opacity="0.288"/><rect x="117.3" y="137.2" width="16.9" height="1.9" fill="#ce9178" opacity="0.288"/><rect x="136.2" y="137.2" width="10.2" height="1.9" fill="#d4d4d4" opacity="0.288"/><rect x="149.5" y="137.2" width="7.1" height="1.9" fill="#9cdcfe" opacity="0.288"/><rect x="159.5" y="137.2" width="5.1" height="1.9" fill="#9cdcfe" opacity="0.288"/><rect x="14.0" y="140.6" width="11.0" height="1.9" fill="#ce9178" opacity="0.288"/><rect x="26.9" y="140.6" width="4.5" height="1.9" fill="#6a9955" opacity="0.288"/><rect x="34.4" y="140.6" width="4.5" height="1.9" fill="#dcdcaa" opacity="0.288"/><rect x="40.7" y="140.6" width="17.5" height="1.9" fill="#d4d4d4" opacity="0.288"/><rect x="60.4" y="140.6" width="17.0" height="1.9" fill="#6a9955" opacity="0.288"/><rect x="79.9" y="140.6" width="6.0" height="1.9" fill="#6a9955" opacity="0.288"/><rect x="88.0" y="140.6" width="12.7" height="1.9" fill="#dcdcaa" opacity="0.288"/><rect x="102.4" y="140.6" width="11.6" height="1.9" fill="#9cdcfe" opacity="0.288"/><rect x="117.0" y="140.6" width="15.8" height="1.9" fill="#d4d4d4" opacity="0.288"/><rect x="136.1" y="140.6" width="5.6" height="1.9" fill="#dcdcaa" opacity="0.288"/><rect x="24.0" y="144.0" width="5.8" height="1.9" fill="#ce9178" opacity="0.288"/><rect x="33.2" y="144.0" width="16.9" height="1.9" fill="#d4d4d4" opacity="0.288"/><rect x="51.6" y="144.0" width="11.5" height="1.9" fill="#d4d4d4" opacity="0.288"/><rect x="66.5" y="144.0" width="8.0" height="1.9" fill="#6a9955" opacity="0.288"/><rect x="78.0" y="144.0" width="11.1" height="1.9" fill="#6a9955" opacity="0.288"/><rect x="92.4" y="144.0" width="5.0" height="1.9" fill="#9cdcfe" opacity="0.288"/><rect x="99.9" y="144.0" width="5.9" height="1.9" fill="#d4d4d4" opacity="0.288"/><rect x="107.9" y="144.0" width="14.0" height="1.9" fill="#ce9178" opacity="0.288"/><rect x="123.9" y="144.0" width="5.8" height="1.9" fill="#ce9178" opacity="0.288"/><rect x="131.9" y="144.0" width="7.4" height="1.9" fill="#ce9178" opacity="0.288"/><rect x="142.3" y="144.0" width="5.6" height="1.9" fill="#dcdcaa" opacity="0.288"/><rect x="150.7" y="144.0" width="9.1" height="1.9" fill="#6a9955" opacity="0.288"/><rect x="162.4" y="144.0" width="4.3" height="1.9" fill="#ce9178" opacity="0.288"/><rect x="168.3" y="144.0" width="3.2" height="1.9" fill="#6a9955" opacity="0.288"/><rect x="20.0" y="147.4" width="9.7" height="1.9" fill="#6a9955" opacity="0.288"/><rect x="33.1" y="147.4" width="7.5" height="1.9" fill="#ce9178" opacity="0.288"/><rect x="43.3" y="147.4" width="6.9" height="1.9" fill="#6a9955" opacity="0.288"/><rect x="53.1" y="147.4" width="3.9" height="1.9" fill="#d4d4d4" opacity="0.288"/><rect x="59.5" y="147.4" width="5.4" height="1.9" fill="#ce9178" opacity="0.288"/><rect x="67.4" y="147.4" width="16.4" height="1.9" fill="#ce9178" opacity="0.288"/><rect x="86.8" y="147.4" width="13.4" height="1.9" fill="#ce9178" opacity="0.288"/><rect x="103.5" y="147.4" width="2.2" height="1.9" fill="#9cdcfe" opacity="0.288"/><rect x="24.0" y="150.8" width="14.2" height="1.9" fill="#9cdcfe" opacity="0.288"/><rect x="40.5" y="150.8" width="13.5" height="1.9" fill="#6a9955" opacity="0.288"/><rect x="57.0" y="150.8" width="15.0" height="1.9" fill="#dcdcaa" opacity="0.288"/><rect x="14.0" y="154.2" width="10.9" height="1.9" fill="#6a9955" opacity="0.288"/><rect x="26.6" y="154.2" width="11.5" height="1.9" fill="#d4d4d4" opacity="0.288"/><rect x="41.2" y="154.2" width="16.5" height="1.9" fill="#d4d4d4" opacity="0.288"/><rect x="60.4" y="154.2" width="5.2" height="1.9" fill="#6a9955" opacity="0.288"/><rect x="68.8" y="154.2" width="9.6" height="1.9" fill="#ce9178" opacity="0.288"/><rect x="80.4" y="154.2" width="11.7" height="1.9" fill="#d4d4d4" opacity="0.288"/><rect x="95.4" y="154.2" width="9.7" height="1.9" fill="#d4d4d4" opacity="0.288"/><rect x="107.5" y="154.2" width="10.7" height="1.9" fill="#6a9955" opacity="0.288"/><rect x="14.0" y="157.6" width="15.2" height="1.9" fill="#ce9178" opacity="0.288"/><rect x="31.2" y="157.6" width="4.1" height="1.9" fill="#6a9955" opacity="0.288"/><rect x="37.5" y="157.6" width="4.0" height="1.9" fill="#d4d4d4" opacity="0.288"/><rect x="44.8" y="157.6" width="4.0" height="1.9" fill="#6a9955" opacity="0.288"/><rect x="50.4" y="157.6" width="9.1" height="1.9" fill="#dcdcaa" opacity="0.288"/><rect x="61.3" y="157.6" width="12.6" height="1.9" fill="#ce9178" opacity="0.288"/><rect x="76.7" y="157.6" width="9.3" height="1.9" fill="#6a9955" opacity="0.288"/><rect x="88.4" y="157.6" width="13.2" height="1.9" fill="#6a9955" opacity="0.288"/><rect x="30.0" y="161.0" width="15.9" height="1.9" fill="#d4d4d4" opacity="0.288"/><rect x="47.8" y="161.0" width="11.1" height="1.9" fill="#9cdcfe" opacity="0.288"/><rect x="60.6" y="161.0" width="16.8" height="1.9" fill="#dcdcaa" opacity="0.288"/><rect x="30.0" y="167.8" width="8.7" height="1.9" fill="#d4d4d4" opacity="0.288"/><rect x="40.7" y="167.8" width="8.2" height="1.9" fill="#6a9955" opacity="0.288"/><rect x="50.8" y="167.8" width="16.1" height="1.9" fill="#dcdcaa" opacity="0.288"/><rect x="68.6" y="167.8" width="15.1" height="1.9" fill="#6a9955" opacity="0.288"/><rect x="86.5" y="167.8" width="17.0" height="1.9" fill="#d4d4d4" opacity="0.288"/><rect x="105.5" y="167.8" width="4.0" height="1.9" fill="#9cdcfe" opacity="0.288"/><rect x="111.1" y="167.8" width="10.8" height="1.9" fill="#ce9178" opacity="0.288"/><rect x="14.0" y="171.2" width="6.5" height="1.9" fill="#d4d4d4" opacity="0.288"/><rect x="23.5" y="171.2" width="14.6" height="1.9" fill="#d4d4d4" opacity="0.288"/><rect x="40.7" y="171.2" width="7.3" height="1.9" fill="#dcdcaa" opacity="0.288"/><rect x="51.3" y="171.2" width="11.6" height="1.9" fill="#9cdcfe" opacity="0.288"/><rect x="65.7" y="171.2" width="13.1" height="1.9" fill="#6a9955" opacity="0.288"/><rect x="80.7" y="171.2" width="16.1" height="1.9" fill="#ce9178" opacity="0.288"/><rect x="99.4" y="171.2" width="3.1" height="1.9" fill="#6a9955" opacity="0.288"/><rect x="0.0" y="175.0" width="318.0" height="4.0" fill="#121212"/></g></svg>
<svg style="left:618px;top:442.2px;overflow:hidden" width="318" height="179" viewBox="0 0 318 179"><g filter="url(#bl)"><rect x="0.0" y="0.0" width="318.0" height="179.0" fill="#131313"/><rect x="0.0" y="0.0" width="318.0" height="6.0" fill="#171717"/><rect x="10.0" y="2.5" width="7.8" height="1.5" fill="#bbbbbb" opacity="0.324"/><rect x="20.8" y="2.5" width="7.5" height="1.5" fill="#bbbbbb" opacity="0.324"/><rect x="31.3" y="2.5" width="7.6" height="1.5" fill="#bbbbbb" opacity="0.324"/><rect x="42.0" y="2.5" width="6.5" height="1.5" fill="#bbbbbb" opacity="0.324"/><rect x="51.5" y="2.5" width="5.7" height="1.5" fill="#bbbbbb" opacity="0.324"/><rect x="60.2" y="2.5" width="6.0" height="1.5" fill="#bbbbbb" opacity="0.324"/><rect x="69.2" y="2.5" width="0.8" height="1.5" fill="#bbbbbb" opacity="0.324"/><rect x="143.1" y="1.5" width="70.0" height="3.0" fill="#2c2c2c"/><rect x="0.0" y="6.0" width="10.0" height="173.0" fill="#171717"/><rect x="3.2" y="11.0" width="4.6" height="4.6" fill="#8a8a8a" opacity="0.25" rx="1"/><rect x="3.2" y="20.0" width="4.6" height="4.6" fill="#8a8a8a" opacity="0.25" rx="1"/><rect x="3.2" y="29.0" width="4.6" height="4.6" fill="#8a8a8a" opacity="0.25" rx="1"/><rect x="3.2" y="38.0" width="4.6" height="4.6" fill="#8a8a8a" opacity="0.25" rx="1"/><rect x="3.2" y="47.0" width="4.6" height="4.6" fill="#8a8a8a" opacity="0.25" rx="1"/><rect x="3.2" y="56.0" width="4.6" height="4.6" fill="#8a8a8a" opacity="0.25" rx="1"/><rect x="12.0" y="9.5" width="13.4" height="1.5" fill="#c05050" opacity="0.432"/><rect x="27.4" y="9.5" width="10.4" height="1.5" fill="#c05050" opacity="0.432"/><rect x="39.7" y="9.5" width="11.6" height="1.5" fill="#c05050" opacity="0.432"/><rect x="53.4" y="9.5" width="6.5" height="1.5" fill="#c05050" opacity="0.432"/><rect x="12.0" y="14.0" width="4.6" height="1.3" fill="#aaaaaa" opacity="0.216"/><rect x="18.6" y="14.0" width="7.1" height="1.3" fill="#aaaaaa" opacity="0.216"/><rect x="27.8" y="14.0" width="11.3" height="1.3" fill="#aaaaaa" opacity="0.216"/><rect x="41.1" y="14.0" width="8.2" height="1.3" fill="#aaaaaa" opacity="0.216"/><rect x="51.3" y="14.0" width="12.3" height="1.3" fill="#aaaaaa" opacity="0.216"/><rect x="65.6" y="14.0" width="6.3" height="1.3" fill="#aaaaaa" opacity="0.216"/><rect x="73.9" y="14.0" width="10.8" height="1.3" fill="#aaaaaa" opacity="0.216"/><rect x="86.7" y="14.0" width="11.9" height="1.3" fill="#aaaaaa" opacity="0.216"/><rect x="100.6" y="14.0" width="13.1" height="1.3" fill="#aaaaaa" opacity="0.216"/><rect x="115.6" y="14.0" width="9.2" height="1.3" fill="#aaaaaa" opacity="0.216"/><rect x="126.8" y="14.0" width="13.6" height="1.3" fill="#aaaaaa" opacity="0.216"/><rect x="142.5" y="14.0" width="9.1" height="1.3" fill="#aaaaaa" opacity="0.216"/><rect x="153.6" y="14.0" width="4.5" height="1.3" fill="#aaaaaa" opacity="0.216"/><rect x="160.1" y="14.0" width="5.7" height="1.3" fill="#aaaaaa" opacity="0.216"/><rect x="167.8" y="14.0" width="5.2" height="1.3" fill="#aaaaaa" opacity="0.216"/><rect x="175.0" y="14.0" width="10.1" height="1.3" fill="#aaaaaa" opacity="0.216"/><rect x="187.1" y="14.0" width="13.1" height="1.3" fill="#aaaaaa" opacity="0.216"/><rect x="202.3" y="14.0" width="12.3" height="1.3" fill="#aaaaaa" opacity="0.216"/><rect x="216.6" y="14.0" width="4.0" height="1.3" fill="#aaaaaa" opacity="0.216"/><rect x="222.6" y="14.0" width="11.0" height="1.3" fill="#aaaaaa" opacity="0.216"/><rect x="235.6" y="14.0" width="5.1" height="1.3" fill="#aaaaaa" opacity="0.216"/><rect x="242.7" y="14.0" width="6.0" height="1.3" fill="#aaaaaa" opacity="0.216"/><rect x="250.6" y="14.0" width="10.4" height="1.3" fill="#aaaaaa" opacity="0.216"/><rect x="263.0" y="14.0" width="9.0" height="1.3" fill="#aaaaaa" opacity="0.216"/><rect x="12.0" y="18.2" width="12.6" height="1.3" fill="#aaaaaa" opacity="0.216"/><rect x="27.6" y="18.2" width="5.1" height="1.3" fill="#aaaaaa" opacity="0.216"/><rect x="35.7" y="18.2" width="11.4" height="1.3" fill="#aaaaaa" opacity="0.216"/><rect x="50.1" y="18.2" width="11.0" height="1.3" fill="#aaaaaa" opacity="0.216"/><rect x="64.0" y="18.2" width="9.1" height="1.3" fill="#aaaaaa" opacity="0.216"/><rect x="76.2" y="18.2" width="8.3" height="1.3" fill="#aaaaaa" opacity="0.216"/><rect x="87.4" y="18.2" width="12.6" height="1.3" fill="#aaaaaa" opacity="0.216"/><rect x="103.0" y="18.2" width="6.7" height="1.3" fill="#aaaaaa" opacity="0.216"/><rect x="112.7" y="18.2" width="13.5" height="1.3" fill="#aaaaaa" opacity="0.216"/><rect x="129.2" y="18.2" width="3.2" height="1.3" fill="#aaaaaa" opacity="0.216"/><rect x="135.4" y="18.2" width="13.3" height="1.3" fill="#aaaaaa" opacity="0.216"/><rect x="151.7" y="18.2" width="10.3" height="1.3" fill="#aaaaaa" opacity="0.216"/><rect x="10.5" y="24.0" width="1.2" height="150.0" fill="#2a6fb0" opacity="0.5"/><rect x="12.0" y="23.0" width="306.0" height="0.6" fill="#3a3a3a"/><rect x="25.0" y="29.3" width="13.4" height="2.0" fill="#6a9955" opacity="0.302"/><rect x="40.3" y="29.3" width="16.7" height="2.0" fill="#d4d4d4" opacity="0.302"/><rect x="59.2" y="29.3" width="7.2" height="2.0" fill="#569cd6" opacity="0.302"/><rect x="69.0" y="29.3" width="8.4" height="2.0" fill="#6a9955" opacity="0.302"/><rect x="79.6" y="29.3" width="16.2" height="2.0" fill="#569cd6" opacity="0.302"/><rect x="97.6" y="29.3" width="17.7" height="2.0" fill="#569cd6" opacity="0.302"/><rect x="118.3" y="29.3" width="7.8" height="2.0" fill="#c586c0" opacity="0.302"/><rect x="30.0" y="32.6" width="14.1" height="2.0" fill="#9cdcfe" opacity="0.302"/><rect x="46.1" y="32.6" width="17.0" height="2.0" fill="#d4d4d4" opacity="0.302"/><rect x="66.1" y="32.6" width="7.4" height="2.0" fill="#c586c0" opacity="0.302"/><rect x="75.7" y="32.6" width="8.7" height="2.0" fill="#c586c0" opacity="0.302"/><rect x="86.9" y="32.6" width="12.8" height="2.0" fill="#d4d4d4" opacity="0.302"/><rect x="101.9" y="32.6" width="14.5" height="2.0" fill="#569cd6" opacity="0.302"/><rect x="119.8" y="32.6" width="7.5" height="2.0" fill="#569cd6" opacity="0.302"/><rect x="20.0" y="35.9" width="13.8" height="2.0" fill="#569cd6" opacity="0.302"/><rect x="35.7" y="35.9" width="16.3" height="2.0" fill="#d4d4d4" opacity="0.302"/><rect x="20.0" y="39.2" width="13.0" height="2.0" fill="#9cdcfe" opacity="0.302"/><rect x="35.3" y="39.2" width="15.6" height="2.0" fill="#c586c0" opacity="0.302"/><rect x="52.6" y="39.2" width="5.3" height="2.0" fill="#c586c0" opacity="0.302"/><rect x="60.4" y="39.2" width="8.6" height="2.0" fill="#d4d4d4" opacity="0.302"/><rect x="71.8" y="39.2" width="17.0" height="2.0" fill="#569cd6" opacity="0.302"/><rect x="91.6" y="39.2" width="3.2" height="2.0" fill="#d4d4d4" opacity="0.302"/><rect x="97.4" y="39.2" width="3.2" height="2.0" fill="#d4d4d4" opacity="0.302"/><rect x="103.6" y="39.2" width="11.0" height="2.0" fill="#6a9955" opacity="0.302"/><rect x="116.1" y="39.2" width="8.7" height="2.0" fill="#d4d4d4" opacity="0.302"/><rect x="20.0" y="42.5" width="4.4" height="2.0" fill="#ce9178" opacity="0.302"/><rect x="26.4" y="42.5" width="12.3" height="2.0" fill="#6a9955" opacity="0.302"/><rect x="41.9" y="42.5" width="4.7" height="2.0" fill="#d4d4d4" opacity="0.302"/><rect x="25.0" y="45.8" width="17.9" height="2.0" fill="#c586c0" opacity="0.302"/><rect x="45.0" y="45.8" width="15.4" height="2.0" fill="#d4d4d4" opacity="0.302"/><rect x="63.2" y="45.8" width="15.9" height="2.0" fill="#9cdcfe" opacity="0.302"/><rect x="80.7" y="45.8" width="8.7" height="2.0" fill="#d4d4d4" opacity="0.302"/><rect x="91.9" y="45.8" width="2.4" height="2.0" fill="#6a9955" opacity="0.302"/><rect x="25.0" y="49.1" width="8.0" height="2.0" fill="#d4d4d4" opacity="0.302"/><rect x="36.3" y="49.1" width="16.8" height="2.0" fill="#c586c0" opacity="0.302"/><rect x="55.0" y="49.1" width="16.0" height="2.0" fill="#d4d4d4" opacity="0.302"/><rect x="73.4" y="49.1" width="3.7" height="2.0" fill="#d4d4d4" opacity="0.302"/><rect x="80.0" y="49.1" width="7.2" height="2.0" fill="#d4d4d4" opacity="0.302"/><rect x="89.8" y="49.1" width="3.5" height="2.0" fill="#dcdcaa" opacity="0.302"/><rect x="94.9" y="49.1" width="6.1" height="2.0" fill="#ce9178" opacity="0.302"/><rect x="25.0" y="52.4" width="7.5" height="2.0" fill="#d4d4d4" opacity="0.302"/><rect x="34.5" y="52.4" width="15.5" height="2.0" fill="#d4d4d4" opacity="0.302"/><rect x="52.8" y="52.4" width="11.1" height="2.0" fill="#d4d4d4" opacity="0.302"/><rect x="67.0" y="52.4" width="5.1" height="2.0" fill="#6a9955" opacity="0.302"/><rect x="75.0" y="52.4" width="10.5" height="2.0" fill="#dcdcaa" opacity="0.302"/><rect x="87.1" y="52.4" width="9.6" height="2.0" fill="#d4d4d4" opacity="0.302"/><rect x="98.9" y="52.4" width="14.5" height="2.0" fill="#d4d4d4" opacity="0.302"/><rect x="115.7" y="52.4" width="12.7" height="2.0" fill="#9cdcfe" opacity="0.302"/><rect x="25.0" y="55.7" width="8.3" height="2.0" fill="#d4d4d4" opacity="0.302"/><rect x="35.7" y="55.7" width="13.2" height="2.0" fill="#d4d4d4" opacity="0.302"/><rect x="51.2" y="55.7" width="14.6" height="2.0" fill="#6a9955" opacity="0.302"/><rect x="68.8" y="55.7" width="13.7" height="2.0" fill="#d4d4d4" opacity="0.302"/><rect x="84.6" y="55.7" width="2.8" height="2.0" fill="#d4d4d4" opacity="0.302"/><rect x="20.0" y="59.0" width="3.1" height="2.0" fill="#6a9955" opacity="0.302"/><rect x="25.5" y="59.0" width="14.4" height="2.0" fill="#d4d4d4" opacity="0.302"/><rect x="41.7" y="59.0" width="4.8" height="2.0" fill="#569cd6" opacity="0.302"/><rect x="20.0" y="62.3" width="8.3" height="2.0" fill="#d4d4d4" opacity="0.302"/><rect x="31.0" y="62.3" width="8.0" height="2.0" fill="#d4d4d4" opacity="0.302"/><rect x="20.0" y="65.6" width="11.4" height="2.0" fill="#c586c0" opacity="0.302"/><rect x="34.0" y="65.6" width="5.5" height="2.0" fill="#d4d4d4" opacity="0.302"/><rect x="41.4" y="65.6" width="7.0" height="2.0" fill="#6a9955" opacity="0.302"/><rect x="50.9" y="65.6" width="3.9" height="2.0" fill="#d4d4d4" opacity="0.302"/><rect x="56.9" y="65.6" width="7.5" height="2.0" fill="#d4d4d4" opacity="0.302"/><rect x="66.7" y="65.6" width="17.2" height="2.0" fill="#6a9955" opacity="0.302"/><rect x="86.6" y="65.6" width="11.9" height="2.0" fill="#c586c0" opacity="0.302"/><rect x="100.9" y="65.6" width="3.4" height="2.0" fill="#9cdcfe" opacity="0.302"/><rect x="20.0" y="72.2" width="9.5" height="2.0" fill="#d4d4d4" opacity="0.302"/><rect x="32.9" y="72.2" width="5.0" height="2.0" fill="#dcdcaa" opacity="0.302"/><rect x="40.7" y="72.2" width="13.4" height="2.0" fill="#569cd6" opacity="0.302"/><rect x="56.2" y="72.2" width="17.5" height="2.0" fill="#dcdcaa" opacity="0.302"/><rect x="75.8" y="72.2" width="1.9" height="2.0" fill="#569cd6" opacity="0.302"/><rect x="20.0" y="75.5" width="15.2" height="2.0" fill="#d4d4d4" opacity="0.302"/><rect x="37.5" y="75.5" width="17.0" height="2.0" fill="#c586c0" opacity="0.302"/><rect x="57.1" y="75.5" width="11.2" height="2.0" fill="#d4d4d4" opacity="0.302"/><rect x="20.0" y="78.8" width="7.4" height="2.0" fill="#6a9955" opacity="0.302"/><rect x="29.0" y="78.8" width="15.7" height="2.0" fill="#d4d4d4" opacity="0.302"/><rect x="47.6" y="78.8" width="5.1" height="2.0" fill="#6a9955" opacity="0.302"/><rect x="54.6" y="78.8" width="12.9" height="2.0" fill="#6a9955" opacity="0.302"/><rect x="69.9" y="78.8" width="7.6" height="2.0" fill="#569cd6" opacity="0.302"/><rect x="25.0" y="82.1" width="16.9" height="2.0" fill="#6a9955" opacity="0.302"/><rect x="44.2" y="82.1" width="3.6" height="2.0" fill="#dcdcaa" opacity="0.302"/><rect x="50.6" y="82.1" width="15.2" height="2.0" fill="#d4d4d4" opacity="0.302"/><rect x="68.6" y="82.1" width="4.3" height="2.0" fill="#c586c0" opacity="0.302"/><rect x="75.7" y="82.1" width="8.3" height="2.0" fill="#d4d4d4" opacity="0.302"/><rect x="86.7" y="82.1" width="4.7" height="2.0" fill="#d4d4d4" opacity="0.302"/><rect x="20.0" y="85.4" width="9.5" height="2.0" fill="#9cdcfe" opacity="0.302"/><rect x="31.2" y="85.4" width="6.3" height="2.0" fill="#6a9955" opacity="0.302"/><rect x="40.0" y="85.4" width="11.7" height="2.0" fill="#d4d4d4" opacity="0.302"/><rect x="53.7" y="85.4" width="8.6" height="2.0" fill="#569cd6" opacity="0.302"/><rect x="65.3" y="85.4" width="11.8" height="2.0" fill="#d4d4d4" opacity="0.302"/><rect x="79.0" y="85.4" width="18.0" height="2.0" fill="#569cd6" opacity="0.302"/><rect x="98.6" y="85.4" width="9.2" height="2.0" fill="#d4d4d4" opacity="0.302"/><rect x="109.6" y="85.4" width="17.1" height="2.0" fill="#ce9178" opacity="0.302"/><rect x="30.0" y="92.0" width="10.1" height="2.0" fill="#569cd6" opacity="0.302"/><rect x="43.1" y="92.0" width="9.8" height="2.0" fill="#d4d4d4" opacity="0.302"/><rect x="55.0" y="92.0" width="15.2" height="2.0" fill="#d4d4d4" opacity="0.302"/><rect x="71.7" y="92.0" width="8.1" height="2.0" fill="#d4d4d4" opacity="0.302"/><rect x="82.7" y="92.0" width="5.5" height="2.0" fill="#6a9955" opacity="0.302"/><rect x="90.1" y="92.0" width="1.5" height="2.0" fill="#ce9178" opacity="0.302"/><rect x="25.0" y="95.3" width="9.1" height="2.0" fill="#ce9178" opacity="0.302"/><rect x="35.9" y="95.3" width="12.9" height="2.0" fill="#d4d4d4" opacity="0.302"/><rect x="50.4" y="95.3" width="12.2" height="2.0" fill="#c586c0" opacity="0.302"/><rect x="20.0" y="98.6" width="6.1" height="2.0" fill="#6a9955" opacity="0.302"/><rect x="29.2" y="98.6" width="3.9" height="2.0" fill="#d4d4d4" opacity="0.302"/><rect x="36.2" y="98.6" width="11.1" height="2.0" fill="#dcdcaa" opacity="0.302"/><rect x="49.4" y="98.6" width="9.9" height="2.0" fill="#6a9955" opacity="0.302"/><rect x="62.2" y="98.6" width="10.3" height="2.0" fill="#d4d4d4" opacity="0.302"/><rect x="74.6" y="98.6" width="8.8" height="2.0" fill="#d4d4d4" opacity="0.302"/><rect x="86.1" y="98.6" width="8.2" height="2.0" fill="#569cd6" opacity="0.302"/><rect x="97.1" y="98.6" width="5.3" height="2.0" fill="#6a9955" opacity="0.302"/><rect x="30.0" y="101.9" width="5.0" height="2.0" fill="#d4d4d4" opacity="0.302"/><rect x="37.0" y="101.9" width="4.8" height="2.0" fill="#dcdcaa" opacity="0.302"/><rect x="44.6" y="101.9" width="9.8" height="2.0" fill="#d4d4d4" opacity="0.302"/><rect x="25.0" y="105.2" width="12.5" height="2.0" fill="#6a9955" opacity="0.302"/><rect x="40.9" y="105.2" width="17.0" height="2.0" fill="#ce9178" opacity="0.302"/><rect x="20.0" y="108.5" width="15.6" height="2.0" fill="#d4d4d4" opacity="0.302"/><rect x="37.2" y="108.5" width="8.4" height="2.0" fill="#9cdcfe" opacity="0.302"/><rect x="48.1" y="108.5" width="5.9" height="2.0" fill="#d4d4d4" opacity="0.302"/><rect x="25.0" y="111.8" width="10.4" height="2.0" fill="#6a9955" opacity="0.302"/><rect x="38.6" y="111.8" width="10.3" height="2.0" fill="#d4d4d4" opacity="0.302"/><rect x="51.5" y="111.8" width="14.9" height="2.0" fill="#c586c0" opacity="0.302"/><rect x="68.5" y="111.8" width="7.1" height="2.0" fill="#d4d4d4" opacity="0.302"/><rect x="77.7" y="111.8" width="2.0" height="2.0" fill="#d4d4d4" opacity="0.302"/><rect x="30.0" y="115.1" width="11.6" height="2.0" fill="#6a9955" opacity="0.302"/><rect x="44.6" y="115.1" width="15.3" height="2.0" fill="#dcdcaa" opacity="0.302"/><rect x="62.6" y="115.1" width="14.4" height="2.0" fill="#6a9955" opacity="0.302"/><rect x="79.3" y="115.1" width="6.3" height="2.0" fill="#d4d4d4" opacity="0.302"/><rect x="87.3" y="115.1" width="7.0" height="2.0" fill="#c586c0" opacity="0.302"/><rect x="25.0" y="118.4" width="15.9" height="2.0" fill="#d4d4d4" opacity="0.302"/><rect x="43.3" y="118.4" width="17.9" height="2.0" fill="#c586c0" opacity="0.302"/><rect x="63.1" y="118.4" width="2.9" height="2.0" fill="#6a9955" opacity="0.302"/><rect x="35.0" y="121.7" width="12.2" height="2.0" fill="#c586c0" opacity="0.302"/><rect x="50.4" y="121.7" width="15.1" height="2.0" fill="#d4d4d4" opacity="0.302"/><rect x="67.7" y="121.7" width="7.2" height="2.0" fill="#d4d4d4" opacity="0.302"/><rect x="76.7" y="121.7" width="14.8" height="2.0" fill="#6a9955" opacity="0.302"/><rect x="35.0" y="128.3" width="5.0" height="2.0" fill="#d4d4d4" opacity="0.302"/><rect x="43.4" y="128.3" width="17.9" height="2.0" fill="#d4d4d4" opacity="0.302"/><rect x="63.0" y="128.3" width="16.0" height="2.0" fill="#c586c0" opacity="0.302"/><rect x="80.8" y="128.3" width="7.8" height="2.0" fill="#c586c0" opacity="0.302"/><rect x="91.7" y="128.3" width="13.1" height="2.0" fill="#569cd6" opacity="0.302"/><rect x="106.6" y="128.3" width="12.5" height="2.0" fill="#d4d4d4" opacity="0.302"/><rect x="121.4" y="128.3" width="6.3" height="2.0" fill="#d4d4d4" opacity="0.302"/><rect x="25.0" y="131.6" width="7.2" height="2.0" fill="#dcdcaa" opacity="0.302"/><rect x="34.6" y="131.6" width="10.3" height="2.0" fill="#d4d4d4" opacity="0.302"/><rect x="46.4" y="131.6" width="14.6" height="2.0" fill="#6a9955" opacity="0.302"/><rect x="62.7" y="131.6" width="17.6" height="2.0" fill="#d4d4d4" opacity="0.302"/><rect x="83.1" y="131.6" width="6.6" height="2.0" fill="#d4d4d4" opacity="0.302"/><rect x="25.0" y="134.9" width="10.4" height="2.0" fill="#dcdcaa" opacity="0.302"/><rect x="38.6" y="134.9" width="8.1" height="2.0" fill="#d4d4d4" opacity="0.302"/><rect x="48.4" y="134.9" width="15.8" height="2.0" fill="#dcdcaa" opacity="0.302"/><rect x="67.5" y="134.9" width="14.4" height="2.0" fill="#9cdcfe" opacity="0.302"/><rect x="83.6" y="134.9" width="14.8" height="2.0" fill="#569cd6" opacity="0.302"/><rect x="99.9" y="134.9" width="16.9" height="2.0" fill="#ce9178" opacity="0.302"/><rect x="20.0" y="141.5" width="16.6" height="2.0" fill="#d4d4d4" opacity="0.302"/><rect x="38.7" y="141.5" width="16.1" height="2.0" fill="#6a9955" opacity="0.302"/><rect x="56.5" y="141.5" width="8.4" height="2.0" fill="#d4d4d4" opacity="0.302"/><rect x="67.2" y="141.5" width="16.6" height="2.0" fill="#ce9178" opacity="0.302"/><rect x="85.4" y="141.5" width="12.4" height="2.0" fill="#6a9955" opacity="0.302"/><rect x="100.6" y="141.5" width="6.5" height="2.0" fill="#d4d4d4" opacity="0.302"/><rect x="108.8" y="141.5" width="4.4" height="2.0" fill="#c586c0" opacity="0.302"/><rect x="115.7" y="141.5" width="5.0" height="2.0" fill="#c586c0" opacity="0.302"/><rect x="123.2" y="141.5" width="6.4" height="2.0" fill="#9cdcfe" opacity="0.302"/><rect x="25.0" y="144.8" width="10.2" height="2.0" fill="#c586c0" opacity="0.302"/><rect x="37.4" y="144.8" width="14.0" height="2.0" fill="#d4d4d4" opacity="0.302"/><rect x="53.1" y="144.8" width="8.5" height="2.0" fill="#6a9955" opacity="0.302"/><rect x="63.4" y="144.8" width="14.6" height="2.0" fill="#ce9178" opacity="0.302"/><rect x="80.8" y="144.8" width="13.2" height="2.0" fill="#d4d4d4" opacity="0.302"/><rect x="96.5" y="144.8" width="3.1" height="2.0" fill="#d4d4d4" opacity="0.302"/><rect x="101.4" y="144.8" width="4.9" height="2.0" fill="#c586c0" opacity="0.302"/><rect x="35.0" y="151.4" width="6.3" height="2.0" fill="#d4d4d4" opacity="0.302"/><rect x="43.0" y="151.4" width="4.8" height="2.0" fill="#6a9955" opacity="0.302"/><rect x="50.2" y="151.4" width="17.4" height="2.0" fill="#dcdcaa" opacity="0.302"/><rect x="70.7" y="151.4" width="6.7" height="2.0" fill="#d4d4d4" opacity="0.302"/><rect x="79.1" y="151.4" width="11.3" height="2.0" fill="#d4d4d4" opacity="0.302"/><rect x="20.0" y="158.0" width="12.9" height="2.0" fill="#6a9955" opacity="0.302"/><rect x="34.8" y="158.0" width="12.1" height="2.0" fill="#c586c0" opacity="0.302"/><rect x="49.9" y="158.0" width="7.4" height="2.0" fill="#9cdcfe" opacity="0.302"/><rect x="60.4" y="158.0" width="14.9" height="2.0" fill="#c586c0" opacity="0.302"/><rect x="77.8" y="158.0" width="4.7" height="2.0" fill="#569cd6" opacity="0.302"/><rect x="85.3" y="158.0" width="4.1" height="2.0" fill="#9cdcfe" opacity="0.302"/><rect x="92.8" y="158.0" width="17.0" height="2.0" fill="#ce9178" opacity="0.302"/><rect x="112.1" y="158.0" width="3.7" height="2.0" fill="#d4d4d4" opacity="0.302"/><rect x="25.0" y="161.3" width="14.6" height="2.0" fill="#9cdcfe" opacity="0.302"/><rect x="42.2" y="161.3" width="3.2" height="2.0" fill="#c586c0" opacity="0.302"/><rect x="47.0" y="161.3" width="3.9" height="2.0" fill="#d4d4d4" opacity="0.302"/><rect x="53.4" y="161.3" width="12.4" height="2.0" fill="#d4d4d4" opacity="0.302"/><rect x="68.9" y="161.3" width="9.4" height="2.0" fill="#d4d4d4" opacity="0.302"/><rect x="79.9" y="161.3" width="11.0" height="2.0" fill="#d4d4d4" opacity="0.302"/><rect x="92.8" y="161.3" width="4.3" height="2.0" fill="#d4d4d4" opacity="0.302"/><rect x="99.5" y="161.3" width="6.0" height="2.0" fill="#ce9178" opacity="0.302"/><rect x="108.2" y="161.3" width="8.9" height="2.0" fill="#d4d4d4" opacity="0.302"/><rect x="120.1" y="161.3" width="10.7" height="2.0" fill="#d4d4d4" opacity="0.302"/><rect x="35.0" y="164.6" width="6.6" height="2.0" fill="#c586c0" opacity="0.302"/><rect x="43.3" y="164.6" width="9.5" height="2.0" fill="#569cd6" opacity="0.302"/><rect x="55.5" y="164.6" width="3.8" height="2.0" fill="#d4d4d4" opacity="0.302"/><rect x="62.3" y="164.6" width="14.1" height="2.0" fill="#d4d4d4" opacity="0.302"/><rect x="77.9" y="164.6" width="5.1" height="2.0" fill="#9cdcfe" opacity="0.302"/><rect x="84.8" y="164.6" width="17.3" height="2.0" fill="#d4d4d4" opacity="0.302"/><rect x="104.7" y="164.6" width="15.3" height="2.0" fill="#6a9955" opacity="0.302"/><rect x="121.8" y="164.6" width="4.9" height="2.0" fill="#6a9955" opacity="0.302"/><rect x="129.7" y="164.6" width="4.8" height="2.0" fill="#9cdcfe" opacity="0.302"/><rect x="136.6" y="164.6" width="4.0" height="2.0" fill="#d4d4d4" opacity="0.302"/><rect x="30.0" y="167.9" width="10.4" height="2.0" fill="#d4d4d4" opacity="0.302"/><rect x="42.7" y="167.9" width="10.5" height="2.0" fill="#d4d4d4" opacity="0.302"/><rect x="55.0" y="167.9" width="5.4" height="2.0" fill="#d4d4d4" opacity="0.302"/><rect x="63.6" y="167.9" width="13.1" height="2.0" fill="#d4d4d4" opacity="0.302"/><rect x="78.7" y="167.9" width="10.6" height="2.0" fill="#9cdcfe" opacity="0.302"/><rect x="92.6" y="167.9" width="3.2" height="2.0" fill="#9cdcfe" opacity="0.302"/><rect x="98.2" y="167.9" width="7.0" height="2.0" fill="#ce9178" opacity="0.302"/><rect x="20.0" y="171.2" width="16.7" height="2.0" fill="#6a9955" opacity="0.302"/><rect x="39.5" y="171.2" width="6.4" height="2.0" fill="#c586c0" opacity="0.302"/><rect x="48.2" y="171.2" width="13.8" height="2.0" fill="#6a9955" opacity="0.302"/><rect x="65.2" y="171.2" width="11.6" height="2.0" fill="#d4d4d4" opacity="0.302"/><rect x="79.3" y="171.2" width="8.9" height="2.0" fill="#ce9178" opacity="0.302"/><rect x="0.0" y="175.0" width="318.0" height="4.0" fill="#181818"/><rect x="0.0" y="175.0" width="5.0" height="4.0" fill="#2a7acc"/></g></svg>
<svg style="left:954px;top:442.2px;overflow:hidden" width="318" height="179" viewBox="0 0 318 179"><g filter="url(#bl)"><rect x="0.0" y="0.0" width="318.0" height="179.0" fill="#363636"/><defs><linearGradient id="t7r" x1="0" y1="0" x2="1" y2="0"><stop offset="0" stop-color="#b0142e"/><stop offset="1" stop-color="#8a0c22"/></linearGradient></defs><rect x="0.0" y="0.0" width="318.0" height="7.0" fill="url(#t7r)"/><rect x="8.0" y="2.5" width="8.7" height="1.8" fill="#f0c0c8" opacity="0.432"/><rect x="18.0" y="2.5" width="3.5" height="1.8" fill="#f0c0c8" opacity="0.432"/><rect x="22.8" y="2.5" width="7.4" height="1.8" fill="#f0c0c8" opacity="0.432"/><rect x="31.5" y="2.5" width="1.5" height="1.8" fill="#f0c0c8" opacity="0.432"/><rect x="49.0" y="1.5" width="3.0" height="3.0" fill="#f4c8d0" opacity="0.8"/><rect x="54.0" y="2.5" width="12.5" height="1.8" fill="#f0c0c8" opacity="0.36"/><rect x="67.8" y="2.5" width="8.2" height="1.8" fill="#f0c0c8" opacity="0.36"/><rect x="0.0" y="7.0" width="318.0" height="8.5" fill="#7e0c20"/><rect x="30.0" y="9.8" width="6.4" height="1.4" fill="#e6c8cc" opacity="0.36"/><rect x="36.9" y="9.8" width="4.0" height="1.4" fill="#e6c8cc" opacity="0.36"/><rect x="41.4" y="9.8" width="8.0" height="1.4" fill="#e6c8cc" opacity="0.36"/><rect x="49.9" y="9.8" width="7.1" height="1.4" fill="#e6c8cc" opacity="0.36"/><rect x="57.5" y="9.8" width="6.2" height="1.4" fill="#e6c8cc" opacity="0.36"/><rect x="64.2" y="9.8" width="11.6" height="1.4" fill="#e6c8cc" opacity="0.36"/><rect x="76.3" y="9.8" width="11.1" height="1.4" fill="#e6c8cc" opacity="0.36"/><rect x="87.9" y="9.8" width="5.7" height="1.4" fill="#e6c8cc" opacity="0.36"/><rect x="94.1" y="9.8" width="7.1" height="1.4" fill="#e6c8cc" opacity="0.36"/><rect x="101.6" y="9.8" width="13.7" height="1.4" fill="#e6c8cc" opacity="0.36"/><rect x="115.8" y="9.8" width="14.0" height="1.4" fill="#e6c8cc" opacity="0.36"/><rect x="130.3" y="9.8" width="9.7" height="1.4" fill="#e6c8cc" opacity="0.36"/><circle cx="7" cy="21" r="3" fill="none" stroke="#e8a820" stroke-width="1.8"/><circle cx="12" cy="21" r="3" fill="none" stroke="#e8a820" stroke-width="1.8"/><rect x="19.0" y="19.5" width="16.8" height="2.8" fill="#e0e0e0" opacity="0.396"/><rect x="37.3" y="19.5" width="14.6" height="2.8" fill="#e0e0e0" opacity="0.396"/><rect x="18.0" y="26.8" width="4.9" height="2.2" fill="#cccccc" opacity="0.324"/><rect x="25.9" y="26.8" width="9.6" height="2.2" fill="#cccccc" opacity="0.324"/><rect x="38.5" y="26.8" width="4.1" height="2.2" fill="#cccccc" opacity="0.324"/><rect x="45.6" y="26.8" width="7.2" height="2.2" fill="#cccccc" opacity="0.324"/><rect x="55.9" y="26.8" width="7.8" height="2.2" fill="#cccccc" opacity="0.324"/><rect x="66.7" y="26.8" width="8.2" height="2.2" fill="#cccccc" opacity="0.324"/><rect x="77.9" y="26.8" width="4.1" height="2.2" fill="#cccccc" opacity="0.324"/><rect x="84.9" y="26.8" width="6.0" height="2.2" fill="#cccccc" opacity="0.324"/><rect x="93.9" y="26.8" width="8.6" height="2.2" fill="#cccccc" opacity="0.324"/><rect x="105.5" y="26.8" width="6.3" height="2.2" fill="#cccccc" opacity="0.324"/><rect x="114.7" y="26.8" width="8.4" height="2.2" fill="#cccccc" opacity="0.324"/><rect x="126.2" y="26.8" width="1.8" height="2.2" fill="#cccccc" opacity="0.324"/><rect x="16.0" y="33.0" width="180.0" height="0.6" fill="#505050"/><rect x="15.0" y="35.0" width="5.3" height="2.0" fill="#cccccc" opacity="0.288"/><rect x="23.3" y="35.0" width="13.8" height="2.0" fill="#cccccc" opacity="0.288"/><rect x="18.0" y="52.0" width="5.4" height="2.7" fill="#e0e0e0" opacity="0.612"/><rect x="24.7" y="52.0" width="9.7" height="2.7" fill="#e0e0e0" opacity="0.612"/><rect x="35.6" y="52.0" width="9.8" height="2.7" fill="#e0e0e0" opacity="0.612"/><rect x="46.7" y="52.0" width="3.1" height="2.7" fill="#e0e0e0" opacity="0.612"/><rect x="51.2" y="52.0" width="4.2" height="2.7" fill="#e0e0e0" opacity="0.612"/><rect x="56.7" y="52.0" width="2.4" height="2.7" fill="#e0e0e0" opacity="0.612"/><rect x="60.4" y="52.0" width="3.9" height="2.7" fill="#e0e0e0" opacity="0.612"/><rect x="65.5" y="52.0" width="8.8" height="2.7" fill="#e0e0e0" opacity="0.612"/><rect x="75.6" y="52.0" width="5.3" height="2.7" fill="#e0e0e0" opacity="0.612"/><rect x="82.2" y="52.0" width="9.2" height="2.7" fill="#e0e0e0" opacity="0.612"/><rect x="92.6" y="52.0" width="5.7" height="2.7" fill="#e0e0e0" opacity="0.612"/><rect x="99.6" y="52.0" width="8.0" height="2.7" fill="#e0e0e0" opacity="0.612"/><rect x="108.9" y="52.0" width="6.6" height="2.7" fill="#e0e0e0" opacity="0.612"/><rect x="116.8" y="52.0" width="6.0" height="2.7" fill="#e0e0e0" opacity="0.612"/><rect x="124.2" y="52.0" width="7.1" height="2.7" fill="#e0e0e0" opacity="0.612"/><rect x="132.6" y="52.0" width="5.2" height="2.7" fill="#e0e0e0" opacity="0.612"/><rect x="139.0" y="52.0" width="6.7" height="2.7" fill="#e0e0e0" opacity="0.612"/><rect x="147.1" y="52.0" width="2.5" height="2.7" fill="#e0e0e0" opacity="0.612"/><rect x="150.9" y="52.0" width="7.3" height="2.7" fill="#e0e0e0" opacity="0.612"/><rect x="159.5" y="52.0" width="3.0" height="2.7" fill="#e0e0e0" opacity="0.612"/><rect x="163.8" y="52.0" width="4.3" height="2.7" fill="#e0e0e0" opacity="0.612"/><rect x="169.4" y="52.0" width="8.8" height="2.7" fill="#e0e0e0" opacity="0.612"/><rect x="179.6" y="52.0" width="9.4" height="2.7" fill="#e0e0e0" opacity="0.612"/><rect x="190.3" y="52.0" width="2.7" height="2.7" fill="#e0e0e0" opacity="0.612"/><rect x="18.0" y="58.5" width="8.7" height="2.7" fill="#e0e0e0" opacity="0.612"/><rect x="28.0" y="58.5" width="4.6" height="2.7" fill="#e0e0e0" opacity="0.612"/><rect x="33.9" y="58.5" width="5.6" height="2.7" fill="#e0e0e0" opacity="0.612"/><rect x="40.8" y="58.5" width="3.9" height="2.7" fill="#e0e0e0" opacity="0.612"/><rect x="46.0" y="58.5" width="9.5" height="2.7" fill="#e0e0e0" opacity="0.612"/><rect x="56.8" y="58.5" width="3.1" height="2.7" fill="#e0e0e0" opacity="0.612"/><rect x="61.2" y="58.5" width="8.2" height="2.7" fill="#e0e0e0" opacity="0.612"/><rect x="70.7" y="58.5" width="2.9" height="2.7" fill="#e0e0e0" opacity="0.612"/><rect x="74.8" y="58.5" width="2.8" height="2.7" fill="#e0e0e0" opacity="0.612"/><rect x="79.0" y="58.5" width="5.6" height="2.7" fill="#e0e0e0" opacity="0.612"/><rect x="85.9" y="58.5" width="4.5" height="2.7" fill="#e0e0e0" opacity="0.612"/><rect x="91.7" y="58.5" width="3.0" height="2.7" fill="#e0e0e0" opacity="0.612"/><rect x="95.9" y="58.5" width="4.9" height="2.7" fill="#e0e0e0" opacity="0.612"/><rect x="102.1" y="58.5" width="8.2" height="2.7" fill="#e0e0e0" opacity="0.612"/><rect x="111.6" y="58.5" width="5.6" height="2.7" fill="#e0e0e0" opacity="0.612"/><rect x="118.5" y="58.5" width="5.7" height="2.7" fill="#e0e0e0" opacity="0.612"/><rect x="125.5" y="58.5" width="8.8" height="2.7" fill="#e0e0e0" opacity="0.612"/><rect x="135.6" y="58.5" width="2.7" height="2.7" fill="#e0e0e0" opacity="0.612"/><rect x="18.0" y="66.0" width="4.4" height="2.7" fill="#e0e0e0" opacity="0.612"/><rect x="23.7" y="66.0" width="7.6" height="2.7" fill="#e0e0e0" opacity="0.612"/><rect x="32.7" y="66.0" width="6.8" height="2.7" fill="#e0e0e0" opacity="0.612"/><rect x="40.8" y="66.0" width="3.7" height="2.7" fill="#e0e0e0" opacity="0.612"/><rect x="45.8" y="66.0" width="8.9" height="2.7" fill="#e0e0e0" opacity="0.612"/><rect x="56.0" y="66.0" width="3.2" height="2.7" fill="#e0e0e0" opacity="0.612"/><rect x="60.5" y="66.0" width="7.7" height="2.7" fill="#e0e0e0" opacity="0.612"/><rect x="69.4" y="66.0" width="9.7" height="2.7" fill="#e0e0e0" opacity="0.612"/><rect x="80.5" y="66.0" width="5.2" height="2.7" fill="#e0e0e0" opacity="0.612"/><rect x="87.0" y="66.0" width="2.4" height="2.7" fill="#e0e0e0" opacity="0.612"/><rect x="90.7" y="66.0" width="4.4" height="2.7" fill="#e0e0e0" opacity="0.612"/><rect x="96.3" y="66.0" width="8.6" height="2.7" fill="#e0e0e0" opacity="0.612"/><rect x="106.2" y="66.0" width="3.4" height="2.7" fill="#e0e0e0" opacity="0.612"/><rect x="110.9" y="66.0" width="9.6" height="2.7" fill="#e0e0e0" opacity="0.612"/><rect x="121.8" y="66.0" width="8.8" height="2.7" fill="#e0e0e0" opacity="0.612"/><rect x="132.0" y="66.0" width="6.4" height="2.7" fill="#e0e0e0" opacity="0.612"/><rect x="139.7" y="66.0" width="6.4" height="2.7" fill="#e0e0e0" opacity="0.612"/><rect x="147.4" y="66.0" width="2.8" height="2.7" fill="#e0e0e0" opacity="0.612"/><rect x="151.5" y="66.0" width="2.8" height="2.7" fill="#e0e0e0" opacity="0.612"/><rect x="155.6" y="66.0" width="8.4" height="2.7" fill="#e0e0e0" opacity="0.612"/><rect x="165.2" y="66.0" width="3.0" height="2.7" fill="#e0e0e0" opacity="0.612"/><rect x="169.5" y="66.0" width="2.5" height="2.7" fill="#e0e0e0" opacity="0.612"/><rect x="173.3" y="66.0" width="8.2" height="2.7" fill="#e0e0e0" opacity="0.612"/><rect x="182.8" y="66.0" width="3.8" height="2.7" fill="#e0e0e0" opacity="0.612"/><rect x="187.9" y="66.0" width="3.6" height="2.7" fill="#e0e0e0" opacity="0.612"/><rect x="192.8" y="66.0" width="5.2" height="2.7" fill="#e0e0e0" opacity="0.612"/><rect x="199.3" y="66.0" width="7.5" height="2.7" fill="#e0e0e0" opacity="0.612"/><rect x="18.0" y="73.0" width="9.5" height="2.7" fill="#e0e0e0" opacity="0.612"/><rect x="28.8" y="73.0" width="2.7" height="2.7" fill="#e0e0e0" opacity="0.612"/><rect x="32.8" y="73.0" width="6.7" height="2.7" fill="#e0e0e0" opacity="0.612"/><rect x="40.8" y="73.0" width="9.3" height="2.7" fill="#e0e0e0" opacity="0.612"/><rect x="51.4" y="73.0" width="2.6" height="2.7" fill="#e0e0e0" opacity="0.612"/><rect x="55.3" y="73.0" width="10.0" height="2.7" fill="#e0e0e0" opacity="0.612"/><rect x="66.6" y="73.0" width="3.6" height="2.7" fill="#e0e0e0" opacity="0.612"/><rect x="71.5" y="73.0" width="7.2" height="2.7" fill="#e0e0e0" opacity="0.612"/><rect x="79.9" y="73.0" width="8.5" height="2.7" fill="#e0e0e0" opacity="0.612"/><rect x="89.7" y="73.0" width="2.7" height="2.7" fill="#e0e0e0" opacity="0.612"/><rect x="93.7" y="73.0" width="8.8" height="2.7" fill="#e0e0e0" opacity="0.612"/><rect x="103.8" y="73.0" width="8.5" height="2.7" fill="#e0e0e0" opacity="0.612"/><rect x="113.6" y="73.0" width="3.0" height="2.7" fill="#e0e0e0" opacity="0.612"/><rect x="117.9" y="73.0" width="9.5" height="2.7" fill="#e0e0e0" opacity="0.612"/><rect x="128.7" y="73.0" width="2.4" height="2.7" fill="#e0e0e0" opacity="0.612"/><rect x="132.4" y="73.0" width="9.4" height="2.7" fill="#e0e0e0" opacity="0.612"/><rect x="143.1" y="73.0" width="5.5" height="2.7" fill="#e0e0e0" opacity="0.612"/><rect x="149.9" y="73.0" width="7.8" height="2.7" fill="#e0e0e0" opacity="0.612"/><rect x="159.0" y="73.0" width="6.0" height="2.7" fill="#e0e0e0" opacity="0.612"/><rect x="166.2" y="73.0" width="5.1" height="2.7" fill="#e0e0e0" opacity="0.612"/><rect x="172.6" y="73.0" width="5.4" height="2.7" fill="#e0e0e0" opacity="0.612"/><rect x="179.3" y="73.0" width="4.8" height="2.7" fill="#e0e0e0" opacity="0.612"/><rect x="185.4" y="73.0" width="9.3" height="2.7" fill="#e0e0e0" opacity="0.612"/><rect x="196.0" y="73.0" width="4.2" height="2.7" fill="#e0e0e0" opacity="0.612"/><rect x="201.5" y="73.0" width="4.5" height="2.7" fill="#e0e0e0" opacity="0.612"/><rect x="18.0" y="79.5" width="3.2" height="2.7" fill="#e0e0e0" opacity="0.612"/><rect x="22.5" y="79.5" width="6.9" height="2.7" fill="#e0e0e0" opacity="0.612"/><rect x="30.7" y="79.5" width="6.9" height="2.7" fill="#e0e0e0" opacity="0.612"/><rect x="38.9" y="79.5" width="7.2" height="2.7" fill="#e0e0e0" opacity="0.612"/><rect x="47.4" y="79.5" width="6.0" height="2.7" fill="#e0e0e0" opacity="0.612"/><rect x="54.7" y="79.5" width="9.1" height="2.7" fill="#e0e0e0" opacity="0.612"/><rect x="65.1" y="79.5" width="5.8" height="2.7" fill="#e0e0e0" opacity="0.612"/><rect x="72.2" y="79.5" width="2.7" height="2.7" fill="#e0e0e0" opacity="0.612"/><rect x="76.2" y="79.5" width="5.1" height="2.7" fill="#e0e0e0" opacity="0.612"/><rect x="82.6" y="79.5" width="5.4" height="2.7" fill="#e0e0e0" opacity="0.612"/><rect x="16.7" y="90.6" width="194.0" height="88.0" fill="#191919"/><rect x="16.7" y="90.6" width="10.5" height="88.0" fill="#4a4a4a"/><circle cx="21.5" cy="95.5" r="2.2" fill="#bbb"/><rect x="135.0" y="86.0" width="76.0" height="6.0" fill="#2a2a2a"/><rect x="28.0" y="95.0" width="15.0" height="2.3" fill="#d4d4d4" opacity="0.396"/><rect x="46.5" y="95.0" width="14.7" height="2.3" fill="#6a9955" opacity="0.396"/><rect x="63.7" y="95.0" width="14.7" height="2.3" fill="#6a9955" opacity="0.396"/><rect x="81.7" y="95.0" width="10.5" height="2.3" fill="#ce9178" opacity="0.396"/><rect x="94.3" y="95.0" width="3.4" height="2.3" fill="#dcdcaa" opacity="0.396"/><rect x="99.7" y="95.0" width="16.4" height="2.3" fill="#6a9955" opacity="0.396"/><rect x="117.7" y="95.0" width="13.2" height="2.3" fill="#dcdcaa" opacity="0.396"/><rect x="28.0" y="99.7" width="4.5" height="2.3" fill="#d4d4d4" opacity="0.396"/><rect x="34.5" y="99.7" width="15.2" height="2.3" fill="#d4d4d4" opacity="0.396"/><rect x="52.8" y="99.7" width="17.2" height="2.3" fill="#dcdcaa" opacity="0.396"/><rect x="73.2" y="99.7" width="15.0" height="2.3" fill="#6a9955" opacity="0.396"/><rect x="91.5" y="99.7" width="17.9" height="2.3" fill="#d4d4d4" opacity="0.396"/><rect x="111.3" y="99.7" width="11.9" height="2.3" fill="#6a9955" opacity="0.396"/><rect x="126.5" y="99.7" width="3.4" height="2.3" fill="#6a9955" opacity="0.396"/><rect x="133.3" y="99.7" width="11.5" height="2.3" fill="#dcdcaa" opacity="0.396"/><rect x="148.2" y="99.7" width="15.6" height="2.3" fill="#ce9178" opacity="0.396"/><rect x="166.3" y="99.7" width="5.6" height="2.3" fill="#d4d4d4" opacity="0.396"/><rect x="173.6" y="99.7" width="1.1" height="2.3" fill="#d4d4d4" opacity="0.396"/><rect x="32.0" y="104.4" width="6.0" height="2.3" fill="#d4d4d4" opacity="0.396"/><rect x="40.2" y="104.4" width="5.7" height="2.3" fill="#6a9955" opacity="0.396"/><rect x="47.5" y="104.4" width="5.2" height="2.3" fill="#d4d4d4" opacity="0.396"/><rect x="55.7" y="104.4" width="15.7" height="2.3" fill="#6a9955" opacity="0.396"/><rect x="74.9" y="104.4" width="8.6" height="2.3" fill="#ce9178" opacity="0.396"/><rect x="86.1" y="104.4" width="8.0" height="2.3" fill="#6a9955" opacity="0.396"/><rect x="96.0" y="104.4" width="5.4" height="2.3" fill="#ce9178" opacity="0.396"/><rect x="104.4" y="104.4" width="17.4" height="2.3" fill="#6a9955" opacity="0.396"/><rect x="123.7" y="104.4" width="17.5" height="2.3" fill="#dcdcaa" opacity="0.396"/><rect x="144.3" y="104.4" width="6.3" height="2.3" fill="#dcdcaa" opacity="0.396"/><rect x="153.8" y="104.4" width="8.7" height="2.3" fill="#6a9955" opacity="0.396"/><rect x="164.2" y="104.4" width="7.3" height="2.3" fill="#dcdcaa" opacity="0.396"/><rect x="28.0" y="109.1" width="7.8" height="2.3" fill="#dcdcaa" opacity="0.396"/><rect x="37.7" y="109.1" width="11.5" height="2.3" fill="#ce9178" opacity="0.396"/><rect x="51.0" y="109.1" width="14.2" height="2.3" fill="#d4d4d4" opacity="0.396"/><rect x="67.4" y="109.1" width="6.4" height="2.3" fill="#d4d4d4" opacity="0.396"/><rect x="32.0" y="113.8" width="7.0" height="2.3" fill="#d4d4d4" opacity="0.396"/><rect x="41.9" y="113.8" width="8.3" height="2.3" fill="#d4d4d4" opacity="0.396"/><rect x="53.1" y="113.8" width="3.7" height="2.3" fill="#ce9178" opacity="0.396"/><rect x="59.7" y="113.8" width="17.5" height="2.3" fill="#ce9178" opacity="0.396"/><rect x="79.8" y="113.8" width="8.7" height="2.3" fill="#dcdcaa" opacity="0.396"/><rect x="90.7" y="113.8" width="15.4" height="2.3" fill="#dcdcaa" opacity="0.396"/><rect x="108.9" y="113.8" width="2.5" height="2.3" fill="#d4d4d4" opacity="0.396"/><rect x="28.0" y="118.5" width="7.8" height="2.3" fill="#d4d4d4" opacity="0.396"/><rect x="37.4" y="118.5" width="5.6" height="2.3" fill="#ce9178" opacity="0.396"/><rect x="44.8" y="118.5" width="4.1" height="2.3" fill="#d4d4d4" opacity="0.396"/><rect x="51.1" y="118.5" width="17.8" height="2.3" fill="#ce9178" opacity="0.396"/><rect x="71.8" y="118.5" width="9.5" height="2.3" fill="#d4d4d4" opacity="0.396"/><rect x="84.0" y="118.5" width="4.1" height="2.3" fill="#d4d4d4" opacity="0.396"/><rect x="28.0" y="123.2" width="11.3" height="2.3" fill="#dcdcaa" opacity="0.396"/><rect x="41.3" y="123.2" width="7.2" height="2.3" fill="#d4d4d4" opacity="0.396"/><rect x="50.3" y="123.2" width="8.9" height="2.3" fill="#dcdcaa" opacity="0.396"/><rect x="62.3" y="123.2" width="5.3" height="2.3" fill="#6a9955" opacity="0.396"/><rect x="69.1" y="123.2" width="4.3" height="2.3" fill="#dcdcaa" opacity="0.396"/><rect x="75.9" y="123.2" width="4.5" height="2.3" fill="#d4d4d4" opacity="0.396"/><rect x="82.2" y="123.2" width="7.4" height="2.3" fill="#d4d4d4" opacity="0.396"/><rect x="92.0" y="123.2" width="4.7" height="2.3" fill="#ce9178" opacity="0.396"/><rect x="99.2" y="123.2" width="3.5" height="2.3" fill="#6a9955" opacity="0.396"/><rect x="28.0" y="127.9" width="8.7" height="2.3" fill="#d4d4d4" opacity="0.396"/><rect x="39.1" y="127.9" width="6.9" height="2.3" fill="#ce9178" opacity="0.396"/><rect x="48.1" y="127.9" width="15.6" height="2.3" fill="#dcdcaa" opacity="0.396"/><rect x="65.3" y="127.9" width="14.3" height="2.3" fill="#d4d4d4" opacity="0.396"/><rect x="81.2" y="127.9" width="8.2" height="2.3" fill="#dcdcaa" opacity="0.396"/><rect x="91.7" y="127.9" width="6.1" height="2.3" fill="#d4d4d4" opacity="0.396"/><rect x="36.0" y="132.6" width="13.3" height="2.3" fill="#ce9178" opacity="0.396"/><rect x="52.0" y="132.6" width="6.5" height="2.3" fill="#6a9955" opacity="0.396"/><rect x="60.1" y="132.6" width="16.5" height="2.3" fill="#d4d4d4" opacity="0.396"/><rect x="79.2" y="132.6" width="16.5" height="2.3" fill="#dcdcaa" opacity="0.396"/><rect x="98.6" y="132.6" width="12.3" height="2.3" fill="#d4d4d4" opacity="0.396"/><rect x="114.3" y="132.6" width="9.7" height="2.3" fill="#d4d4d4" opacity="0.396"/><rect x="127.4" y="132.6" width="15.1" height="2.3" fill="#d4d4d4" opacity="0.396"/><rect x="144.1" y="132.6" width="4.2" height="2.3" fill="#ce9178" opacity="0.396"/><rect x="150.2" y="132.6" width="15.3" height="2.3" fill="#d4d4d4" opacity="0.396"/><rect x="168.7" y="132.6" width="6.9" height="2.3" fill="#d4d4d4" opacity="0.396"/><rect x="177.3" y="132.6" width="4.3" height="2.3" fill="#dcdcaa" opacity="0.396"/><rect x="36.0" y="137.3" width="3.2" height="2.3" fill="#dcdcaa" opacity="0.396"/><rect x="41.9" y="137.3" width="14.7" height="2.3" fill="#d4d4d4" opacity="0.396"/><rect x="58.9" y="137.3" width="5.2" height="2.3" fill="#dcdcaa" opacity="0.396"/><rect x="66.8" y="137.3" width="17.5" height="2.3" fill="#d4d4d4" opacity="0.396"/><rect x="87.6" y="137.3" width="11.4" height="2.3" fill="#d4d4d4" opacity="0.396"/><rect x="102.1" y="137.3" width="16.0" height="2.3" fill="#6a9955" opacity="0.396"/><rect x="121.4" y="137.3" width="7.0" height="2.3" fill="#ce9178" opacity="0.396"/><rect x="131.0" y="137.3" width="10.1" height="2.3" fill="#d4d4d4" opacity="0.396"/><rect x="143.2" y="137.3" width="5.2" height="2.3" fill="#dcdcaa" opacity="0.396"/><rect x="151.2" y="137.3" width="9.0" height="2.3" fill="#ce9178" opacity="0.396"/><rect x="163.5" y="137.3" width="8.0" height="2.3" fill="#d4d4d4" opacity="0.396"/><rect x="173.1" y="137.3" width="2.4" height="2.3" fill="#6a9955" opacity="0.396"/><rect x="32.0" y="146.7" width="15.6" height="2.3" fill="#d4d4d4" opacity="0.396"/><rect x="51.1" y="146.7" width="6.4" height="2.3" fill="#6a9955" opacity="0.396"/><rect x="61.0" y="146.7" width="9.6" height="2.3" fill="#6a9955" opacity="0.396"/><rect x="72.6" y="146.7" width="9.3" height="2.3" fill="#d4d4d4" opacity="0.396"/><rect x="83.8" y="146.7" width="6.2" height="2.3" fill="#ce9178" opacity="0.396"/><rect x="92.9" y="146.7" width="1.2" height="2.3" fill="#6a9955" opacity="0.396"/><rect x="28.0" y="151.4" width="13.6" height="2.3" fill="#ce9178" opacity="0.396"/><rect x="43.4" y="151.4" width="15.5" height="2.3" fill="#dcdcaa" opacity="0.396"/><rect x="28.0" y="156.1" width="6.7" height="2.3" fill="#ce9178" opacity="0.396"/><rect x="36.3" y="156.1" width="8.4" height="2.3" fill="#d4d4d4" opacity="0.396"/><rect x="46.8" y="156.1" width="15.4" height="2.3" fill="#dcdcaa" opacity="0.396"/><rect x="64.4" y="156.1" width="16.8" height="2.3" fill="#d4d4d4" opacity="0.396"/><rect x="83.3" y="156.1" width="10.3" height="2.3" fill="#ce9178" opacity="0.396"/><rect x="95.5" y="156.1" width="16.1" height="2.3" fill="#dcdcaa" opacity="0.396"/><rect x="114.1" y="156.1" width="8.2" height="2.3" fill="#6a9955" opacity="0.396"/><rect x="125.3" y="156.1" width="13.3" height="2.3" fill="#6a9955" opacity="0.396"/><rect x="140.2" y="156.1" width="3.7" height="2.3" fill="#dcdcaa" opacity="0.396"/><rect x="147.0" y="156.1" width="6.2" height="2.3" fill="#d4d4d4" opacity="0.396"/><rect x="156.0" y="156.1" width="1.2" height="2.3" fill="#6a9955" opacity="0.396"/><rect x="28.0" y="160.8" width="5.0" height="2.3" fill="#d4d4d4" opacity="0.396"/><rect x="35.7" y="160.8" width="3.1" height="2.3" fill="#6a9955" opacity="0.396"/><rect x="41.5" y="160.8" width="17.1" height="2.3" fill="#6a9955" opacity="0.396"/><rect x="61.0" y="160.8" width="8.6" height="2.3" fill="#6a9955" opacity="0.396"/><rect x="72.1" y="160.8" width="6.3" height="2.3" fill="#6a9955" opacity="0.396"/><rect x="81.2" y="160.8" width="15.4" height="2.3" fill="#ce9178" opacity="0.396"/><rect x="99.2" y="160.8" width="3.1" height="2.3" fill="#6a9955" opacity="0.396"/><rect x="105.0" y="160.8" width="6.0" height="2.3" fill="#6a9955" opacity="0.396"/><rect x="32.0" y="174.9" width="6.9" height="2.3" fill="#6a9955" opacity="0.396"/><rect x="40.8" y="174.9" width="10.8" height="2.3" fill="#d4d4d4" opacity="0.396"/><rect x="54.9" y="174.9" width="15.1" height="2.3" fill="#dcdcaa" opacity="0.396"/><rect x="72.2" y="174.9" width="7.8" height="2.3" fill="#d4d4d4" opacity="0.396"/><rect x="83.0" y="174.9" width="12.8" height="2.3" fill="#6a9955" opacity="0.396"/><rect x="97.8" y="174.9" width="9.3" height="2.3" fill="#ce9178" opacity="0.396"/><rect x="110.1" y="174.9" width="11.7" height="2.3" fill="#dcdcaa" opacity="0.396"/><rect x="125.0" y="174.9" width="8.1" height="2.3" fill="#d4d4d4" opacity="0.396"/><rect x="136.0" y="174.9" width="12.6" height="2.3" fill="#ce9178" opacity="0.396"/><rect x="151.9" y="174.9" width="12.5" height="2.3" fill="#dcdcaa" opacity="0.396"/><rect x="32.0" y="101.0" width="100.0" height="2.0" fill="#4a9a40" opacity="0.45"/><rect x="32.0" y="106.0" width="145.0" height="2.0" fill="#4a9a40" opacity="0.45"/><rect x="213.0" y="40.0" width="1.0" height="139.0" fill="#555"/><rect x="221.0" y="47.0" width="16.0" height="1.5" fill="#8ab4f8" opacity="0.7"/><rect x="224.0" y="57.0" width="5.0" height="5.0" fill="#bbbbbb" opacity="0.5"/><rect x="235.5" y="57.0" width="5.0" height="5.0" fill="#bbbbbb" opacity="0.5"/><rect x="247.0" y="57.0" width="5.0" height="5.0" fill="#bbbbbb" opacity="0.5"/><rect x="258.5" y="57.0" width="5.0" height="5.0" fill="#bbbbbb" opacity="0.5"/><rect x="227.0" y="67.0" width="4.0" height="5.0" fill="#cfcfcf" opacity="0.6"/><rect x="227.0" y="75.3" width="4.0" height="5.0" fill="#cfcfcf" opacity="0.6"/><rect x="233.0" y="77.3" width="10.2" height="2.0" fill="#d0d0d0" opacity="0.36"/><rect x="244.5" y="77.3" width="9.1" height="2.0" fill="#d0d0d0" opacity="0.36"/><rect x="255.0" y="77.3" width="3.1" height="2.0" fill="#d0d0d0" opacity="0.36"/><rect x="227.0" y="83.6" width="4.0" height="5.0" fill="#cfcfcf" opacity="0.6"/><rect x="233.0" y="85.6" width="11.2" height="2.0" fill="#d0d0d0" opacity="0.36"/><rect x="245.5" y="85.6" width="11.0" height="2.0" fill="#d0d0d0" opacity="0.36"/><rect x="257.7" y="85.6" width="9.1" height="2.0" fill="#d0d0d0" opacity="0.36"/><rect x="227.0" y="91.9" width="4.0" height="5.0" fill="#cfcfcf" opacity="0.6"/><rect x="233.0" y="93.9" width="13.4" height="2.0" fill="#d0d0d0" opacity="0.36"/><rect x="247.7" y="93.9" width="12.9" height="2.0" fill="#d0d0d0" opacity="0.36"/><rect x="261.9" y="93.9" width="10.2" height="2.0" fill="#d0d0d0" opacity="0.36"/><rect x="273.4" y="93.9" width="5.4" height="2.0" fill="#d0d0d0" opacity="0.36"/><rect x="227.0" y="100.2" width="4.0" height="5.0" fill="#cfcfcf" opacity="0.6"/><rect x="233.0" y="102.2" width="7.6" height="2.0" fill="#d0d0d0" opacity="0.36"/><rect x="241.9" y="102.2" width="12.8" height="2.0" fill="#d0d0d0" opacity="0.36"/><rect x="256.0" y="102.2" width="7.1" height="2.0" fill="#d0d0d0" opacity="0.36"/><rect x="264.4" y="102.2" width="9.4" height="2.0" fill="#d0d0d0" opacity="0.36"/><rect x="275.1" y="102.2" width="4.0" height="2.0" fill="#d0d0d0" opacity="0.36"/><rect x="227.0" y="108.5" width="4.0" height="5.0" fill="#cfcfcf" opacity="0.6"/><rect x="233.0" y="110.5" width="3.6" height="2.0" fill="#d0d0d0" opacity="0.36"/><rect x="237.9" y="110.5" width="10.0" height="2.0" fill="#d0d0d0" opacity="0.36"/><rect x="249.2" y="110.5" width="7.4" height="2.0" fill="#d0d0d0" opacity="0.36"/><rect x="227.0" y="116.8" width="4.0" height="5.0" fill="#cfcfcf" opacity="0.6"/><rect x="233.0" y="118.8" width="8.2" height="2.0" fill="#d0d0d0" opacity="0.36"/><rect x="242.5" y="118.8" width="5.1" height="2.0" fill="#d0d0d0" opacity="0.36"/><rect x="248.9" y="118.8" width="4.3" height="2.0" fill="#d0d0d0" opacity="0.36"/><rect x="254.6" y="118.8" width="10.5" height="2.0" fill="#d0d0d0" opacity="0.36"/><rect x="266.3" y="118.8" width="5.3" height="2.0" fill="#d0d0d0" opacity="0.36"/><rect x="227.0" y="125.1" width="4.0" height="5.0" fill="#cfcfcf" opacity="0.6"/><rect x="233.0" y="127.1" width="12.6" height="2.0" fill="#d0d0d0" opacity="0.36"/><rect x="246.9" y="127.1" width="4.7" height="2.0" fill="#d0d0d0" opacity="0.36"/><rect x="252.8" y="127.1" width="12.6" height="2.0" fill="#d0d0d0" opacity="0.36"/><rect x="227.0" y="133.4" width="4.0" height="5.0" fill="#cfcfcf" opacity="0.6"/><rect x="233.0" y="135.4" width="13.9" height="2.0" fill="#d0d0d0" opacity="0.36"/><rect x="248.2" y="135.4" width="12.8" height="2.0" fill="#d0d0d0" opacity="0.36"/><rect x="262.3" y="135.4" width="1.0" height="2.0" fill="#d0d0d0" opacity="0.36"/><rect x="221.0" y="172.0" width="34.0" height="1.8" fill="#cccccc" opacity="0.5"/><rect x="257.0" y="132.4" width="61.0" height="46.6" fill="#050505"/><path d="M281 132.4 L318 132.4 L318 160 C305 150 290 142 281 140 Z" fill="#9a4a9c" opacity="0.75"/><ellipse cx="288" cy="158" rx="11" ry="14" fill="#241614"/><ellipse cx="289" cy="161" rx="6.5" ry="9" fill="#7a5548"/><path d="M272 179 C274 170 280 168 289 168 C299 169 304 173 306 179 Z" fill="#1a1010"/><rect x="306.0" y="160.0" width="12.0" height="19.0" fill="#d8d0d8" opacity="0.7"/></g></svg>
<svg style="left:1290px;top:442.2px;overflow:hidden" width="318" height="179" viewBox="0 0 318 179"><g filter="url(#bl)"><rect x="0.0" y="0.0" width="318.0" height="179.0" fill="#000"/><rect x="1.4" y="2.0" width="155.0" height="162.0" fill="#171717"/><rect x="1.4" y="2.0" width="155.0" height="6.0" fill="#191919"/><rect x="1.4" y="8.0" width="8.0" height="156.0" fill="#191919"/><rect x="12.0" y="10.5" width="4.6" height="1.5" fill="#cccccc" opacity="0.324"/><rect x="17.9" y="10.5" width="12.5" height="1.5" fill="#cccccc" opacity="0.324"/><rect x="31.7" y="10.5" width="5.0" height="1.5" fill="#cccccc" opacity="0.324"/><rect x="10.0" y="15.5" width="3.9" height="1.2" fill="#aaaaaa" opacity="0.216"/><rect x="15.9" y="15.5" width="6.7" height="1.2" fill="#aaaaaa" opacity="0.216"/><rect x="24.5" y="15.5" width="13.9" height="1.2" fill="#aaaaaa" opacity="0.216"/><rect x="40.4" y="15.5" width="6.4" height="1.2" fill="#aaaaaa" opacity="0.216"/><rect x="48.8" y="15.5" width="3.6" height="1.2" fill="#aaaaaa" opacity="0.216"/><rect x="54.5" y="15.5" width="8.0" height="1.2" fill="#aaaaaa" opacity="0.216"/><rect x="64.5" y="15.5" width="5.3" height="1.2" fill="#aaaaaa" opacity="0.216"/><rect x="71.8" y="15.5" width="11.5" height="1.2" fill="#aaaaaa" opacity="0.216"/><rect x="85.3" y="15.5" width="9.3" height="1.2" fill="#aaaaaa" opacity="0.216"/><rect x="96.6" y="15.5" width="4.7" height="1.2" fill="#aaaaaa" opacity="0.216"/><rect x="103.4" y="15.5" width="11.6" height="1.2" fill="#aaaaaa" opacity="0.216"/><rect x="117.0" y="15.5" width="11.6" height="1.2" fill="#aaaaaa" opacity="0.216"/><rect x="130.6" y="15.5" width="4.4" height="1.2" fill="#aaaaaa" opacity="0.216"/><rect x="137.0" y="15.5" width="7.8" height="1.2" fill="#aaaaaa" opacity="0.216"/><rect x="146.8" y="15.5" width="7.7" height="1.2" fill="#aaaaaa" opacity="0.216"/><rect x="12.0" y="19.5" width="7.7" height="1.2" fill="#aaaaaa" opacity="0.216"/><rect x="23.7" y="19.5" width="8.3" height="1.2" fill="#aaaaaa" opacity="0.216"/><rect x="36.0" y="19.5" width="3.1" height="1.2" fill="#aaaaaa" opacity="0.216"/><rect x="43.0" y="19.5" width="8.9" height="1.2" fill="#aaaaaa" opacity="0.216"/><rect x="55.9" y="19.5" width="11.0" height="1.2" fill="#aaaaaa" opacity="0.216"/><rect x="70.9" y="19.5" width="13.5" height="1.2" fill="#aaaaaa" opacity="0.216"/><rect x="88.4" y="19.5" width="12.8" height="1.2" fill="#aaaaaa" opacity="0.216"/><rect x="105.2" y="19.5" width="11.3" height="1.2" fill="#aaaaaa" opacity="0.216"/><rect x="120.5" y="19.5" width="1.5" height="1.2" fill="#aaaaaa" opacity="0.216"/><rect x="16.0" y="24.5" width="2.1" height="1.5" fill="#cccccc" opacity="0.324"/><rect x="19.4" y="24.5" width="2.0" height="1.5" fill="#cccccc" opacity="0.324"/><rect x="22.7" y="24.5" width="6.4" height="1.5" fill="#cccccc" opacity="0.324"/><rect x="30.4" y="24.5" width="3.4" height="1.5" fill="#cccccc" opacity="0.324"/><rect x="35.1" y="24.5" width="7.3" height="1.5" fill="#cccccc" opacity="0.324"/><rect x="43.7" y="24.5" width="3.9" height="1.5" fill="#cccccc" opacity="0.324"/><rect x="48.8" y="24.5" width="2.6" height="1.5" fill="#cccccc" opacity="0.324"/><rect x="52.7" y="24.5" width="5.0" height="1.5" fill="#cccccc" opacity="0.324"/><rect x="59.1" y="24.5" width="3.8" height="1.5" fill="#cccccc" opacity="0.324"/><rect x="64.2" y="24.5" width="2.4" height="1.5" fill="#cccccc" opacity="0.324"/><rect x="67.9" y="24.5" width="2.3" height="1.5" fill="#cccccc" opacity="0.324"/><rect x="71.5" y="24.5" width="7.7" height="1.5" fill="#cccccc" opacity="0.324"/><rect x="80.5" y="24.5" width="4.7" height="1.5" fill="#cccccc" opacity="0.324"/><rect x="86.5" y="24.5" width="5.1" height="1.5" fill="#cccccc" opacity="0.324"/><rect x="92.9" y="24.5" width="5.1" height="1.5" fill="#cccccc" opacity="0.324"/><rect x="99.4" y="24.5" width="4.6" height="1.5" fill="#cccccc" opacity="0.324"/><rect x="105.3" y="24.5" width="6.1" height="1.5" fill="#cccccc" opacity="0.324"/><rect x="112.7" y="24.5" width="2.8" height="1.5" fill="#cccccc" opacity="0.324"/><rect x="116.8" y="24.5" width="8.0" height="1.5" fill="#cccccc" opacity="0.324"/><rect x="126.1" y="24.5" width="4.9" height="1.5" fill="#cccccc" opacity="0.324"/><rect x="132.3" y="24.5" width="6.5" height="1.5" fill="#cccccc" opacity="0.324"/><rect x="140.1" y="24.5" width="3.0" height="1.5" fill="#cccccc" opacity="0.324"/><rect x="144.4" y="24.5" width="7.4" height="1.5" fill="#cccccc" opacity="0.324"/><rect x="153.1" y="24.5" width="0.9" height="1.5" fill="#cccccc" opacity="0.324"/><rect x="16.0" y="27.5" width="2.1" height="1.5" fill="#cccccc" opacity="0.324"/><rect x="19.4" y="27.5" width="3.3" height="1.5" fill="#cccccc" opacity="0.324"/><rect x="24.1" y="27.5" width="7.9" height="1.5" fill="#cccccc" opacity="0.324"/><rect x="33.3" y="27.5" width="3.3" height="1.5" fill="#cccccc" opacity="0.324"/><rect x="37.8" y="27.5" width="2.1" height="1.5" fill="#cccccc" opacity="0.324"/><rect x="41.3" y="27.5" width="5.0" height="1.5" fill="#cccccc" opacity="0.324"/><rect x="47.6" y="27.5" width="2.7" height="1.5" fill="#cccccc" opacity="0.324"/><rect x="51.6" y="27.5" width="6.3" height="1.5" fill="#cccccc" opacity="0.324"/><rect x="59.2" y="27.5" width="6.8" height="1.5" fill="#cccccc" opacity="0.324"/><rect x="67.3" y="27.5" width="4.3" height="1.5" fill="#cccccc" opacity="0.324"/><rect x="72.8" y="27.5" width="5.8" height="1.5" fill="#cccccc" opacity="0.324"/><rect x="79.9" y="27.5" width="6.6" height="1.5" fill="#cccccc" opacity="0.324"/><rect x="87.9" y="27.5" width="5.7" height="1.5" fill="#cccccc" opacity="0.324"/><rect x="94.9" y="27.5" width="5.6" height="1.5" fill="#cccccc" opacity="0.324"/><rect x="101.8" y="27.5" width="2.3" height="1.5" fill="#cccccc" opacity="0.324"/><rect x="105.4" y="27.5" width="2.6" height="1.5" fill="#cccccc" opacity="0.324"/><rect x="109.3" y="27.5" width="7.0" height="1.5" fill="#cccccc" opacity="0.324"/><rect x="117.6" y="27.5" width="2.3" height="1.5" fill="#cccccc" opacity="0.324"/><rect x="121.2" y="27.5" width="2.7" height="1.5" fill="#cccccc" opacity="0.324"/><rect x="125.2" y="27.5" width="4.7" height="1.5" fill="#cccccc" opacity="0.324"/><rect x="131.2" y="27.5" width="2.7" height="1.5" fill="#cccccc" opacity="0.324"/><rect x="135.2" y="27.5" width="3.5" height="1.5" fill="#cccccc" opacity="0.324"/><rect x="140.0" y="27.5" width="4.0" height="1.5" fill="#cccccc" opacity="0.324"/><rect x="21.0" y="39.9" width="12.9" height="1.6" fill="#d4d4d4" opacity="0.36"/><rect x="36.5" y="39.9" width="12.3" height="1.6" fill="#6a9955" opacity="0.36"/><rect x="50.6" y="39.9" width="7.0" height="1.6" fill="#d4d4d4" opacity="0.36"/><rect x="26.0" y="42.8" width="4.6" height="1.6" fill="#c586c0" opacity="0.36"/><rect x="33.3" y="42.8" width="14.7" height="1.6" fill="#d4d4d4" opacity="0.36"/><rect x="30.0" y="45.7" width="3.6" height="1.6" fill="#569cd6" opacity="0.36"/><rect x="36.9" y="45.7" width="13.3" height="1.6" fill="#569cd6" opacity="0.36"/><rect x="52.4" y="45.7" width="3.0" height="1.6" fill="#d4d4d4" opacity="0.36"/><rect x="57.1" y="45.7" width="4.7" height="1.6" fill="#d4d4d4" opacity="0.36"/><rect x="64.6" y="45.7" width="1.5" height="1.6" fill="#d4d4d4" opacity="0.36"/><rect x="26.0" y="51.5" width="9.9" height="1.6" fill="#6a9955" opacity="0.36"/><rect x="37.9" y="51.5" width="3.8" height="1.6" fill="#ce9178" opacity="0.36"/><rect x="44.9" y="51.5" width="15.8" height="1.6" fill="#dcdcaa" opacity="0.36"/><rect x="63.8" y="51.5" width="7.7" height="1.6" fill="#6a9955" opacity="0.36"/><rect x="73.2" y="51.5" width="15.6" height="1.6" fill="#9cdcfe" opacity="0.36"/><rect x="26.0" y="57.3" width="9.6" height="1.6" fill="#d4d4d4" opacity="0.36"/><rect x="37.6" y="57.3" width="14.0" height="1.6" fill="#dcdcaa" opacity="0.36"/><rect x="54.7" y="57.3" width="5.7" height="1.6" fill="#d4d4d4" opacity="0.36"/><rect x="62.8" y="57.3" width="4.1" height="1.6" fill="#d4d4d4" opacity="0.36"/><rect x="30.0" y="60.2" width="15.0" height="1.6" fill="#d4d4d4" opacity="0.36"/><rect x="46.7" y="60.2" width="13.9" height="1.6" fill="#ce9178" opacity="0.36"/><rect x="62.3" y="60.2" width="16.7" height="1.6" fill="#569cd6" opacity="0.36"/><rect x="82.1" y="60.2" width="11.0" height="1.6" fill="#ce9178" opacity="0.36"/><rect x="21.0" y="63.1" width="16.2" height="1.6" fill="#6a9955" opacity="0.36"/><rect x="40.6" y="63.1" width="5.0" height="1.6" fill="#569cd6" opacity="0.36"/><rect x="47.3" y="63.1" width="9.2" height="1.6" fill="#9cdcfe" opacity="0.36"/><rect x="58.1" y="63.1" width="12.8" height="1.6" fill="#9cdcfe" opacity="0.36"/><rect x="73.9" y="63.1" width="13.2" height="1.6" fill="#6a9955" opacity="0.36"/><rect x="89.7" y="63.1" width="10.8" height="1.6" fill="#d4d4d4" opacity="0.36"/><rect x="21.0" y="66.0" width="13.9" height="1.6" fill="#569cd6" opacity="0.36"/><rect x="37.1" y="66.0" width="13.1" height="1.6" fill="#d4d4d4" opacity="0.36"/><rect x="52.0" y="66.0" width="15.4" height="1.6" fill="#d4d4d4" opacity="0.36"/><rect x="21.0" y="68.9" width="10.0" height="1.6" fill="#569cd6" opacity="0.36"/><rect x="34.3" y="68.9" width="4.1" height="1.6" fill="#569cd6" opacity="0.36"/><rect x="40.5" y="68.9" width="8.0" height="1.6" fill="#6a9955" opacity="0.36"/><rect x="50.1" y="68.9" width="6.3" height="1.6" fill="#d4d4d4" opacity="0.36"/><rect x="58.7" y="68.9" width="14.5" height="1.6" fill="#d4d4d4" opacity="0.36"/><rect x="30.0" y="71.8" width="10.5" height="1.6" fill="#dcdcaa" opacity="0.36"/><rect x="42.2" y="71.8" width="8.0" height="1.6" fill="#d4d4d4" opacity="0.36"/><rect x="21.0" y="74.7" width="3.0" height="1.6" fill="#d4d4d4" opacity="0.36"/><rect x="27.1" y="74.7" width="17.4" height="1.6" fill="#d4d4d4" opacity="0.36"/><rect x="46.6" y="74.7" width="10.6" height="1.6" fill="#c586c0" opacity="0.36"/><rect x="60.1" y="74.7" width="9.8" height="1.6" fill="#dcdcaa" opacity="0.36"/><rect x="72.1" y="74.7" width="3.8" height="1.6" fill="#c586c0" opacity="0.36"/><rect x="30.0" y="77.6" width="8.4" height="1.6" fill="#569cd6" opacity="0.36"/><rect x="40.2" y="77.6" width="14.4" height="1.6" fill="#c586c0" opacity="0.36"/><rect x="56.1" y="77.6" width="8.3" height="1.6" fill="#d4d4d4" opacity="0.36"/><rect x="67.8" y="77.6" width="7.4" height="1.6" fill="#d4d4d4" opacity="0.36"/><rect x="77.5" y="77.6" width="4.6" height="1.6" fill="#ce9178" opacity="0.36"/><rect x="84.5" y="77.6" width="13.8" height="1.6" fill="#6a9955" opacity="0.36"/><rect x="21.0" y="83.4" width="15.8" height="1.6" fill="#c586c0" opacity="0.36"/><rect x="39.2" y="83.4" width="4.5" height="1.6" fill="#6a9955" opacity="0.36"/><rect x="21.0" y="86.3" width="15.6" height="1.6" fill="#d4d4d4" opacity="0.36"/><rect x="38.3" y="86.3" width="16.4" height="1.6" fill="#569cd6" opacity="0.36"/><rect x="57.5" y="86.3" width="17.3" height="1.6" fill="#ce9178" opacity="0.36"/><rect x="78.3" y="86.3" width="3.1" height="1.6" fill="#6a9955" opacity="0.36"/><rect x="82.9" y="86.3" width="17.0" height="1.6" fill="#d4d4d4" opacity="0.36"/><rect x="102.4" y="86.3" width="3.0" height="1.6" fill="#ce9178" opacity="0.36"/><rect x="21.0" y="92.1" width="12.0" height="1.6" fill="#dcdcaa" opacity="0.36"/><rect x="35.5" y="92.1" width="8.8" height="1.6" fill="#d4d4d4" opacity="0.36"/><rect x="47.6" y="92.1" width="14.4" height="1.6" fill="#6a9955" opacity="0.36"/><rect x="26.0" y="95.0" width="5.0" height="1.6" fill="#d4d4d4" opacity="0.36"/><rect x="33.7" y="95.0" width="16.3" height="1.6" fill="#d4d4d4" opacity="0.36"/><rect x="52.1" y="95.0" width="13.5" height="1.6" fill="#dcdcaa" opacity="0.36"/><rect x="68.5" y="95.0" width="5.6" height="1.6" fill="#d4d4d4" opacity="0.36"/><rect x="26.0" y="100.8" width="5.0" height="1.6" fill="#6a9955" opacity="0.36"/><rect x="33.8" y="100.8" width="17.4" height="1.6" fill="#d4d4d4" opacity="0.36"/><rect x="53.8" y="100.8" width="12.6" height="1.6" fill="#6a9955" opacity="0.36"/><rect x="68.0" y="100.8" width="8.3" height="1.6" fill="#569cd6" opacity="0.36"/><rect x="79.0" y="100.8" width="17.1" height="1.6" fill="#6a9955" opacity="0.36"/><rect x="98.5" y="100.8" width="11.5" height="1.6" fill="#d4d4d4" opacity="0.36"/><rect x="21.0" y="103.7" width="3.4" height="1.6" fill="#ce9178" opacity="0.36"/><rect x="26.0" y="103.7" width="3.8" height="1.6" fill="#6a9955" opacity="0.36"/><rect x="32.8" y="103.7" width="5.4" height="1.6" fill="#6a9955" opacity="0.36"/><rect x="41.1" y="103.7" width="5.2" height="1.6" fill="#9cdcfe" opacity="0.36"/><rect x="49.2" y="103.7" width="7.4" height="1.6" fill="#d4d4d4" opacity="0.36"/><rect x="58.2" y="103.7" width="15.2" height="1.6" fill="#d4d4d4" opacity="0.36"/><rect x="21.0" y="106.6" width="11.4" height="1.6" fill="#c586c0" opacity="0.36"/><rect x="34.9" y="106.6" width="15.0" height="1.6" fill="#6a9955" opacity="0.36"/><rect x="52.0" y="106.6" width="13.0" height="1.6" fill="#d4d4d4" opacity="0.36"/><rect x="67.2" y="106.6" width="17.4" height="1.6" fill="#d4d4d4" opacity="0.36"/><rect x="86.7" y="106.6" width="4.6" height="1.6" fill="#9cdcfe" opacity="0.36"/><rect x="30.0" y="112.4" width="16.7" height="1.6" fill="#6a9955" opacity="0.36"/><rect x="49.6" y="112.4" width="8.5" height="1.6" fill="#d4d4d4" opacity="0.36"/><rect x="60.7" y="112.4" width="12.1" height="1.6" fill="#6a9955" opacity="0.36"/><rect x="76.2" y="112.4" width="7.4" height="1.6" fill="#ce9178" opacity="0.36"/><rect x="87.1" y="112.4" width="4.1" height="1.6" fill="#ce9178" opacity="0.36"/><rect x="94.1" y="112.4" width="4.8" height="1.6" fill="#9cdcfe" opacity="0.36"/><rect x="101.3" y="112.4" width="5.7" height="1.6" fill="#ce9178" opacity="0.36"/><rect x="21.0" y="115.3" width="13.6" height="1.6" fill="#ce9178" opacity="0.36"/><rect x="36.2" y="115.3" width="16.9" height="1.6" fill="#d4d4d4" opacity="0.36"/><rect x="54.8" y="115.3" width="5.0" height="1.6" fill="#d4d4d4" opacity="0.36"/><rect x="26.0" y="118.2" width="13.6" height="1.6" fill="#d4d4d4" opacity="0.36"/><rect x="41.6" y="118.2" width="3.5" height="1.6" fill="#d4d4d4" opacity="0.36"/><rect x="30.0" y="124.0" width="6.3" height="1.6" fill="#c586c0" opacity="0.36"/><rect x="39.1" y="124.0" width="8.0" height="1.6" fill="#6a9955" opacity="0.36"/><rect x="49.0" y="124.0" width="1.5" height="1.6" fill="#d4d4d4" opacity="0.36"/><rect x="21.0" y="126.9" width="8.2" height="1.6" fill="#c586c0" opacity="0.36"/><rect x="32.5" y="126.9" width="10.8" height="1.6" fill="#d4d4d4" opacity="0.36"/><rect x="30.0" y="132.7" width="17.2" height="1.6" fill="#d4d4d4" opacity="0.36"/><rect x="49.2" y="132.7" width="13.9" height="1.6" fill="#9cdcfe" opacity="0.36"/><rect x="66.4" y="132.7" width="15.3" height="1.6" fill="#dcdcaa" opacity="0.36"/><rect x="84.2" y="132.7" width="10.6" height="1.6" fill="#569cd6" opacity="0.36"/><rect x="96.4" y="132.7" width="16.5" height="1.6" fill="#c586c0" opacity="0.36"/><rect x="21.0" y="141.4" width="6.2" height="1.6" fill="#d4d4d4" opacity="0.36"/><rect x="30.2" y="141.4" width="16.0" height="1.6" fill="#d4d4d4" opacity="0.36"/><rect x="49.4" y="141.4" width="6.1" height="1.6" fill="#6a9955" opacity="0.36"/><rect x="58.7" y="141.4" width="14.1" height="1.6" fill="#d4d4d4" opacity="0.36"/><rect x="75.6" y="141.4" width="6.9" height="1.6" fill="#6a9955" opacity="0.36"/><rect x="21.0" y="147.2" width="3.8" height="1.6" fill="#6a9955" opacity="0.36"/><rect x="27.4" y="147.2" width="11.6" height="1.6" fill="#c586c0" opacity="0.36"/><rect x="30.0" y="150.1" width="9.5" height="1.6" fill="#9cdcfe" opacity="0.36"/><rect x="41.8" y="150.1" width="4.8" height="1.6" fill="#9cdcfe" opacity="0.36"/><rect x="49.3" y="150.1" width="12.3" height="1.6" fill="#6a9955" opacity="0.36"/><rect x="64.3" y="150.1" width="13.5" height="1.6" fill="#d4d4d4" opacity="0.36"/><rect x="80.0" y="150.1" width="10.5" height="1.6" fill="#6a9955" opacity="0.36"/><rect x="21.0" y="153.0" width="16.9" height="1.6" fill="#d4d4d4" opacity="0.36"/><rect x="40.2" y="153.0" width="12.9" height="1.6" fill="#569cd6" opacity="0.36"/><rect x="54.9" y="153.0" width="1.1" height="1.6" fill="#6a9955" opacity="0.36"/><rect x="26.0" y="155.9" width="5.2" height="1.6" fill="#d4d4d4" opacity="0.36"/><rect x="34.4" y="155.9" width="17.5" height="1.6" fill="#6a9955" opacity="0.36"/><rect x="54.7" y="155.9" width="17.4" height="1.6" fill="#9cdcfe" opacity="0.36"/><rect x="74.7" y="155.9" width="11.3" height="1.6" fill="#d4d4d4" opacity="0.36"/><rect x="87.6" y="155.9" width="11.6" height="1.6" fill="#d4d4d4" opacity="0.36"/><rect x="101.8" y="155.9" width="11.2" height="1.6" fill="#6a9955" opacity="0.36"/><rect x="26.0" y="158.8" width="16.6" height="1.6" fill="#d4d4d4" opacity="0.36"/><rect x="44.4" y="158.8" width="5.8" height="1.6" fill="#d4d4d4" opacity="0.36"/><rect x="53.3" y="158.8" width="2.4" height="1.6" fill="#ce9178" opacity="0.36"/><rect x="21.0" y="161.7" width="17.0" height="1.6" fill="#d4d4d4" opacity="0.36"/><rect x="40.4" y="161.7" width="11.2" height="1.6" fill="#6a9955" opacity="0.36"/><rect x="54.5" y="161.7" width="6.8" height="1.6" fill="#c586c0" opacity="0.36"/><rect x="64.2" y="161.7" width="10.3" height="1.6" fill="#dcdcaa" opacity="0.36"/><rect x="76.7" y="161.7" width="13.1" height="1.6" fill="#c586c0" opacity="0.36"/><rect x="91.5" y="161.7" width="8.1" height="1.6" fill="#c586c0" opacity="0.36"/><rect x="1.4" y="161.0" width="155.0" height="3.0" fill="#181818"/><rect x="1.4" y="161.0" width="5.0" height="3.0" fill="#2a7acc"/></g></svg>
<svg style="left:282px;top:730px;overflow:hidden" width="318" height="179" viewBox="0 0 318 179"><g filter="url(#bl)"><rect x="0.0" y="0.0" width="318.0" height="179.0" fill="#000"/><rect x="0.0" y="0.5" width="318.0" height="166.2" fill="#1a1a1a"/><rect x="0.0" y="0.5" width="318.0" height="7.7" fill="#1b1b1b"/><rect x="10.0" y="3.5" width="5.8" height="1.8" fill="#bbbbbb" opacity="0.324"/><rect x="18.8" y="3.5" width="6.5" height="1.8" fill="#bbbbbb" opacity="0.324"/><rect x="28.3" y="3.5" width="5.2" height="1.8" fill="#bbbbbb" opacity="0.324"/><rect x="36.5" y="3.5" width="6.3" height="1.8" fill="#bbbbbb" opacity="0.324"/><rect x="45.8" y="3.5" width="6.3" height="1.8" fill="#bbbbbb" opacity="0.324"/><rect x="55.1" y="3.5" width="5.5" height="1.8" fill="#bbbbbb" opacity="0.324"/><rect x="63.5" y="3.5" width="5.3" height="1.8" fill="#bbbbbb" opacity="0.324"/><rect x="105.0" y="1.8" width="125.0" height="5.0" fill="#2b2b2b"/><rect x="0.0" y="8.2" width="11.6" height="158.5" fill="#1a1a1a"/><rect x="3.2" y="11.0" width="5.0" height="5.0" fill="#9a9a9a" opacity="0.4" rx="1"/><rect x="3.2" y="22.5" width="5.0" height="5.0" fill="#9a9a9a" opacity="0.4" rx="1"/><rect x="3.2" y="34.0" width="5.0" height="5.0" fill="#9a9a9a" opacity="0.4" rx="1"/><rect x="3.2" y="45.5" width="5.0" height="5.0" fill="#9a9a9a" opacity="0.4" rx="1"/><rect x="3.2" y="57.0" width="5.0" height="5.0" fill="#9a9a9a" opacity="0.4" rx="1"/><rect x="3.2" y="68.5" width="5.0" height="5.0" fill="#9a9a9a" opacity="0.4" rx="1"/><rect x="3.2" y="80.0" width="5.0" height="5.0" fill="#9a9a9a" opacity="0.4" rx="1"/><rect x="3.2" y="91.5" width="5.0" height="5.0" fill="#9a9a9a" opacity="0.4" rx="1"/><rect x="11.6" y="8.2" width="43.4" height="158.5" fill="#181818"/><rect x="16.0" y="12.5" width="7.7" height="1.6" fill="#bbbbbb" opacity="0.288"/><rect x="25.0" y="12.5" width="3.1" height="1.6" fill="#bbbbbb" opacity="0.288"/><rect x="29.4" y="12.5" width="4.6" height="1.6" fill="#bbbbbb" opacity="0.288"/><rect x="19.0" y="19.0" width="8.8" height="1.8" fill="#cccccc" opacity="0.324"/><rect x="29.0" y="19.0" width="5.5" height="1.8" fill="#cccccc" opacity="0.324"/><rect x="35.7" y="19.0" width="6.2" height="1.8" fill="#cccccc" opacity="0.324"/><rect x="43.1" y="19.0" width="6.6" height="1.8" fill="#cccccc" opacity="0.324"/><rect x="21.0" y="24.6" width="7.2" height="1.8" fill="#cccccc" opacity="0.324"/><rect x="29.4" y="24.6" width="6.2" height="1.8" fill="#cccccc" opacity="0.324"/><rect x="36.8" y="24.6" width="5.7" height="1.8" fill="#cccccc" opacity="0.324"/><rect x="43.7" y="24.6" width="8.0" height="1.8" fill="#cccccc" opacity="0.324"/><rect x="19.0" y="30.2" width="3.7" height="1.8" fill="#cccccc" opacity="0.324"/><rect x="23.9" y="30.2" width="5.5" height="1.8" fill="#cccccc" opacity="0.324"/><rect x="30.7" y="30.2" width="10.4" height="1.8" fill="#cccccc" opacity="0.324"/><rect x="42.3" y="30.2" width="6.4" height="1.8" fill="#cccccc" opacity="0.324"/><rect x="19.0" y="35.8" width="11.0" height="1.8" fill="#cccccc" opacity="0.324"/><rect x="31.2" y="35.8" width="3.7" height="1.8" fill="#cccccc" opacity="0.324"/><rect x="36.1" y="35.8" width="3.7" height="1.8" fill="#cccccc" opacity="0.324"/><rect x="40.9" y="35.8" width="2.0" height="1.8" fill="#cccccc" opacity="0.324"/><rect x="17.0" y="41.4" width="8.2" height="1.8" fill="#cccccc" opacity="0.324"/><rect x="26.4" y="41.4" width="9.9" height="1.8" fill="#cccccc" opacity="0.324"/><rect x="37.5" y="41.4" width="4.9" height="1.8" fill="#cccccc" opacity="0.324"/><rect x="43.6" y="41.4" width="3.3" height="1.8" fill="#cccccc" opacity="0.324"/><rect x="48.2" y="41.4" width="2.6" height="1.8" fill="#cccccc" opacity="0.324"/><rect x="23.0" y="47.0" width="4.3" height="1.8" fill="#cccccc" opacity="0.324"/><rect x="28.5" y="47.0" width="6.5" height="1.8" fill="#cccccc" opacity="0.324"/><rect x="36.3" y="47.0" width="11.0" height="1.8" fill="#cccccc" opacity="0.324"/><rect x="48.5" y="47.0" width="1.7" height="1.8" fill="#cccccc" opacity="0.324"/><rect x="21.0" y="52.6" width="7.5" height="1.8" fill="#cccccc" opacity="0.324"/><rect x="29.7" y="52.6" width="3.8" height="1.8" fill="#cccccc" opacity="0.324"/><rect x="34.7" y="52.6" width="6.3" height="1.8" fill="#cccccc" opacity="0.324"/><rect x="19.0" y="58.2" width="10.3" height="1.8" fill="#cccccc" opacity="0.324"/><rect x="30.5" y="58.2" width="8.5" height="1.8" fill="#cccccc" opacity="0.324"/><rect x="40.2" y="58.2" width="4.5" height="1.8" fill="#cccccc" opacity="0.324"/><rect x="45.9" y="58.2" width="5.8" height="1.8" fill="#cccccc" opacity="0.324"/><rect x="23.0" y="63.8" width="8.1" height="1.8" fill="#cccccc" opacity="0.324"/><rect x="32.3" y="63.8" width="8.1" height="1.8" fill="#cccccc" opacity="0.324"/><rect x="41.6" y="63.8" width="3.2" height="1.8" fill="#cccccc" opacity="0.324"/><rect x="19.0" y="69.4" width="7.4" height="1.8" fill="#cccccc" opacity="0.324"/><rect x="27.6" y="69.4" width="6.2" height="1.8" fill="#cccccc" opacity="0.324"/><rect x="35.0" y="69.4" width="5.0" height="1.8" fill="#cccccc" opacity="0.324"/><rect x="41.2" y="69.4" width="7.4" height="1.8" fill="#cccccc" opacity="0.324"/><rect x="21.0" y="75.0" width="9.0" height="1.8" fill="#cccccc" opacity="0.324"/><rect x="31.2" y="75.0" width="7.7" height="1.8" fill="#cccccc" opacity="0.324"/><rect x="40.1" y="75.0" width="4.0" height="1.8" fill="#cccccc" opacity="0.324"/><rect x="23.0" y="80.6" width="7.1" height="1.8" fill="#cccccc" opacity="0.324"/><rect x="31.3" y="80.6" width="3.4" height="1.8" fill="#cccccc" opacity="0.324"/><rect x="35.9" y="80.6" width="11.8" height="1.8" fill="#cccccc" opacity="0.324"/><rect x="21.0" y="86.2" width="11.7" height="1.8" fill="#cccccc" opacity="0.324"/><rect x="33.9" y="86.2" width="8.4" height="1.8" fill="#cccccc" opacity="0.324"/><rect x="21.0" y="91.8" width="5.4" height="1.8" fill="#cccccc" opacity="0.324"/><rect x="27.6" y="91.8" width="7.9" height="1.8" fill="#cccccc" opacity="0.324"/><rect x="36.7" y="91.8" width="4.6" height="1.8" fill="#cccccc" opacity="0.324"/><rect x="42.4" y="91.8" width="8.9" height="1.8" fill="#cccccc" opacity="0.324"/><rect x="21.0" y="97.4" width="11.1" height="1.8" fill="#cccccc" opacity="0.324"/><rect x="33.3" y="97.4" width="3.7" height="1.8" fill="#cccccc" opacity="0.324"/><rect x="38.2" y="97.4" width="5.3" height="1.8" fill="#cccccc" opacity="0.324"/><rect x="44.6" y="97.4" width="4.0" height="1.8" fill="#cccccc" opacity="0.324"/><rect x="19.0" y="103.0" width="6.2" height="1.8" fill="#cccccc" opacity="0.324"/><rect x="26.4" y="103.0" width="10.8" height="1.8" fill="#cccccc" opacity="0.324"/><rect x="38.4" y="103.0" width="7.4" height="1.8" fill="#cccccc" opacity="0.324"/><rect x="23.0" y="108.6" width="3.1" height="1.8" fill="#cccccc" opacity="0.324"/><rect x="27.3" y="108.6" width="10.9" height="1.8" fill="#cccccc" opacity="0.324"/><rect x="39.4" y="108.6" width="7.0" height="1.8" fill="#cccccc" opacity="0.324"/><rect x="47.6" y="108.6" width="5.1" height="1.8" fill="#cccccc" opacity="0.324"/><rect x="21.0" y="114.2" width="4.7" height="1.8" fill="#cccccc" opacity="0.324"/><rect x="26.9" y="114.2" width="6.3" height="1.8" fill="#cccccc" opacity="0.324"/><rect x="34.3" y="114.2" width="9.4" height="1.8" fill="#cccccc" opacity="0.324"/><rect x="17.0" y="119.8" width="6.7" height="1.8" fill="#cccccc" opacity="0.324"/><rect x="24.9" y="119.8" width="6.0" height="1.8" fill="#cccccc" opacity="0.324"/><rect x="32.1" y="119.8" width="4.0" height="1.8" fill="#cccccc" opacity="0.324"/><rect x="37.3" y="119.8" width="9.1" height="1.8" fill="#cccccc" opacity="0.324"/><rect x="19.0" y="125.4" width="6.7" height="1.8" fill="#cccccc" opacity="0.324"/><rect x="26.9" y="125.4" width="5.2" height="1.8" fill="#cccccc" opacity="0.324"/><rect x="33.3" y="125.4" width="4.2" height="1.8" fill="#cccccc" opacity="0.324"/><rect x="38.6" y="125.4" width="8.3" height="1.8" fill="#cccccc" opacity="0.324"/><rect x="17.0" y="131.0" width="4.3" height="1.8" fill="#cccccc" opacity="0.324"/><rect x="22.5" y="131.0" width="4.5" height="1.8" fill="#cccccc" opacity="0.324"/><rect x="28.2" y="131.0" width="11.3" height="1.8" fill="#cccccc" opacity="0.324"/><rect x="40.7" y="131.0" width="7.6" height="1.8" fill="#cccccc" opacity="0.324"/><rect x="49.6" y="131.0" width="2.6" height="1.8" fill="#cccccc" opacity="0.324"/><rect x="17.0" y="136.6" width="9.6" height="1.8" fill="#cccccc" opacity="0.324"/><rect x="27.8" y="136.6" width="10.4" height="1.8" fill="#cccccc" opacity="0.324"/><rect x="39.3" y="136.6" width="11.5" height="1.8" fill="#cccccc" opacity="0.324"/><rect x="19.0" y="142.2" width="11.9" height="1.8" fill="#cccccc" opacity="0.324"/><rect x="32.1" y="142.2" width="10.8" height="1.8" fill="#cccccc" opacity="0.324"/><rect x="44.1" y="142.2" width="1.6" height="1.8" fill="#cccccc" opacity="0.324"/><rect x="23.0" y="147.8" width="10.2" height="1.8" fill="#cccccc" opacity="0.324"/><rect x="34.4" y="147.8" width="10.4" height="1.8" fill="#cccccc" opacity="0.324"/><rect x="45.9" y="147.8" width="3.7" height="1.8" fill="#cccccc" opacity="0.324"/><rect x="21.0" y="153.4" width="9.2" height="1.8" fill="#cccccc" opacity="0.324"/><rect x="31.4" y="153.4" width="11.3" height="1.8" fill="#cccccc" opacity="0.324"/><rect x="12.0" y="86.0" width="43.0" height="5.0" fill="#333" opacity="0.7"/><rect x="55.0" y="8.2" width="263.0" height="21.0" fill="#1b1b1b"/><rect x="60.0" y="12.5" width="9.6" height="1.5" fill="#bbbbbb" opacity="0.288"/><rect x="71.6" y="12.5" width="3.8" height="1.5" fill="#bbbbbb" opacity="0.288"/><rect x="77.3" y="12.5" width="7.2" height="1.5" fill="#bbbbbb" opacity="0.288"/><rect x="86.5" y="12.5" width="4.5" height="1.5" fill="#bbbbbb" opacity="0.288"/><rect x="92.9" y="12.5" width="3.2" height="1.5" fill="#bbbbbb" opacity="0.288"/><rect x="98.1" y="12.5" width="8.7" height="1.5" fill="#bbbbbb" opacity="0.288"/><rect x="108.9" y="12.5" width="13.0" height="1.5" fill="#bbbbbb" opacity="0.288"/><rect x="123.9" y="12.5" width="10.5" height="1.5" fill="#bbbbbb" opacity="0.288"/><rect x="136.4" y="12.5" width="12.1" height="1.5" fill="#bbbbbb" opacity="0.288"/><rect x="60.0" y="19.0" width="9.7" height="1.3" fill="#aaaaaa" opacity="0.252"/><rect x="71.7" y="19.0" width="5.0" height="1.3" fill="#aaaaaa" opacity="0.252"/><rect x="78.6" y="19.0" width="12.9" height="1.3" fill="#aaaaaa" opacity="0.252"/><rect x="93.5" y="19.0" width="9.6" height="1.3" fill="#aaaaaa" opacity="0.252"/><rect x="105.1" y="19.0" width="12.7" height="1.3" fill="#aaaaaa" opacity="0.252"/><rect x="60.0" y="25.0" width="11.3" height="1.3" fill="#aaaaaa" opacity="0.252"/><rect x="74.3" y="25.0" width="4.0" height="1.3" fill="#aaaaaa" opacity="0.252"/><rect x="81.3" y="25.0" width="10.3" height="1.3" fill="#aaaaaa" opacity="0.252"/><rect x="94.6" y="25.0" width="12.9" height="1.3" fill="#aaaaaa" opacity="0.252"/><rect x="110.5" y="25.0" width="8.9" height="1.3" fill="#aaaaaa" opacity="0.252"/><rect x="122.4" y="25.0" width="3.0" height="1.3" fill="#aaaaaa" opacity="0.252"/><rect x="128.4" y="25.0" width="13.3" height="1.3" fill="#aaaaaa" opacity="0.252"/><rect x="144.7" y="25.0" width="10.5" height="1.3" fill="#aaaaaa" opacity="0.252"/><rect x="158.2" y="25.0" width="7.7" height="1.3" fill="#aaaaaa" opacity="0.252"/><rect x="168.9" y="25.0" width="6.1" height="1.3" fill="#aaaaaa" opacity="0.252"/><rect x="57.5" y="36.0" width="1.0" height="14.0" fill="#6a7ab0" opacity="0.6"/><text x="65.3" y="47.4" font-family="Liberation Sans" font-size="10.8" fill="#e6e6e6" textLength="110">Assignmnet 2 (100 points)</text><rect x="65.3" y="59.0" width="20.0" height="2.8" fill="#e8e8e8" opacity="0.576"/><rect x="86.5" y="59.0" width="17.2" height="2.8" fill="#e8e8e8" opacity="0.576"/><rect x="104.9" y="59.0" width="9.4" height="2.8" fill="#e8e8e8" opacity="0.576"/><rect x="65.3" y="64.5" width="21.0" height="2.8" fill="#e8e8e8" opacity="0.576"/><rect x="87.5" y="64.5" width="13.7" height="2.8" fill="#e8e8e8" opacity="0.576"/><rect x="102.4" y="64.5" width="7.9" height="2.8" fill="#e8e8e8" opacity="0.576"/><rect x="65.3" y="70.0" width="11.6" height="2.8" fill="#e8e8e8" opacity="0.576"/><rect x="78.1" y="70.0" width="3.2" height="2.8" fill="#e8e8e8" opacity="0.576"/><rect x="65.3" y="75.5" width="20.5" height="2.8" fill="#e8e8e8" opacity="0.576"/><rect x="87.0" y="75.5" width="19.4" height="2.8" fill="#e8e8e8" opacity="0.576"/><rect x="107.6" y="75.5" width="5.7" height="2.8" fill="#e8e8e8" opacity="0.576"/><rect x="80.0" y="64.5" width="31.0" height="2.8" fill="#4a8ad8" opacity="0.7"/><text x="65.3" y="95" font-family="Liberation Sans" font-size="7" fill="#cfcfcf" textLength="92">SMS Spam Detection (100 points)</text><rect x="65.3" y="107.5" width="5.8" height="2.3" fill="#d8d8d8" opacity="0.446"/><rect x="72.3" y="107.5" width="4.3" height="2.3" fill="#d8d8d8" opacity="0.446"/><rect x="77.8" y="107.5" width="8.9" height="2.3" fill="#d8d8d8" opacity="0.446"/><rect x="87.9" y="107.5" width="10.2" height="2.3" fill="#d8d8d8" opacity="0.446"/><rect x="99.3" y="107.5" width="2.8" height="2.3" fill="#d8d8d8" opacity="0.446"/><rect x="103.3" y="107.5" width="7.4" height="2.3" fill="#d8d8d8" opacity="0.446"/><rect x="111.8" y="107.5" width="6.9" height="2.3" fill="#d8d8d8" opacity="0.446"/><rect x="119.9" y="107.5" width="4.3" height="2.3" fill="#d8d8d8" opacity="0.446"/><rect x="125.5" y="107.5" width="2.0" height="2.3" fill="#d8d8d8" opacity="0.446"/><rect x="128.7" y="107.5" width="8.7" height="2.3" fill="#d8d8d8" opacity="0.446"/><rect x="138.6" y="107.5" width="2.1" height="2.3" fill="#d8d8d8" opacity="0.446"/><rect x="141.9" y="107.5" width="6.7" height="2.3" fill="#d8d8d8" opacity="0.446"/><rect x="149.8" y="107.5" width="6.7" height="2.3" fill="#d8d8d8" opacity="0.446"/><rect x="157.6" y="107.5" width="5.4" height="2.3" fill="#d8d8d8" opacity="0.446"/><rect x="164.2" y="107.5" width="3.8" height="2.3" fill="#d8d8d8" opacity="0.446"/><rect x="169.3" y="107.5" width="9.2" height="2.3" fill="#d8d8d8" opacity="0.446"/><rect x="179.7" y="107.5" width="5.7" height="2.3" fill="#d8d8d8" opacity="0.446"/><rect x="186.6" y="107.5" width="3.0" height="2.3" fill="#d8d8d8" opacity="0.446"/><rect x="190.7" y="107.5" width="5.8" height="2.3" fill="#d8d8d8" opacity="0.446"/><rect x="197.8" y="107.5" width="7.3" height="2.3" fill="#d8d8d8" opacity="0.446"/><rect x="206.2" y="107.5" width="4.4" height="2.3" fill="#d8d8d8" opacity="0.446"/><rect x="211.8" y="107.5" width="6.8" height="2.3" fill="#d8d8d8" opacity="0.446"/><rect x="219.8" y="107.5" width="7.1" height="2.3" fill="#d8d8d8" opacity="0.446"/><rect x="228.1" y="107.5" width="7.5" height="2.3" fill="#d8d8d8" opacity="0.446"/><rect x="236.8" y="107.5" width="10.9" height="2.3" fill="#d8d8d8" opacity="0.446"/><rect x="248.9" y="107.5" width="5.6" height="2.3" fill="#d8d8d8" opacity="0.446"/><rect x="255.7" y="107.5" width="3.8" height="2.3" fill="#d8d8d8" opacity="0.446"/><rect x="260.7" y="107.5" width="7.0" height="2.3" fill="#d8d8d8" opacity="0.446"/><rect x="268.9" y="107.5" width="7.0" height="2.3" fill="#d8d8d8" opacity="0.446"/><rect x="277.1" y="107.5" width="3.6" height="2.3" fill="#d8d8d8" opacity="0.446"/><rect x="281.9" y="107.5" width="7.0" height="2.3" fill="#d8d8d8" opacity="0.446"/><rect x="290.2" y="107.5" width="6.4" height="2.3" fill="#d8d8d8" opacity="0.446"/><rect x="297.7" y="107.5" width="10.9" height="2.3" fill="#d8d8d8" opacity="0.446"/><rect x="309.8" y="107.5" width="7.2" height="2.3" fill="#d8d8d8" opacity="0.446"/><rect x="65.3" y="113.0" width="5.6" height="2.3" fill="#d8d8d8" opacity="0.446"/><rect x="72.1" y="113.0" width="3.2" height="2.3" fill="#d8d8d8" opacity="0.446"/><rect x="76.5" y="113.0" width="9.8" height="2.3" fill="#d8d8d8" opacity="0.446"/><rect x="87.5" y="113.0" width="3.1" height="2.3" fill="#d8d8d8" opacity="0.446"/><rect x="91.8" y="113.0" width="4.1" height="2.3" fill="#d8d8d8" opacity="0.446"/><rect x="97.0" y="113.0" width="9.0" height="2.3" fill="#d8d8d8" opacity="0.446"/><rect x="107.3" y="113.0" width="10.5" height="2.3" fill="#d8d8d8" opacity="0.446"/><rect x="119.0" y="113.0" width="2.9" height="2.3" fill="#d8d8d8" opacity="0.446"/><rect x="123.1" y="113.0" width="6.6" height="2.3" fill="#d8d8d8" opacity="0.446"/><rect x="130.9" y="113.0" width="9.1" height="2.3" fill="#d8d8d8" opacity="0.446"/><rect x="141.2" y="113.0" width="9.2" height="2.3" fill="#d8d8d8" opacity="0.446"/><rect x="151.6" y="113.0" width="7.5" height="2.3" fill="#d8d8d8" opacity="0.446"/><rect x="160.3" y="113.0" width="8.2" height="2.3" fill="#d8d8d8" opacity="0.446"/><rect x="169.7" y="113.0" width="2.5" height="2.3" fill="#d8d8d8" opacity="0.446"/><rect x="173.3" y="113.0" width="5.5" height="2.3" fill="#d8d8d8" opacity="0.446"/><rect x="180.0" y="113.0" width="7.7" height="2.3" fill="#d8d8d8" opacity="0.446"/><rect x="189.0" y="113.0" width="9.2" height="2.3" fill="#d8d8d8" opacity="0.446"/><rect x="199.4" y="113.0" width="9.4" height="2.3" fill="#d8d8d8" opacity="0.446"/><rect x="210.0" y="113.0" width="6.2" height="2.3" fill="#d8d8d8" opacity="0.446"/><rect x="217.5" y="113.0" width="7.4" height="2.3" fill="#d8d8d8" opacity="0.446"/><rect x="226.1" y="113.0" width="2.8" height="2.3" fill="#d8d8d8" opacity="0.446"/><rect x="230.1" y="113.0" width="4.4" height="2.3" fill="#d8d8d8" opacity="0.446"/><rect x="235.6" y="113.0" width="5.3" height="2.3" fill="#d8d8d8" opacity="0.446"/><rect x="242.2" y="113.0" width="7.5" height="2.3" fill="#d8d8d8" opacity="0.446"/><rect x="250.8" y="113.0" width="8.5" height="2.3" fill="#d8d8d8" opacity="0.446"/><rect x="260.6" y="113.0" width="10.4" height="2.3" fill="#d8d8d8" opacity="0.446"/><rect x="272.1" y="113.0" width="5.6" height="2.3" fill="#d8d8d8" opacity="0.446"/><rect x="278.9" y="113.0" width="7.9" height="2.3" fill="#d8d8d8" opacity="0.446"/><rect x="288.1" y="113.0" width="4.6" height="2.3" fill="#d8d8d8" opacity="0.446"/><rect x="293.8" y="113.0" width="10.7" height="2.3" fill="#d8d8d8" opacity="0.446"/><rect x="305.7" y="113.0" width="2.5" height="2.3" fill="#d8d8d8" opacity="0.446"/><rect x="309.4" y="113.0" width="8.9" height="2.3" fill="#d8d8d8" opacity="0.446"/><rect x="65.3" y="118.5" width="3.6" height="2.3" fill="#d8d8d8" opacity="0.446"/><rect x="70.1" y="118.5" width="6.4" height="2.3" fill="#d8d8d8" opacity="0.446"/><rect x="77.7" y="118.5" width="2.1" height="2.3" fill="#d8d8d8" opacity="0.446"/><rect x="81.0" y="118.5" width="9.7" height="2.3" fill="#d8d8d8" opacity="0.446"/><rect x="91.9" y="118.5" width="10.4" height="2.3" fill="#d8d8d8" opacity="0.446"/><rect x="103.5" y="118.5" width="6.7" height="2.3" fill="#d8d8d8" opacity="0.446"/><rect x="111.3" y="118.5" width="3.8" height="2.3" fill="#d8d8d8" opacity="0.446"/><rect x="116.3" y="118.5" width="9.1" height="2.3" fill="#d8d8d8" opacity="0.446"/><rect x="126.5" y="118.5" width="6.6" height="2.3" fill="#d8d8d8" opacity="0.446"/><rect x="134.3" y="118.5" width="8.3" height="2.3" fill="#d8d8d8" opacity="0.446"/><rect x="143.8" y="118.5" width="7.5" height="2.3" fill="#d8d8d8" opacity="0.446"/><rect x="152.5" y="118.5" width="8.1" height="2.3" fill="#d8d8d8" opacity="0.446"/><rect x="161.8" y="118.5" width="5.2" height="2.3" fill="#d8d8d8" opacity="0.446"/><rect x="168.2" y="118.5" width="7.9" height="2.3" fill="#d8d8d8" opacity="0.446"/><rect x="177.3" y="118.5" width="10.8" height="2.3" fill="#d8d8d8" opacity="0.446"/><rect x="189.3" y="118.5" width="2.8" height="2.3" fill="#d8d8d8" opacity="0.446"/><rect x="193.3" y="118.5" width="4.5" height="2.3" fill="#d8d8d8" opacity="0.446"/><rect x="199.0" y="118.5" width="5.6" height="2.3" fill="#d8d8d8" opacity="0.446"/><rect x="205.8" y="118.5" width="8.0" height="2.3" fill="#d8d8d8" opacity="0.446"/><rect x="215.0" y="118.5" width="5.6" height="2.3" fill="#d8d8d8" opacity="0.446"/><rect x="221.9" y="118.5" width="3.8" height="2.3" fill="#d8d8d8" opacity="0.446"/><rect x="226.9" y="118.5" width="2.1" height="2.3" fill="#d8d8d8" opacity="0.446"/><rect x="230.2" y="118.5" width="8.3" height="2.3" fill="#d8d8d8" opacity="0.446"/><rect x="239.7" y="118.5" width="10.3" height="2.3" fill="#d8d8d8" opacity="0.446"/><rect x="251.2" y="118.5" width="6.9" height="2.3" fill="#d8d8d8" opacity="0.446"/><rect x="259.4" y="118.5" width="8.5" height="2.3" fill="#d8d8d8" opacity="0.446"/><rect x="269.1" y="118.5" width="7.0" height="2.3" fill="#d8d8d8" opacity="0.446"/><rect x="277.3" y="118.5" width="7.2" height="2.3" fill="#d8d8d8" opacity="0.446"/><rect x="285.8" y="118.5" width="5.1" height="2.3" fill="#d8d8d8" opacity="0.446"/><rect x="292.1" y="118.5" width="9.3" height="2.3" fill="#d8d8d8" opacity="0.446"/><rect x="302.6" y="118.5" width="2.7" height="2.3" fill="#d8d8d8" opacity="0.446"/><rect x="65.3" y="124.0" width="10.7" height="2.3" fill="#d8d8d8" opacity="0.446"/><rect x="77.2" y="124.0" width="2.1" height="2.3" fill="#d8d8d8" opacity="0.446"/><rect x="65.3" y="133.5" width="5.6" height="2.3" fill="#d8d8d8" opacity="0.446"/><rect x="72.1" y="133.5" width="2.0" height="2.3" fill="#d8d8d8" opacity="0.446"/><rect x="75.4" y="133.5" width="3.6" height="2.3" fill="#d8d8d8" opacity="0.446"/><rect x="80.2" y="133.5" width="6.6" height="2.3" fill="#d8d8d8" opacity="0.446"/><rect x="87.9" y="133.5" width="7.0" height="2.3" fill="#d8d8d8" opacity="0.446"/><rect x="96.1" y="133.5" width="6.5" height="2.3" fill="#d8d8d8" opacity="0.446"/><rect x="103.9" y="133.5" width="5.1" height="2.3" fill="#d8d8d8" opacity="0.446"/><rect x="110.1" y="133.5" width="3.1" height="2.3" fill="#d8d8d8" opacity="0.446"/><rect x="114.4" y="133.5" width="6.6" height="2.3" fill="#d8d8d8" opacity="0.446"/><rect x="122.2" y="133.5" width="4.3" height="2.3" fill="#d8d8d8" opacity="0.446"/><rect x="127.7" y="133.5" width="6.8" height="2.3" fill="#d8d8d8" opacity="0.446"/><rect x="135.8" y="133.5" width="9.1" height="2.3" fill="#d8d8d8" opacity="0.446"/><rect x="146.1" y="133.5" width="4.3" height="2.3" fill="#d8d8d8" opacity="0.446"/><rect x="151.5" y="133.5" width="6.0" height="2.3" fill="#d8d8d8" opacity="0.446"/><rect x="158.7" y="133.5" width="5.4" height="2.3" fill="#d8d8d8" opacity="0.446"/><rect x="165.3" y="133.5" width="6.4" height="2.3" fill="#d8d8d8" opacity="0.446"/><rect x="172.9" y="133.5" width="4.2" height="2.3" fill="#d8d8d8" opacity="0.446"/><rect x="178.3" y="133.5" width="5.1" height="2.3" fill="#d8d8d8" opacity="0.446"/><rect x="184.5" y="133.5" width="9.0" height="2.3" fill="#d8d8d8" opacity="0.446"/><rect x="194.7" y="133.5" width="8.1" height="2.3" fill="#d8d8d8" opacity="0.446"/><rect x="204.0" y="133.5" width="10.1" height="2.3" fill="#d8d8d8" opacity="0.446"/><rect x="215.3" y="133.5" width="9.8" height="2.3" fill="#d8d8d8" opacity="0.446"/><rect x="226.3" y="133.5" width="6.3" height="2.3" fill="#d8d8d8" opacity="0.446"/><rect x="233.8" y="133.5" width="4.3" height="2.3" fill="#d8d8d8" opacity="0.446"/><rect x="239.3" y="133.5" width="5.4" height="2.3" fill="#d8d8d8" opacity="0.446"/><rect x="246.0" y="133.5" width="9.1" height="2.3" fill="#d8d8d8" opacity="0.446"/><rect x="256.3" y="133.5" width="4.0" height="2.3" fill="#d8d8d8" opacity="0.446"/><rect x="261.5" y="133.5" width="8.3" height="2.3" fill="#d8d8d8" opacity="0.446"/><rect x="271.0" y="133.5" width="9.2" height="2.3" fill="#d8d8d8" opacity="0.446"/><rect x="281.4" y="133.5" width="5.7" height="2.3" fill="#d8d8d8" opacity="0.446"/><rect x="288.3" y="133.5" width="5.2" height="2.3" fill="#d8d8d8" opacity="0.446"/><rect x="294.7" y="133.5" width="6.8" height="2.3" fill="#d8d8d8" opacity="0.446"/><rect x="302.7" y="133.5" width="8.3" height="2.3" fill="#d8d8d8" opacity="0.446"/><rect x="312.2" y="133.5" width="4.4" height="2.3" fill="#d8d8d8" opacity="0.446"/><rect x="65.3" y="139.0" width="5.6" height="2.3" fill="#d8d8d8" opacity="0.446"/><rect x="72.1" y="139.0" width="8.7" height="2.3" fill="#d8d8d8" opacity="0.446"/><rect x="82.0" y="139.0" width="5.1" height="2.3" fill="#d8d8d8" opacity="0.446"/><rect x="88.3" y="139.0" width="7.0" height="2.3" fill="#d8d8d8" opacity="0.446"/><rect x="96.5" y="139.0" width="3.6" height="2.3" fill="#d8d8d8" opacity="0.446"/><rect x="101.3" y="139.0" width="4.8" height="2.3" fill="#d8d8d8" opacity="0.446"/><rect x="107.3" y="139.0" width="4.0" height="2.3" fill="#d8d8d8" opacity="0.446"/><rect x="112.5" y="139.0" width="7.2" height="2.3" fill="#d8d8d8" opacity="0.446"/><rect x="120.9" y="139.0" width="3.6" height="2.3" fill="#d8d8d8" opacity="0.446"/><rect x="125.7" y="139.0" width="8.7" height="2.3" fill="#d8d8d8" opacity="0.446"/><rect x="135.6" y="139.0" width="10.4" height="2.3" fill="#d8d8d8" opacity="0.446"/><rect x="147.2" y="139.0" width="3.7" height="2.3" fill="#d8d8d8" opacity="0.446"/><rect x="152.1" y="139.0" width="8.6" height="2.3" fill="#d8d8d8" opacity="0.446"/><rect x="161.9" y="139.0" width="4.1" height="2.3" fill="#d8d8d8" opacity="0.446"/><rect x="167.3" y="139.0" width="4.2" height="2.3" fill="#d8d8d8" opacity="0.446"/><rect x="172.6" y="139.0" width="4.4" height="2.3" fill="#d8d8d8" opacity="0.446"/><rect x="178.2" y="139.0" width="4.1" height="2.3" fill="#d8d8d8" opacity="0.446"/><rect x="183.5" y="139.0" width="9.5" height="2.3" fill="#d8d8d8" opacity="0.446"/><rect x="194.2" y="139.0" width="9.5" height="2.3" fill="#d8d8d8" opacity="0.446"/><rect x="204.9" y="139.0" width="5.2" height="2.3" fill="#d8d8d8" opacity="0.446"/><rect x="211.3" y="139.0" width="9.0" height="2.3" fill="#d8d8d8" opacity="0.446"/><rect x="221.5" y="139.0" width="3.1" height="2.3" fill="#d8d8d8" opacity="0.446"/><rect x="225.8" y="139.0" width="2.7" height="2.3" fill="#d8d8d8" opacity="0.446"/><rect x="229.7" y="139.0" width="10.6" height="2.3" fill="#d8d8d8" opacity="0.446"/><rect x="241.5" y="139.0" width="6.4" height="2.3" fill="#d8d8d8" opacity="0.446"/><rect x="249.2" y="139.0" width="2.1" height="2.3" fill="#d8d8d8" opacity="0.446"/><rect x="252.4" y="139.0" width="9.7" height="2.3" fill="#d8d8d8" opacity="0.446"/><rect x="263.3" y="139.0" width="10.6" height="2.3" fill="#d8d8d8" opacity="0.446"/><rect x="275.2" y="139.0" width="9.6" height="2.3" fill="#d8d8d8" opacity="0.446"/><rect x="286.0" y="139.0" width="5.3" height="2.3" fill="#d8d8d8" opacity="0.446"/><rect x="292.5" y="139.0" width="4.8" height="2.3" fill="#d8d8d8" opacity="0.446"/><rect x="298.6" y="139.0" width="10.1" height="2.3" fill="#d8d8d8" opacity="0.446"/><rect x="309.8" y="139.0" width="8.5" height="2.3" fill="#d8d8d8" opacity="0.446"/><rect x="65.3" y="144.5" width="7.2" height="2.3" fill="#d8d8d8" opacity="0.446"/><rect x="73.7" y="144.5" width="4.5" height="2.3" fill="#d8d8d8" opacity="0.446"/><rect x="79.3" y="144.5" width="3.6" height="2.3" fill="#d8d8d8" opacity="0.446"/><rect x="84.2" y="144.5" width="8.9" height="2.3" fill="#d8d8d8" opacity="0.446"/><rect x="94.3" y="144.5" width="6.6" height="2.3" fill="#d8d8d8" opacity="0.446"/><rect x="102.1" y="144.5" width="5.6" height="2.3" fill="#d8d8d8" opacity="0.446"/><rect x="108.8" y="144.5" width="8.8" height="2.3" fill="#d8d8d8" opacity="0.446"/><rect x="118.8" y="144.5" width="3.2" height="2.3" fill="#d8d8d8" opacity="0.446"/><rect x="123.2" y="144.5" width="6.7" height="2.3" fill="#d8d8d8" opacity="0.446"/><rect x="131.1" y="144.5" width="5.8" height="2.3" fill="#d8d8d8" opacity="0.446"/><rect x="138.1" y="144.5" width="10.5" height="2.3" fill="#d8d8d8" opacity="0.446"/><rect x="149.8" y="144.5" width="2.3" height="2.3" fill="#d8d8d8" opacity="0.446"/><rect x="153.2" y="144.5" width="5.1" height="2.3" fill="#d8d8d8" opacity="0.446"/><rect x="159.6" y="144.5" width="9.7" height="2.3" fill="#d8d8d8" opacity="0.446"/><rect x="170.5" y="144.5" width="9.0" height="2.3" fill="#d8d8d8" opacity="0.446"/><rect x="180.7" y="144.5" width="6.1" height="2.3" fill="#d8d8d8" opacity="0.446"/><rect x="188.0" y="144.5" width="3.1" height="2.3" fill="#d8d8d8" opacity="0.446"/><rect x="192.3" y="144.5" width="6.7" height="2.3" fill="#d8d8d8" opacity="0.446"/><rect x="200.2" y="144.5" width="4.8" height="2.3" fill="#d8d8d8" opacity="0.446"/><rect x="206.2" y="144.5" width="2.1" height="2.3" fill="#d8d8d8" opacity="0.446"/><rect x="209.5" y="144.5" width="8.1" height="2.3" fill="#d8d8d8" opacity="0.446"/><rect x="218.7" y="144.5" width="5.4" height="2.3" fill="#d8d8d8" opacity="0.446"/><rect x="225.4" y="144.5" width="2.9" height="2.3" fill="#d8d8d8" opacity="0.446"/><rect x="229.5" y="144.5" width="5.3" height="2.3" fill="#d8d8d8" opacity="0.446"/><rect x="235.9" y="144.5" width="9.8" height="2.3" fill="#d8d8d8" opacity="0.446"/><rect x="246.9" y="144.5" width="3.7" height="2.3" fill="#d8d8d8" opacity="0.446"/><rect x="251.8" y="144.5" width="4.4" height="2.3" fill="#d8d8d8" opacity="0.446"/><rect x="257.3" y="144.5" width="4.4" height="2.3" fill="#d8d8d8" opacity="0.446"/><rect x="262.9" y="144.5" width="10.6" height="2.3" fill="#d8d8d8" opacity="0.446"/><rect x="274.8" y="144.5" width="5.1" height="2.3" fill="#d8d8d8" opacity="0.446"/><rect x="281.1" y="144.5" width="3.7" height="2.3" fill="#d8d8d8" opacity="0.446"/><rect x="285.9" y="144.5" width="5.8" height="2.3" fill="#d8d8d8" opacity="0.446"/><rect x="292.9" y="144.5" width="5.8" height="2.3" fill="#d8d8d8" opacity="0.446"/><rect x="299.9" y="144.5" width="8.4" height="2.3" fill="#d8d8d8" opacity="0.446"/><rect x="65.3" y="154.5" width="5.3" height="2.3" fill="#d8d8d8" opacity="0.446"/><rect x="71.8" y="154.5" width="5.6" height="2.3" fill="#d8d8d8" opacity="0.446"/><rect x="78.6" y="154.5" width="6.1" height="2.3" fill="#d8d8d8" opacity="0.446"/><rect x="85.8" y="154.5" width="7.1" height="2.3" fill="#d8d8d8" opacity="0.446"/><rect x="94.2" y="154.5" width="10.8" height="2.3" fill="#d8d8d8" opacity="0.446"/><rect x="106.2" y="154.5" width="8.2" height="2.3" fill="#d8d8d8" opacity="0.446"/><rect x="115.6" y="154.5" width="9.3" height="2.3" fill="#d8d8d8" opacity="0.446"/><rect x="126.1" y="154.5" width="8.5" height="2.3" fill="#d8d8d8" opacity="0.446"/><rect x="135.8" y="154.5" width="9.2" height="2.3" fill="#d8d8d8" opacity="0.446"/><rect x="146.2" y="154.5" width="7.0" height="2.3" fill="#d8d8d8" opacity="0.446"/><rect x="154.4" y="154.5" width="9.7" height="2.3" fill="#d8d8d8" opacity="0.446"/><rect x="165.3" y="154.5" width="3.8" height="2.3" fill="#d8d8d8" opacity="0.446"/><rect x="170.3" y="154.5" width="9.2" height="2.3" fill="#d8d8d8" opacity="0.446"/><rect x="180.7" y="154.5" width="8.6" height="2.3" fill="#d8d8d8" opacity="0.446"/><rect x="190.5" y="154.5" width="6.3" height="2.3" fill="#d8d8d8" opacity="0.446"/><rect x="198.0" y="154.5" width="2.1" height="2.3" fill="#d8d8d8" opacity="0.446"/><rect x="201.3" y="154.5" width="5.8" height="2.3" fill="#d8d8d8" opacity="0.446"/><rect x="208.3" y="154.5" width="3.2" height="2.3" fill="#d8d8d8" opacity="0.446"/><rect x="212.7" y="154.5" width="10.0" height="2.3" fill="#d8d8d8" opacity="0.446"/><rect x="223.9" y="154.5" width="7.7" height="2.3" fill="#d8d8d8" opacity="0.446"/><rect x="232.8" y="154.5" width="6.8" height="2.3" fill="#d8d8d8" opacity="0.446"/><rect x="240.8" y="154.5" width="4.8" height="2.3" fill="#d8d8d8" opacity="0.446"/><rect x="246.9" y="154.5" width="6.4" height="2.3" fill="#d8d8d8" opacity="0.446"/><rect x="254.4" y="154.5" width="4.3" height="2.3" fill="#d8d8d8" opacity="0.446"/><rect x="259.9" y="154.5" width="9.7" height="2.3" fill="#d8d8d8" opacity="0.446"/><rect x="270.8" y="154.5" width="2.4" height="2.3" fill="#d8d8d8" opacity="0.446"/><rect x="274.5" y="154.5" width="2.9" height="2.3" fill="#d8d8d8" opacity="0.446"/><rect x="278.5" y="154.5" width="3.5" height="2.3" fill="#d8d8d8" opacity="0.446"/><rect x="283.2" y="154.5" width="3.9" height="2.3" fill="#d8d8d8" opacity="0.446"/><rect x="288.4" y="154.5" width="4.3" height="2.3" fill="#d8d8d8" opacity="0.446"/><rect x="293.8" y="154.5" width="9.6" height="2.3" fill="#d8d8d8" opacity="0.446"/><rect x="304.6" y="154.5" width="2.9" height="2.3" fill="#d8d8d8" opacity="0.446"/><rect x="308.7" y="154.5" width="8.7" height="2.3" fill="#d8d8d8" opacity="0.446"/><rect x="65.3" y="159.5" width="4.3" height="2.3" fill="#d8d8d8" opacity="0.446"/><rect x="70.8" y="159.5" width="5.2" height="2.3" fill="#d8d8d8" opacity="0.446"/><rect x="77.3" y="159.5" width="7.0" height="2.3" fill="#d8d8d8" opacity="0.446"/><rect x="85.5" y="159.5" width="9.3" height="2.3" fill="#d8d8d8" opacity="0.446"/><rect x="96.0" y="159.5" width="5.1" height="2.3" fill="#d8d8d8" opacity="0.446"/><rect x="102.3" y="159.5" width="5.7" height="2.3" fill="#d8d8d8" opacity="0.446"/><rect x="109.2" y="159.5" width="5.2" height="2.3" fill="#d8d8d8" opacity="0.446"/><rect x="115.6" y="159.5" width="8.1" height="2.3" fill="#d8d8d8" opacity="0.446"/><rect x="124.9" y="159.5" width="7.5" height="2.3" fill="#d8d8d8" opacity="0.446"/><rect x="133.5" y="159.5" width="7.2" height="2.3" fill="#d8d8d8" opacity="0.446"/><rect x="141.9" y="159.5" width="7.8" height="2.3" fill="#d8d8d8" opacity="0.446"/><rect x="151.0" y="159.5" width="6.8" height="2.3" fill="#d8d8d8" opacity="0.446"/><rect x="159.0" y="159.5" width="10.8" height="2.3" fill="#d8d8d8" opacity="0.446"/><rect x="171.0" y="159.5" width="4.6" height="2.3" fill="#d8d8d8" opacity="0.446"/><rect x="176.8" y="159.5" width="4.9" height="2.3" fill="#d8d8d8" opacity="0.446"/><rect x="182.9" y="159.5" width="4.4" height="2.3" fill="#d8d8d8" opacity="0.446"/><rect x="0.0" y="161.5" width="318.0" height="5.2" fill="#1a1a1a"/><rect x="0.0" y="161.5" width="8.0" height="5.2" fill="#2a7acc"/></g></svg>
<svg style="left:618px;top:730px;overflow:hidden" width="318" height="179" viewBox="0 0 318 179"><g filter="url(#bl)"><rect x="0.0" y="0.0" width="318.0" height="179.0" fill="#000"/><rect x="0.0" y="3.0" width="318.0" height="172.0" fill="#1a1a1a"/><rect x="0.0" y="3.0" width="318.0" height="7.0" fill="#222222"/><rect x="10.0" y="5.8" width="11.5" height="1.5" fill="#bbbbbb" opacity="0.288"/><rect x="24.5" y="5.8" width="7.9" height="1.5" fill="#bbbbbb" opacity="0.288"/><rect x="35.4" y="5.8" width="3.9" height="1.5" fill="#bbbbbb" opacity="0.288"/><rect x="42.3" y="5.8" width="9.8" height="1.5" fill="#bbbbbb" opacity="0.288"/><rect x="55.1" y="5.8" width="8.1" height="1.5" fill="#bbbbbb" opacity="0.288"/><rect x="0.0" y="10.0" width="9.0" height="160.0" fill="#1b1b1b"/><rect x="15.0" y="14.0" width="13.5" height="1.6" fill="#cccccc" opacity="0.324"/><rect x="29.8" y="14.0" width="12.6" height="1.6" fill="#cccccc" opacity="0.324"/><rect x="43.7" y="14.0" width="1.3" height="1.6" fill="#cccccc" opacity="0.324"/><rect x="14.0" y="19.5" width="13.2" height="1.2" fill="#aaaaaa" opacity="0.216"/><rect x="28.5" y="19.5" width="7.6" height="1.2" fill="#aaaaaa" opacity="0.216"/><rect x="37.5" y="19.5" width="4.5" height="1.2" fill="#aaaaaa" opacity="0.216"/><rect x="14.0" y="24.5" width="7.5" height="1.3" fill="#aaaaaa" opacity="0.252"/><rect x="24.5" y="24.5" width="13.0" height="1.3" fill="#aaaaaa" opacity="0.252"/><rect x="40.4" y="24.5" width="3.9" height="1.3" fill="#aaaaaa" opacity="0.252"/><rect x="47.3" y="24.5" width="6.8" height="1.3" fill="#aaaaaa" opacity="0.252"/><rect x="57.1" y="24.5" width="6.4" height="1.3" fill="#aaaaaa" opacity="0.252"/><rect x="66.5" y="24.5" width="10.2" height="1.3" fill="#aaaaaa" opacity="0.252"/><rect x="79.7" y="24.5" width="10.8" height="1.3" fill="#aaaaaa" opacity="0.252"/><rect x="93.5" y="24.5" width="9.7" height="1.3" fill="#aaaaaa" opacity="0.252"/><rect x="106.2" y="24.5" width="7.4" height="1.3" fill="#aaaaaa" opacity="0.252"/><rect x="116.5" y="24.5" width="12.8" height="1.3" fill="#aaaaaa" opacity="0.252"/><rect x="132.3" y="24.5" width="11.6" height="1.3" fill="#aaaaaa" opacity="0.252"/><rect x="146.9" y="24.5" width="13.3" height="1.3" fill="#aaaaaa" opacity="0.252"/><rect x="163.2" y="24.5" width="5.8" height="1.3" fill="#aaaaaa" opacity="0.252"/><text x="18" y="38.5" font-family="Liberation Sans" font-size="5.8" fill="#d8d8d8" textLength="73.7">SMS Spam Detection (100 points)</text><rect x="10.5" y="44.0" width="1.0" height="42.0" fill="#2a6fb0" opacity="0.8"/><rect x="18.0" y="47.5" width="5.6" height="2.0" fill="#d8d8d8" opacity="0.446"/><rect x="24.9" y="47.5" width="5.2" height="2.0" fill="#d8d8d8" opacity="0.446"/><rect x="31.4" y="47.5" width="3.2" height="2.0" fill="#d8d8d8" opacity="0.446"/><rect x="35.9" y="47.5" width="8.0" height="2.0" fill="#d8d8d8" opacity="0.446"/><rect x="45.1" y="47.5" width="2.9" height="2.0" fill="#d8d8d8" opacity="0.446"/><rect x="49.3" y="47.5" width="3.6" height="2.0" fill="#d8d8d8" opacity="0.446"/><rect x="54.3" y="47.5" width="3.8" height="2.0" fill="#d8d8d8" opacity="0.446"/><rect x="59.3" y="47.5" width="7.2" height="2.0" fill="#d8d8d8" opacity="0.446"/><rect x="67.8" y="47.5" width="7.2" height="2.0" fill="#d8d8d8" opacity="0.446"/><rect x="76.4" y="47.5" width="3.5" height="2.0" fill="#d8d8d8" opacity="0.446"/><rect x="81.2" y="47.5" width="4.8" height="2.0" fill="#d8d8d8" opacity="0.446"/><rect x="87.2" y="47.5" width="2.7" height="2.0" fill="#d8d8d8" opacity="0.446"/><rect x="91.2" y="47.5" width="8.6" height="2.0" fill="#d8d8d8" opacity="0.446"/><rect x="101.1" y="47.5" width="5.3" height="2.0" fill="#d8d8d8" opacity="0.446"/><rect x="107.7" y="47.5" width="2.4" height="2.0" fill="#d8d8d8" opacity="0.446"/><rect x="111.4" y="47.5" width="7.4" height="2.0" fill="#d8d8d8" opacity="0.446"/><rect x="120.0" y="47.5" width="5.7" height="2.0" fill="#d8d8d8" opacity="0.446"/><rect x="127.0" y="47.5" width="9.0" height="2.0" fill="#d8d8d8" opacity="0.446"/><rect x="137.3" y="47.5" width="2.7" height="2.0" fill="#d8d8d8" opacity="0.446"/><rect x="141.3" y="47.5" width="6.3" height="2.0" fill="#d8d8d8" opacity="0.446"/><rect x="148.9" y="47.5" width="2.6" height="2.0" fill="#d8d8d8" opacity="0.446"/><rect x="152.8" y="47.5" width="8.5" height="2.0" fill="#d8d8d8" opacity="0.446"/><rect x="162.7" y="47.5" width="4.7" height="2.0" fill="#d8d8d8" opacity="0.446"/><rect x="168.7" y="47.5" width="3.6" height="2.0" fill="#d8d8d8" opacity="0.446"/><rect x="173.6" y="47.5" width="7.2" height="2.0" fill="#d8d8d8" opacity="0.446"/><rect x="182.1" y="47.5" width="5.1" height="2.0" fill="#d8d8d8" opacity="0.446"/><rect x="188.5" y="47.5" width="2.9" height="2.0" fill="#d8d8d8" opacity="0.446"/><rect x="192.6" y="47.5" width="5.7" height="2.0" fill="#d8d8d8" opacity="0.446"/><rect x="199.6" y="47.5" width="3.2" height="2.0" fill="#d8d8d8" opacity="0.446"/><rect x="204.1" y="47.5" width="2.2" height="2.0" fill="#d8d8d8" opacity="0.446"/><rect x="207.7" y="47.5" width="4.5" height="2.0" fill="#d8d8d8" opacity="0.446"/><rect x="213.5" y="47.5" width="8.4" height="2.0" fill="#d8d8d8" opacity="0.446"/><rect x="223.2" y="47.5" width="8.0" height="2.0" fill="#d8d8d8" opacity="0.446"/><rect x="232.5" y="47.5" width="5.3" height="2.0" fill="#d8d8d8" opacity="0.446"/><rect x="239.1" y="47.5" width="8.1" height="2.0" fill="#d8d8d8" opacity="0.446"/><rect x="248.5" y="47.5" width="8.5" height="2.0" fill="#d8d8d8" opacity="0.446"/><rect x="258.3" y="47.5" width="5.8" height="2.0" fill="#d8d8d8" opacity="0.446"/><rect x="265.5" y="47.5" width="2.9" height="2.0" fill="#d8d8d8" opacity="0.446"/><rect x="269.7" y="47.5" width="8.6" height="2.0" fill="#d8d8d8" opacity="0.446"/><rect x="279.7" y="47.5" width="5.8" height="2.0" fill="#d8d8d8" opacity="0.446"/><rect x="286.7" y="47.5" width="6.1" height="2.0" fill="#d8d8d8" opacity="0.446"/><rect x="294.2" y="47.5" width="5.2" height="2.0" fill="#d8d8d8" opacity="0.446"/><rect x="300.7" y="47.5" width="2.3" height="2.0" fill="#d8d8d8" opacity="0.446"/><rect x="18.0" y="52.0" width="8.1" height="2.0" fill="#d8d8d8" opacity="0.446"/><rect x="27.4" y="52.0" width="5.0" height="2.0" fill="#d8d8d8" opacity="0.446"/><rect x="33.8" y="52.0" width="6.5" height="2.0" fill="#d8d8d8" opacity="0.446"/><rect x="41.6" y="52.0" width="5.7" height="2.0" fill="#d8d8d8" opacity="0.446"/><rect x="48.6" y="52.0" width="8.4" height="2.0" fill="#d8d8d8" opacity="0.446"/><rect x="58.3" y="52.0" width="5.4" height="2.0" fill="#d8d8d8" opacity="0.446"/><rect x="64.9" y="52.0" width="3.6" height="2.0" fill="#d8d8d8" opacity="0.446"/><rect x="69.8" y="52.0" width="2.6" height="2.0" fill="#d8d8d8" opacity="0.446"/><rect x="73.8" y="52.0" width="4.2" height="2.0" fill="#d8d8d8" opacity="0.446"/><rect x="79.2" y="52.0" width="4.9" height="2.0" fill="#d8d8d8" opacity="0.446"/><rect x="85.4" y="52.0" width="3.1" height="2.0" fill="#d8d8d8" opacity="0.446"/><rect x="89.8" y="52.0" width="2.1" height="2.0" fill="#d8d8d8" opacity="0.446"/><rect x="93.2" y="52.0" width="5.7" height="2.0" fill="#d8d8d8" opacity="0.446"/><rect x="100.1" y="52.0" width="7.3" height="2.0" fill="#d8d8d8" opacity="0.446"/><rect x="108.7" y="52.0" width="3.0" height="2.0" fill="#d8d8d8" opacity="0.446"/><rect x="113.0" y="52.0" width="4.0" height="2.0" fill="#d8d8d8" opacity="0.446"/><rect x="118.3" y="52.0" width="5.7" height="2.0" fill="#d8d8d8" opacity="0.446"/><rect x="125.3" y="52.0" width="6.8" height="2.0" fill="#d8d8d8" opacity="0.446"/><rect x="133.4" y="52.0" width="5.4" height="2.0" fill="#d8d8d8" opacity="0.446"/><rect x="140.2" y="52.0" width="7.3" height="2.0" fill="#d8d8d8" opacity="0.446"/><rect x="148.8" y="52.0" width="4.1" height="2.0" fill="#d8d8d8" opacity="0.446"/><rect x="154.2" y="52.0" width="7.4" height="2.0" fill="#d8d8d8" opacity="0.446"/><rect x="162.8" y="52.0" width="7.6" height="2.0" fill="#d8d8d8" opacity="0.446"/><rect x="171.7" y="52.0" width="6.2" height="2.0" fill="#d8d8d8" opacity="0.446"/><rect x="179.2" y="52.0" width="7.6" height="2.0" fill="#d8d8d8" opacity="0.446"/><rect x="188.1" y="52.0" width="5.8" height="2.0" fill="#d8d8d8" opacity="0.446"/><rect x="195.2" y="52.0" width="3.3" height="2.0" fill="#d8d8d8" opacity="0.446"/><rect x="199.8" y="52.0" width="8.2" height="2.0" fill="#d8d8d8" opacity="0.446"/><rect x="209.3" y="52.0" width="5.1" height="2.0" fill="#d8d8d8" opacity="0.446"/><rect x="215.7" y="52.0" width="3.7" height="2.0" fill="#d8d8d8" opacity="0.446"/><rect x="220.7" y="52.0" width="7.0" height="2.0" fill="#d8d8d8" opacity="0.446"/><rect x="229.0" y="52.0" width="6.5" height="2.0" fill="#d8d8d8" opacity="0.446"/><rect x="236.8" y="52.0" width="7.8" height="2.0" fill="#d8d8d8" opacity="0.446"/><rect x="245.9" y="52.0" width="3.5" height="2.0" fill="#d8d8d8" opacity="0.446"/><rect x="250.8" y="52.0" width="2.6" height="2.0" fill="#d8d8d8" opacity="0.446"/><rect x="254.6" y="52.0" width="6.4" height="2.0" fill="#d8d8d8" opacity="0.446"/><rect x="262.3" y="52.0" width="5.6" height="2.0" fill="#d8d8d8" opacity="0.446"/><rect x="269.2" y="52.0" width="7.6" height="2.0" fill="#d8d8d8" opacity="0.446"/><rect x="278.1" y="52.0" width="6.3" height="2.0" fill="#d8d8d8" opacity="0.446"/><rect x="285.7" y="52.0" width="6.9" height="2.0" fill="#d8d8d8" opacity="0.446"/><rect x="293.9" y="52.0" width="3.9" height="2.0" fill="#d8d8d8" opacity="0.446"/><rect x="299.1" y="52.0" width="6.5" height="2.0" fill="#d8d8d8" opacity="0.446"/><rect x="306.9" y="52.0" width="5.7" height="2.0" fill="#d8d8d8" opacity="0.446"/><rect x="18.0" y="56.5" width="3.9" height="2.0" fill="#d8d8d8" opacity="0.446"/><rect x="23.2" y="56.5" width="3.3" height="2.0" fill="#d8d8d8" opacity="0.446"/><rect x="27.8" y="56.5" width="2.5" height="2.0" fill="#d8d8d8" opacity="0.446"/><rect x="31.6" y="56.5" width="3.0" height="2.0" fill="#d8d8d8" opacity="0.446"/><rect x="35.8" y="56.5" width="2.8" height="2.0" fill="#d8d8d8" opacity="0.446"/><rect x="39.9" y="56.5" width="5.2" height="2.0" fill="#d8d8d8" opacity="0.446"/><rect x="46.4" y="56.5" width="1.6" height="2.0" fill="#d8d8d8" opacity="0.446"/><rect x="18.0" y="64.5" width="6.9" height="2.0" fill="#d8d8d8" opacity="0.446"/><rect x="26.2" y="64.5" width="5.4" height="2.0" fill="#d8d8d8" opacity="0.446"/><rect x="32.9" y="64.5" width="4.2" height="2.0" fill="#d8d8d8" opacity="0.446"/><rect x="38.5" y="64.5" width="3.1" height="2.0" fill="#d8d8d8" opacity="0.446"/><rect x="42.9" y="64.5" width="8.8" height="2.0" fill="#d8d8d8" opacity="0.446"/><rect x="52.9" y="64.5" width="2.2" height="2.0" fill="#d8d8d8" opacity="0.446"/><rect x="56.4" y="64.5" width="8.8" height="2.0" fill="#d8d8d8" opacity="0.446"/><rect x="66.5" y="64.5" width="4.0" height="2.0" fill="#d8d8d8" opacity="0.446"/><rect x="71.8" y="64.5" width="2.9" height="2.0" fill="#d8d8d8" opacity="0.446"/><rect x="76.0" y="64.5" width="5.1" height="2.0" fill="#d8d8d8" opacity="0.446"/><rect x="82.3" y="64.5" width="2.1" height="2.0" fill="#d8d8d8" opacity="0.446"/><rect x="85.7" y="64.5" width="2.6" height="2.0" fill="#d8d8d8" opacity="0.446"/><rect x="89.6" y="64.5" width="2.1" height="2.0" fill="#d8d8d8" opacity="0.446"/><rect x="93.0" y="64.5" width="3.5" height="2.0" fill="#d8d8d8" opacity="0.446"/><rect x="97.8" y="64.5" width="4.9" height="2.0" fill="#d8d8d8" opacity="0.446"/><rect x="104.1" y="64.5" width="7.5" height="2.0" fill="#d8d8d8" opacity="0.446"/><rect x="112.9" y="64.5" width="5.5" height="2.0" fill="#d8d8d8" opacity="0.446"/><rect x="119.7" y="64.5" width="4.6" height="2.0" fill="#d8d8d8" opacity="0.446"/><rect x="125.6" y="64.5" width="6.9" height="2.0" fill="#d8d8d8" opacity="0.446"/><rect x="133.7" y="64.5" width="2.2" height="2.0" fill="#d8d8d8" opacity="0.446"/><rect x="137.3" y="64.5" width="2.6" height="2.0" fill="#d8d8d8" opacity="0.446"/><rect x="141.1" y="64.5" width="7.3" height="2.0" fill="#d8d8d8" opacity="0.446"/><rect x="149.7" y="64.5" width="3.0" height="2.0" fill="#d8d8d8" opacity="0.446"/><rect x="154.0" y="64.5" width="3.9" height="2.0" fill="#d8d8d8" opacity="0.446"/><rect x="159.2" y="64.5" width="4.7" height="2.0" fill="#d8d8d8" opacity="0.446"/><rect x="165.2" y="64.5" width="5.8" height="2.0" fill="#d8d8d8" opacity="0.446"/><rect x="172.3" y="64.5" width="3.3" height="2.0" fill="#d8d8d8" opacity="0.446"/><rect x="176.9" y="64.5" width="8.3" height="2.0" fill="#d8d8d8" opacity="0.446"/><rect x="186.5" y="64.5" width="3.8" height="2.0" fill="#d8d8d8" opacity="0.446"/><rect x="191.5" y="64.5" width="4.7" height="2.0" fill="#d8d8d8" opacity="0.446"/><rect x="197.5" y="64.5" width="2.1" height="2.0" fill="#d8d8d8" opacity="0.446"/><rect x="200.9" y="64.5" width="8.8" height="2.0" fill="#d8d8d8" opacity="0.446"/><rect x="211.0" y="64.5" width="7.0" height="2.0" fill="#d8d8d8" opacity="0.446"/><rect x="219.3" y="64.5" width="4.7" height="2.0" fill="#d8d8d8" opacity="0.446"/><rect x="225.3" y="64.5" width="8.8" height="2.0" fill="#d8d8d8" opacity="0.446"/><rect x="235.4" y="64.5" width="3.7" height="2.0" fill="#d8d8d8" opacity="0.446"/><rect x="240.4" y="64.5" width="9.0" height="2.0" fill="#d8d8d8" opacity="0.446"/><rect x="250.7" y="64.5" width="3.4" height="2.0" fill="#d8d8d8" opacity="0.446"/><rect x="255.4" y="64.5" width="7.1" height="2.0" fill="#d8d8d8" opacity="0.446"/><rect x="263.8" y="64.5" width="2.7" height="2.0" fill="#d8d8d8" opacity="0.446"/><rect x="267.8" y="64.5" width="6.7" height="2.0" fill="#d8d8d8" opacity="0.446"/><rect x="275.8" y="64.5" width="3.5" height="2.0" fill="#d8d8d8" opacity="0.446"/><rect x="280.5" y="64.5" width="4.7" height="2.0" fill="#d8d8d8" opacity="0.446"/><rect x="286.6" y="64.5" width="8.7" height="2.0" fill="#d8d8d8" opacity="0.446"/><rect x="296.6" y="64.5" width="8.6" height="2.0" fill="#d8d8d8" opacity="0.446"/><rect x="306.4" y="64.5" width="3.1" height="2.0" fill="#d8d8d8" opacity="0.446"/><rect x="310.8" y="64.5" width="2.2" height="2.0" fill="#d8d8d8" opacity="0.446"/><rect x="18.0" y="69.0" width="7.2" height="2.0" fill="#d8d8d8" opacity="0.446"/><rect x="26.5" y="69.0" width="5.8" height="2.0" fill="#d8d8d8" opacity="0.446"/><rect x="33.7" y="69.0" width="2.9" height="2.0" fill="#d8d8d8" opacity="0.446"/><rect x="37.8" y="69.0" width="5.4" height="2.0" fill="#d8d8d8" opacity="0.446"/><rect x="44.5" y="69.0" width="4.1" height="2.0" fill="#d8d8d8" opacity="0.446"/><rect x="49.9" y="69.0" width="4.5" height="2.0" fill="#d8d8d8" opacity="0.446"/><rect x="55.7" y="69.0" width="2.4" height="2.0" fill="#d8d8d8" opacity="0.446"/><rect x="59.4" y="69.0" width="6.7" height="2.0" fill="#d8d8d8" opacity="0.446"/><rect x="67.3" y="69.0" width="8.8" height="2.0" fill="#d8d8d8" opacity="0.446"/><rect x="77.4" y="69.0" width="3.7" height="2.0" fill="#d8d8d8" opacity="0.446"/><rect x="82.4" y="69.0" width="5.0" height="2.0" fill="#d8d8d8" opacity="0.446"/><rect x="88.7" y="69.0" width="2.1" height="2.0" fill="#d8d8d8" opacity="0.446"/><rect x="92.1" y="69.0" width="7.6" height="2.0" fill="#d8d8d8" opacity="0.446"/><rect x="101.0" y="69.0" width="6.1" height="2.0" fill="#d8d8d8" opacity="0.446"/><rect x="108.4" y="69.0" width="4.8" height="2.0" fill="#d8d8d8" opacity="0.446"/><rect x="114.5" y="69.0" width="3.7" height="2.0" fill="#d8d8d8" opacity="0.446"/><rect x="119.5" y="69.0" width="8.8" height="2.0" fill="#d8d8d8" opacity="0.446"/><rect x="129.5" y="69.0" width="6.1" height="2.0" fill="#d8d8d8" opacity="0.446"/><rect x="136.9" y="69.0" width="6.8" height="2.0" fill="#d8d8d8" opacity="0.446"/><rect x="145.0" y="69.0" width="6.8" height="2.0" fill="#d8d8d8" opacity="0.446"/><rect x="153.2" y="69.0" width="3.1" height="2.0" fill="#d8d8d8" opacity="0.446"/><rect x="157.6" y="69.0" width="7.4" height="2.0" fill="#d8d8d8" opacity="0.446"/><rect x="166.2" y="69.0" width="3.7" height="2.0" fill="#d8d8d8" opacity="0.446"/><rect x="171.3" y="69.0" width="5.5" height="2.0" fill="#d8d8d8" opacity="0.446"/><rect x="178.1" y="69.0" width="6.8" height="2.0" fill="#d8d8d8" opacity="0.446"/><rect x="186.2" y="69.0" width="4.4" height="2.0" fill="#d8d8d8" opacity="0.446"/><rect x="191.9" y="69.0" width="8.8" height="2.0" fill="#d8d8d8" opacity="0.446"/><rect x="201.9" y="69.0" width="7.3" height="2.0" fill="#d8d8d8" opacity="0.446"/><rect x="210.6" y="69.0" width="2.4" height="2.0" fill="#d8d8d8" opacity="0.446"/><rect x="214.3" y="69.0" width="4.5" height="2.0" fill="#d8d8d8" opacity="0.446"/><rect x="220.1" y="69.0" width="3.1" height="2.0" fill="#d8d8d8" opacity="0.446"/><rect x="224.5" y="69.0" width="5.8" height="2.0" fill="#d8d8d8" opacity="0.446"/><rect x="231.5" y="69.0" width="2.8" height="2.0" fill="#d8d8d8" opacity="0.446"/><rect x="235.6" y="69.0" width="5.4" height="2.0" fill="#d8d8d8" opacity="0.446"/><rect x="242.3" y="69.0" width="4.2" height="2.0" fill="#d8d8d8" opacity="0.446"/><rect x="247.8" y="69.0" width="5.9" height="2.0" fill="#d8d8d8" opacity="0.446"/><rect x="255.0" y="69.0" width="6.5" height="2.0" fill="#d8d8d8" opacity="0.446"/><rect x="262.8" y="69.0" width="4.4" height="2.0" fill="#d8d8d8" opacity="0.446"/><rect x="268.5" y="69.0" width="8.2" height="2.0" fill="#d8d8d8" opacity="0.446"/><rect x="278.1" y="69.0" width="7.1" height="2.0" fill="#d8d8d8" opacity="0.446"/><rect x="286.5" y="69.0" width="2.1" height="2.0" fill="#d8d8d8" opacity="0.446"/><rect x="290.0" y="69.0" width="4.6" height="2.0" fill="#d8d8d8" opacity="0.446"/><rect x="295.9" y="69.0" width="7.1" height="2.0" fill="#d8d8d8" opacity="0.446"/><rect x="18.0" y="77.0" width="3.8" height="2.0" fill="#d8d8d8" opacity="0.446"/><rect x="23.1" y="77.0" width="2.3" height="2.0" fill="#d8d8d8" opacity="0.446"/><rect x="26.6" y="77.0" width="6.9" height="2.0" fill="#d8d8d8" opacity="0.446"/><rect x="34.9" y="77.0" width="5.9" height="2.0" fill="#d8d8d8" opacity="0.446"/><rect x="42.1" y="77.0" width="5.8" height="2.0" fill="#d8d8d8" opacity="0.446"/><rect x="49.2" y="77.0" width="5.4" height="2.0" fill="#d8d8d8" opacity="0.446"/><rect x="55.9" y="77.0" width="6.0" height="2.0" fill="#d8d8d8" opacity="0.446"/><rect x="63.2" y="77.0" width="5.8" height="2.0" fill="#d8d8d8" opacity="0.446"/><rect x="70.3" y="77.0" width="4.3" height="2.0" fill="#d8d8d8" opacity="0.446"/><rect x="75.9" y="77.0" width="5.3" height="2.0" fill="#d8d8d8" opacity="0.446"/><rect x="82.4" y="77.0" width="8.1" height="2.0" fill="#d8d8d8" opacity="0.446"/><rect x="91.8" y="77.0" width="6.2" height="2.0" fill="#d8d8d8" opacity="0.446"/><rect x="99.3" y="77.0" width="8.0" height="2.0" fill="#d8d8d8" opacity="0.446"/><rect x="108.6" y="77.0" width="3.1" height="2.0" fill="#d8d8d8" opacity="0.446"/><rect x="113.0" y="77.0" width="5.7" height="2.0" fill="#d8d8d8" opacity="0.446"/><rect x="120.1" y="77.0" width="5.1" height="2.0" fill="#d8d8d8" opacity="0.446"/><rect x="126.5" y="77.0" width="7.7" height="2.0" fill="#d8d8d8" opacity="0.446"/><rect x="135.5" y="77.0" width="5.8" height="2.0" fill="#d8d8d8" opacity="0.446"/><rect x="142.6" y="77.0" width="5.2" height="2.0" fill="#d8d8d8" opacity="0.446"/><rect x="149.1" y="77.0" width="7.4" height="2.0" fill="#d8d8d8" opacity="0.446"/><rect x="157.8" y="77.0" width="5.5" height="2.0" fill="#d8d8d8" opacity="0.446"/><rect x="164.7" y="77.0" width="7.1" height="2.0" fill="#d8d8d8" opacity="0.446"/><rect x="173.1" y="77.0" width="8.2" height="2.0" fill="#d8d8d8" opacity="0.446"/><rect x="182.6" y="77.0" width="6.3" height="2.0" fill="#d8d8d8" opacity="0.446"/><rect x="190.2" y="77.0" width="4.5" height="2.0" fill="#d8d8d8" opacity="0.446"/><rect x="196.1" y="77.0" width="6.3" height="2.0" fill="#d8d8d8" opacity="0.446"/><rect x="203.7" y="77.0" width="4.2" height="2.0" fill="#d8d8d8" opacity="0.446"/><rect x="209.3" y="77.0" width="2.4" height="2.0" fill="#d8d8d8" opacity="0.446"/><rect x="213.0" y="77.0" width="8.8" height="2.0" fill="#d8d8d8" opacity="0.446"/><rect x="223.1" y="77.0" width="7.7" height="2.0" fill="#d8d8d8" opacity="0.446"/><rect x="232.1" y="77.0" width="3.3" height="2.0" fill="#d8d8d8" opacity="0.446"/><rect x="236.8" y="77.0" width="6.8" height="2.0" fill="#d8d8d8" opacity="0.446"/><rect x="244.8" y="77.0" width="7.4" height="2.0" fill="#d8d8d8" opacity="0.446"/><rect x="253.5" y="77.0" width="3.1" height="2.0" fill="#d8d8d8" opacity="0.446"/><rect x="257.9" y="77.0" width="4.0" height="2.0" fill="#d8d8d8" opacity="0.446"/><rect x="263.2" y="77.0" width="4.9" height="2.0" fill="#d8d8d8" opacity="0.446"/><rect x="269.3" y="77.0" width="4.3" height="2.0" fill="#d8d8d8" opacity="0.446"/><rect x="274.9" y="77.0" width="2.7" height="2.0" fill="#d8d8d8" opacity="0.446"/><rect x="278.9" y="77.0" width="6.6" height="2.0" fill="#d8d8d8" opacity="0.446"/><rect x="286.8" y="77.0" width="2.3" height="2.0" fill="#d8d8d8" opacity="0.446"/><rect x="290.4" y="77.0" width="8.6" height="2.0" fill="#d8d8d8" opacity="0.446"/><rect x="300.2" y="77.0" width="3.3" height="2.0" fill="#d8d8d8" opacity="0.446"/><rect x="304.8" y="77.0" width="2.2" height="2.0" fill="#d8d8d8" opacity="0.446"/><rect x="308.3" y="77.0" width="2.7" height="2.0" fill="#d8d8d8" opacity="0.446"/><rect x="312.4" y="77.0" width="3.3" height="2.0" fill="#d8d8d8" opacity="0.446"/><rect x="18.0" y="84.5" width="2.2" height="2.0" fill="#d8d8d8" opacity="0.446"/><rect x="21.5" y="84.5" width="6.5" height="2.0" fill="#d8d8d8" opacity="0.446"/><rect x="29.3" y="84.5" width="4.7" height="2.0" fill="#d8d8d8" opacity="0.446"/><rect x="35.3" y="84.5" width="5.4" height="2.0" fill="#d8d8d8" opacity="0.446"/><rect x="42.1" y="84.5" width="6.4" height="2.0" fill="#d8d8d8" opacity="0.446"/><rect x="49.7" y="84.5" width="6.1" height="2.0" fill="#d8d8d8" opacity="0.446"/><rect x="57.2" y="84.5" width="2.3" height="2.0" fill="#d8d8d8" opacity="0.446"/><rect x="60.8" y="84.5" width="3.5" height="2.0" fill="#d8d8d8" opacity="0.446"/><rect x="65.7" y="84.5" width="7.0" height="2.0" fill="#d8d8d8" opacity="0.446"/><rect x="74.0" y="84.5" width="2.1" height="2.0" fill="#d8d8d8" opacity="0.446"/><rect x="77.4" y="84.5" width="8.4" height="2.0" fill="#d8d8d8" opacity="0.446"/><rect x="87.1" y="84.5" width="6.6" height="2.0" fill="#d8d8d8" opacity="0.446"/><rect x="95.0" y="84.5" width="8.5" height="2.0" fill="#d8d8d8" opacity="0.446"/><rect x="104.8" y="84.5" width="7.8" height="2.0" fill="#d8d8d8" opacity="0.446"/><rect x="113.9" y="84.5" width="5.3" height="2.0" fill="#d8d8d8" opacity="0.446"/><rect x="120.5" y="84.5" width="6.5" height="2.0" fill="#d8d8d8" opacity="0.446"/><rect x="128.3" y="84.5" width="4.5" height="2.0" fill="#d8d8d8" opacity="0.446"/><rect x="134.1" y="84.5" width="7.2" height="2.0" fill="#d8d8d8" opacity="0.446"/><rect x="142.6" y="84.5" width="8.2" height="2.0" fill="#d8d8d8" opacity="0.446"/><rect x="152.1" y="84.5" width="7.8" height="2.0" fill="#d8d8d8" opacity="0.446"/><rect x="161.2" y="84.5" width="7.6" height="2.0" fill="#d8d8d8" opacity="0.446"/><rect x="170.1" y="84.5" width="2.4" height="2.0" fill="#d8d8d8" opacity="0.446"/><rect x="173.8" y="84.5" width="6.3" height="2.0" fill="#d8d8d8" opacity="0.446"/><rect x="181.4" y="84.5" width="5.7" height="2.0" fill="#d8d8d8" opacity="0.446"/><rect x="188.4" y="84.5" width="7.1" height="2.0" fill="#d8d8d8" opacity="0.446"/><rect x="196.8" y="84.5" width="7.8" height="2.0" fill="#d8d8d8" opacity="0.446"/><rect x="206.0" y="84.5" width="2.5" height="2.0" fill="#d8d8d8" opacity="0.446"/><rect x="209.8" y="84.5" width="3.5" height="2.0" fill="#d8d8d8" opacity="0.446"/><rect x="214.6" y="84.5" width="5.6" height="2.0" fill="#d8d8d8" opacity="0.446"/><rect x="221.6" y="84.5" width="2.7" height="2.0" fill="#d8d8d8" opacity="0.446"/><rect x="225.6" y="84.5" width="3.6" height="2.0" fill="#d8d8d8" opacity="0.446"/><rect x="230.5" y="84.5" width="4.7" height="2.0" fill="#d8d8d8" opacity="0.446"/><rect x="18.0" y="95.0" width="5.1" height="2.0" fill="#dddddd" opacity="0.432"/><rect x="24.1" y="95.0" width="10.2" height="2.0" fill="#dddddd" opacity="0.432"/><rect x="35.3" y="95.0" width="9.3" height="2.0" fill="#dddddd" opacity="0.432"/><rect x="45.6" y="95.0" width="8.4" height="2.0" fill="#dddddd" opacity="0.432"/><rect x="26.0" y="103.0" width="9.1" height="1.5" fill="#cccccc" opacity="0.324"/><rect x="36.4" y="103.0" width="9.1" height="1.5" fill="#cccccc" opacity="0.324"/><rect x="46.9" y="103.0" width="11.2" height="1.5" fill="#cccccc" opacity="0.324"/><rect x="59.4" y="103.0" width="8.6" height="1.5" fill="#cccccc" opacity="0.324"/><rect x="70.0" y="103.0" width="92.0" height="1.5" fill="#4a8ad8" opacity="0.6"/><rect x="16.0" y="110.0" width="302.0" height="60.0" fill="#171717"/><rect x="32.0" y="115.0" width="9.4" height="2.1" fill="#c586c0" opacity="0.446"/><rect x="43.2" y="115.0" width="5.7" height="2.1" fill="#9cdcfe" opacity="0.446"/><rect x="51.5" y="115.0" width="12.9" height="2.1" fill="#569cd6" opacity="0.446"/><rect x="67.8" y="115.0" width="9.6" height="2.1" fill="#d4d4d4" opacity="0.446"/><rect x="80.8" y="115.0" width="11.3" height="2.1" fill="#d4d4d4" opacity="0.446"/><rect x="95.2" y="115.0" width="7.8" height="2.1" fill="#9cdcfe" opacity="0.446"/><rect x="26.0" y="118.8" width="6.2" height="2.1" fill="#569cd6" opacity="0.446"/><rect x="35.6" y="118.8" width="6.8" height="2.1" fill="#9cdcfe" opacity="0.446"/><rect x="44.8" y="118.8" width="9.0" height="2.1" fill="#c586c0" opacity="0.446"/><rect x="57.2" y="118.8" width="11.9" height="2.1" fill="#569cd6" opacity="0.446"/><rect x="70.9" y="118.8" width="14.8" height="2.1" fill="#c586c0" opacity="0.446"/><rect x="26.0" y="122.6" width="15.3" height="2.1" fill="#d4d4d4" opacity="0.446"/><rect x="38.0" y="126.4" width="5.3" height="2.1" fill="#c586c0" opacity="0.446"/><rect x="45.7" y="126.4" width="5.3" height="2.1" fill="#d4d4d4" opacity="0.446"/><rect x="53.3" y="126.4" width="11.7" height="2.1" fill="#4ec9b0" opacity="0.446"/><rect x="67.1" y="126.4" width="7.5" height="2.1" fill="#569cd6" opacity="0.446"/><rect x="76.9" y="126.4" width="16.8" height="2.1" fill="#c586c0" opacity="0.446"/><rect x="96.6" y="126.4" width="14.9" height="2.1" fill="#4ec9b0" opacity="0.446"/><rect x="114.0" y="126.4" width="13.1" height="2.1" fill="#569cd6" opacity="0.446"/><rect x="26.0" y="134.0" width="11.6" height="2.1" fill="#c586c0" opacity="0.446"/><rect x="40.7" y="134.0" width="16.8" height="2.1" fill="#d4d4d4" opacity="0.446"/><rect x="59.7" y="134.0" width="15.3" height="2.1" fill="#9cdcfe" opacity="0.446"/><rect x="78.3" y="134.0" width="4.8" height="2.1" fill="#4ec9b0" opacity="0.446"/><rect x="86.1" y="134.0" width="13.1" height="2.1" fill="#c586c0" opacity="0.446"/><rect x="26.0" y="137.8" width="3.6" height="2.1" fill="#569cd6" opacity="0.446"/><rect x="32.2" y="137.8" width="7.9" height="2.1" fill="#4ec9b0" opacity="0.446"/><rect x="42.0" y="137.8" width="13.1" height="2.1" fill="#9cdcfe" opacity="0.446"/><rect x="58.5" y="137.8" width="6.4" height="2.1" fill="#569cd6" opacity="0.446"/><rect x="26.0" y="141.6" width="5.2" height="2.1" fill="#d4d4d4" opacity="0.446"/><rect x="32.9" y="141.6" width="11.6" height="2.1" fill="#c586c0" opacity="0.446"/><rect x="47.1" y="141.6" width="6.9" height="2.1" fill="#9cdcfe" opacity="0.446"/><rect x="56.5" y="141.6" width="14.6" height="2.1" fill="#4ec9b0" opacity="0.446"/><rect x="74.1" y="141.6" width="10.2" height="2.1" fill="#4ec9b0" opacity="0.446"/><rect x="86.8" y="141.6" width="12.8" height="2.1" fill="#4ec9b0" opacity="0.446"/><rect x="102.2" y="141.6" width="1.5" height="2.1" fill="#569cd6" opacity="0.446"/><rect x="26.0" y="149.2" width="11.6" height="2.1" fill="#c586c0" opacity="0.446"/><rect x="40.5" y="149.2" width="9.4" height="2.1" fill="#d4d4d4" opacity="0.446"/><rect x="51.7" y="149.2" width="8.2" height="2.1" fill="#c586c0" opacity="0.446"/><rect x="62.9" y="149.2" width="5.5" height="2.1" fill="#d4d4d4" opacity="0.446"/><rect x="71.2" y="149.2" width="17.9" height="2.1" fill="#9cdcfe" opacity="0.446"/><rect x="91.8" y="149.2" width="3.7" height="2.1" fill="#4ec9b0" opacity="0.446"/><rect x="26.0" y="153.0" width="3.8" height="2.1" fill="#569cd6" opacity="0.446"/><rect x="33.2" y="153.0" width="16.0" height="2.1" fill="#d4d4d4" opacity="0.446"/><rect x="26.0" y="156.8" width="10.1" height="2.1" fill="#d4d4d4" opacity="0.446"/><rect x="38.0" y="156.8" width="11.1" height="2.1" fill="#4ec9b0" opacity="0.446"/><rect x="51.6" y="156.8" width="13.2" height="2.1" fill="#569cd6" opacity="0.446"/><rect x="26.0" y="160.6" width="13.0" height="2.1" fill="#9cdcfe" opacity="0.446"/><rect x="41.7" y="160.6" width="13.0" height="2.1" fill="#c586c0" opacity="0.446"/><rect x="56.7" y="160.6" width="3.9" height="2.1" fill="#4ec9b0" opacity="0.446"/><rect x="63.6" y="160.6" width="12.3" height="2.1" fill="#c586c0" opacity="0.446"/><rect x="78.3" y="160.6" width="17.2" height="2.1" fill="#c586c0" opacity="0.446"/><rect x="26.0" y="164.4" width="3.3" height="2.1" fill="#9cdcfe" opacity="0.446"/><rect x="31.2" y="164.4" width="8.7" height="2.1" fill="#c586c0" opacity="0.446"/><rect x="43.3" y="164.4" width="10.3" height="2.1" fill="#569cd6" opacity="0.446"/><rect x="56.1" y="164.4" width="5.8" height="2.1" fill="#569cd6" opacity="0.446"/><rect x="65.3" y="164.4" width="11.4" height="2.1" fill="#c586c0" opacity="0.446"/><rect x="78.3" y="164.4" width="16.8" height="2.1" fill="#d4d4d4" opacity="0.446"/><rect x="97.3" y="164.4" width="8.9" height="2.1" fill="#4ec9b0" opacity="0.446"/><rect x="107.8" y="164.4" width="2.3" height="2.1" fill="#d4d4d4" opacity="0.446"/><rect x="0.0" y="170.0" width="318.0" height="5.2" fill="#1f70a8"/><rect x="0.0" y="170.0" width="6.0" height="5.2" fill="#3aa860"/></g></svg>
<svg style="left:954px;top:730px;overflow:hidden" width="318" height="179" viewBox="0 0 318 179"><g filter="url(#bl)"><rect x="0.0" y="0.0" width="318.0" height="179.0" fill="#000"/><rect x="0.0" y="11.6" width="318.0" height="155.4" fill="#191919"/><text x="4" y="19.6" font-family="Liberation Sans" font-size="4.6" fill="#dcdcdc" textLength="53">Assignmnet 2 (100 points)</text><rect x="4.0" y="24.5" width="4.4" height="1.6" fill="#e0e0e0" opacity="0.576"/><rect x="9.2" y="24.5" width="8.9" height="1.6" fill="#e0e0e0" opacity="0.576"/><rect x="18.9" y="24.5" width="6.0" height="1.6" fill="#e0e0e0" opacity="0.576"/><rect x="4.0" y="27.3" width="6.8" height="1.6" fill="#e0e0e0" opacity="0.576"/><rect x="11.6" y="27.3" width="8.3" height="1.6" fill="#e0e0e0" opacity="0.576"/><rect x="20.6" y="27.3" width="4.4" height="1.6" fill="#e0e0e0" opacity="0.576"/><rect x="4.0" y="30.1" width="7.9" height="1.6" fill="#e0e0e0" opacity="0.576"/><rect x="4.0" y="32.9" width="3.2" height="1.6" fill="#e0e0e0" opacity="0.576"/><rect x="8.0" y="32.9" width="6.3" height="1.6" fill="#e0e0e0" opacity="0.576"/><rect x="15.1" y="32.9" width="4.7" height="1.6" fill="#e0e0e0" opacity="0.576"/><rect x="20.6" y="32.9" width="3.9" height="1.6" fill="#e0e0e0" opacity="0.576"/><rect x="4.0" y="40.5" width="10.2" height="1.6" fill="#cccccc" opacity="0.324"/><rect x="15.5" y="40.5" width="4.0" height="1.6" fill="#cccccc" opacity="0.324"/><rect x="20.8" y="40.5" width="7.2" height="1.6" fill="#cccccc" opacity="0.324"/><rect x="29.3" y="40.5" width="13.6" height="1.6" fill="#cccccc" opacity="0.324"/><rect x="44.2" y="40.5" width="3.8" height="1.6" fill="#cccccc" opacity="0.324"/><rect x="4.0" y="48.0" width="6.4" height="1.2" fill="#cccccc" opacity="0.274"/><rect x="11.7" y="48.0" width="3.6" height="1.2" fill="#cccccc" opacity="0.274"/><rect x="16.6" y="48.0" width="3.7" height="1.2" fill="#cccccc" opacity="0.274"/><rect x="21.6" y="48.0" width="3.1" height="1.2" fill="#cccccc" opacity="0.274"/><rect x="25.9" y="48.0" width="8.8" height="1.2" fill="#cccccc" opacity="0.274"/><rect x="36.0" y="48.0" width="8.4" height="1.2" fill="#cccccc" opacity="0.274"/><rect x="45.7" y="48.0" width="4.3" height="1.2" fill="#cccccc" opacity="0.274"/><rect x="51.3" y="48.0" width="5.8" height="1.2" fill="#cccccc" opacity="0.274"/><rect x="58.4" y="48.0" width="3.4" height="1.2" fill="#cccccc" opacity="0.274"/><rect x="63.1" y="48.0" width="3.0" height="1.2" fill="#cccccc" opacity="0.274"/><rect x="67.4" y="48.0" width="5.8" height="1.2" fill="#cccccc" opacity="0.274"/><rect x="74.5" y="48.0" width="7.6" height="1.2" fill="#cccccc" opacity="0.274"/><rect x="83.4" y="48.0" width="8.0" height="1.2" fill="#cccccc" opacity="0.274"/><rect x="92.7" y="48.0" width="4.2" height="1.2" fill="#cccccc" opacity="0.274"/><rect x="98.2" y="48.0" width="6.9" height="1.2" fill="#cccccc" opacity="0.274"/><rect x="106.4" y="48.0" width="5.7" height="1.2" fill="#cccccc" opacity="0.274"/><rect x="113.4" y="48.0" width="2.9" height="1.2" fill="#cccccc" opacity="0.274"/><rect x="117.6" y="48.0" width="9.0" height="1.2" fill="#cccccc" opacity="0.274"/><rect x="127.9" y="48.0" width="8.8" height="1.2" fill="#cccccc" opacity="0.274"/><rect x="138.0" y="48.0" width="3.0" height="1.2" fill="#cccccc" opacity="0.274"/><rect x="142.4" y="48.0" width="8.5" height="1.2" fill="#cccccc" opacity="0.274"/><rect x="152.2" y="48.0" width="8.4" height="1.2" fill="#cccccc" opacity="0.274"/><rect x="161.9" y="48.0" width="4.2" height="1.2" fill="#cccccc" opacity="0.274"/><rect x="167.4" y="48.0" width="5.9" height="1.2" fill="#cccccc" opacity="0.274"/><rect x="174.6" y="48.0" width="8.6" height="1.2" fill="#cccccc" opacity="0.274"/><rect x="184.6" y="48.0" width="2.8" height="1.2" fill="#cccccc" opacity="0.274"/><rect x="188.7" y="48.0" width="4.2" height="1.2" fill="#cccccc" opacity="0.274"/><rect x="194.2" y="48.0" width="8.2" height="1.2" fill="#cccccc" opacity="0.274"/><rect x="203.7" y="48.0" width="7.1" height="1.2" fill="#cccccc" opacity="0.274"/><rect x="212.1" y="48.0" width="7.4" height="1.2" fill="#cccccc" opacity="0.274"/><rect x="220.7" y="48.0" width="8.2" height="1.2" fill="#cccccc" opacity="0.274"/><rect x="230.2" y="48.0" width="4.9" height="1.2" fill="#cccccc" opacity="0.274"/><rect x="236.4" y="48.0" width="4.9" height="1.2" fill="#cccccc" opacity="0.274"/><rect x="242.6" y="48.0" width="5.1" height="1.2" fill="#cccccc" opacity="0.274"/><rect x="249.0" y="48.0" width="8.5" height="1.2" fill="#cccccc" opacity="0.274"/><rect x="258.8" y="48.0" width="8.3" height="1.2" fill="#cccccc" opacity="0.274"/><rect x="268.4" y="48.0" width="8.5" height="1.2" fill="#cccccc" opacity="0.274"/><rect x="278.2" y="48.0" width="3.9" height="1.2" fill="#cccccc" opacity="0.274"/><rect x="283.4" y="48.0" width="7.5" height="1.2" fill="#cccccc" opacity="0.274"/><rect x="292.2" y="48.0" width="2.7" height="1.2" fill="#cccccc" opacity="0.274"/><rect x="296.2" y="48.0" width="3.3" height="1.2" fill="#cccccc" opacity="0.274"/><rect x="300.8" y="48.0" width="7.3" height="1.2" fill="#cccccc" opacity="0.274"/><rect x="4.0" y="51.0" width="6.3" height="1.2" fill="#cccccc" opacity="0.274"/><rect x="11.6" y="51.0" width="3.9" height="1.2" fill="#cccccc" opacity="0.274"/><rect x="16.8" y="51.0" width="6.0" height="1.2" fill="#cccccc" opacity="0.274"/><rect x="24.0" y="51.0" width="3.6" height="1.2" fill="#cccccc" opacity="0.274"/><rect x="28.9" y="51.0" width="3.6" height="1.2" fill="#cccccc" opacity="0.274"/><rect x="33.9" y="51.0" width="6.8" height="1.2" fill="#cccccc" opacity="0.274"/><rect x="42.0" y="51.0" width="4.5" height="1.2" fill="#cccccc" opacity="0.274"/><rect x="47.8" y="51.0" width="4.2" height="1.2" fill="#cccccc" opacity="0.274"/><rect x="4.0" y="55.5" width="5.3" height="1.2" fill="#cccccc" opacity="0.274"/><rect x="10.6" y="55.5" width="5.5" height="1.2" fill="#cccccc" opacity="0.274"/><rect x="17.5" y="55.5" width="6.2" height="1.2" fill="#cccccc" opacity="0.274"/><rect x="25.0" y="55.5" width="7.0" height="1.2" fill="#cccccc" opacity="0.274"/><rect x="33.3" y="55.5" width="4.6" height="1.2" fill="#cccccc" opacity="0.274"/><rect x="39.2" y="55.5" width="8.0" height="1.2" fill="#cccccc" opacity="0.274"/><rect x="48.5" y="55.5" width="5.4" height="1.2" fill="#cccccc" opacity="0.274"/><rect x="55.2" y="55.5" width="3.0" height="1.2" fill="#cccccc" opacity="0.274"/><rect x="59.5" y="55.5" width="3.4" height="1.2" fill="#cccccc" opacity="0.274"/><rect x="64.1" y="55.5" width="2.2" height="1.2" fill="#cccccc" opacity="0.274"/><rect x="67.6" y="55.5" width="7.4" height="1.2" fill="#cccccc" opacity="0.274"/><rect x="76.3" y="55.5" width="2.1" height="1.2" fill="#cccccc" opacity="0.274"/><rect x="79.7" y="55.5" width="3.9" height="1.2" fill="#cccccc" opacity="0.274"/><rect x="84.9" y="55.5" width="4.9" height="1.2" fill="#cccccc" opacity="0.274"/><rect x="91.1" y="55.5" width="7.2" height="1.2" fill="#cccccc" opacity="0.274"/><rect x="99.6" y="55.5" width="8.9" height="1.2" fill="#cccccc" opacity="0.274"/><rect x="109.8" y="55.5" width="7.3" height="1.2" fill="#cccccc" opacity="0.274"/><rect x="118.4" y="55.5" width="2.5" height="1.2" fill="#cccccc" opacity="0.274"/><rect x="122.2" y="55.5" width="8.5" height="1.2" fill="#cccccc" opacity="0.274"/><rect x="131.9" y="55.5" width="8.9" height="1.2" fill="#cccccc" opacity="0.274"/><rect x="142.1" y="55.5" width="8.1" height="1.2" fill="#cccccc" opacity="0.274"/><rect x="151.5" y="55.5" width="5.4" height="1.2" fill="#cccccc" opacity="0.274"/><rect x="158.2" y="55.5" width="4.3" height="1.2" fill="#cccccc" opacity="0.274"/><rect x="163.8" y="55.5" width="5.2" height="1.2" fill="#cccccc" opacity="0.274"/><rect x="170.3" y="55.5" width="3.7" height="1.2" fill="#cccccc" opacity="0.274"/><rect x="175.3" y="55.5" width="4.8" height="1.2" fill="#cccccc" opacity="0.274"/><rect x="181.5" y="55.5" width="2.3" height="1.2" fill="#cccccc" opacity="0.274"/><rect x="185.1" y="55.5" width="7.1" height="1.2" fill="#cccccc" opacity="0.274"/><rect x="193.5" y="55.5" width="4.7" height="1.2" fill="#cccccc" opacity="0.274"/><rect x="199.5" y="55.5" width="4.2" height="1.2" fill="#cccccc" opacity="0.274"/><rect x="205.0" y="55.5" width="6.3" height="1.2" fill="#cccccc" opacity="0.274"/><rect x="212.6" y="55.5" width="7.2" height="1.2" fill="#cccccc" opacity="0.274"/><rect x="221.1" y="55.5" width="6.2" height="1.2" fill="#cccccc" opacity="0.274"/><rect x="228.5" y="55.5" width="5.7" height="1.2" fill="#cccccc" opacity="0.274"/><rect x="235.5" y="55.5" width="8.1" height="1.2" fill="#cccccc" opacity="0.274"/><rect x="244.9" y="55.5" width="7.5" height="1.2" fill="#cccccc" opacity="0.274"/><rect x="253.7" y="55.5" width="5.6" height="1.2" fill="#cccccc" opacity="0.274"/><rect x="260.7" y="55.5" width="5.2" height="1.2" fill="#cccccc" opacity="0.274"/><rect x="267.1" y="55.5" width="7.8" height="1.2" fill="#cccccc" opacity="0.274"/><rect x="276.2" y="55.5" width="2.3" height="1.2" fill="#cccccc" opacity="0.274"/><rect x="279.8" y="55.5" width="9.0" height="1.2" fill="#cccccc" opacity="0.274"/><rect x="290.1" y="55.5" width="5.6" height="1.2" fill="#cccccc" opacity="0.274"/><rect x="297.0" y="55.5" width="4.8" height="1.2" fill="#cccccc" opacity="0.274"/><rect x="303.1" y="55.5" width="7.1" height="1.2" fill="#cccccc" opacity="0.274"/><rect x="311.5" y="55.5" width="5.9" height="1.2" fill="#cccccc" opacity="0.274"/><rect x="4.0" y="58.5" width="5.6" height="1.2" fill="#cccccc" opacity="0.274"/><rect x="10.9" y="58.5" width="6.4" height="1.2" fill="#cccccc" opacity="0.274"/><rect x="18.6" y="58.5" width="2.3" height="1.2" fill="#cccccc" opacity="0.274"/><rect x="22.3" y="58.5" width="4.0" height="1.2" fill="#cccccc" opacity="0.274"/><rect x="27.6" y="58.5" width="4.4" height="1.2" fill="#cccccc" opacity="0.274"/><rect x="4.0" y="63.0" width="4.1" height="1.2" fill="#cccccc" opacity="0.274"/><rect x="9.4" y="63.0" width="7.8" height="1.2" fill="#cccccc" opacity="0.274"/><rect x="18.5" y="63.0" width="5.2" height="1.2" fill="#cccccc" opacity="0.274"/><rect x="25.1" y="63.0" width="5.0" height="1.2" fill="#cccccc" opacity="0.274"/><rect x="31.3" y="63.0" width="6.3" height="1.2" fill="#cccccc" opacity="0.274"/><rect x="38.9" y="63.0" width="2.4" height="1.2" fill="#cccccc" opacity="0.274"/><rect x="42.6" y="63.0" width="5.6" height="1.2" fill="#cccccc" opacity="0.274"/><rect x="49.5" y="63.0" width="3.0" height="1.2" fill="#cccccc" opacity="0.274"/><rect x="53.8" y="63.0" width="7.8" height="1.2" fill="#cccccc" opacity="0.274"/><rect x="62.9" y="63.0" width="5.2" height="1.2" fill="#cccccc" opacity="0.274"/><rect x="69.4" y="63.0" width="7.1" height="1.2" fill="#cccccc" opacity="0.274"/><rect x="77.7" y="63.0" width="2.8" height="1.2" fill="#cccccc" opacity="0.274"/><rect x="81.8" y="63.0" width="7.5" height="1.2" fill="#cccccc" opacity="0.274"/><rect x="90.6" y="63.0" width="8.6" height="1.2" fill="#cccccc" opacity="0.274"/><rect x="100.4" y="63.0" width="6.9" height="1.2" fill="#cccccc" opacity="0.274"/><rect x="108.6" y="63.0" width="2.9" height="1.2" fill="#cccccc" opacity="0.274"/><rect x="112.9" y="63.0" width="4.9" height="1.2" fill="#cccccc" opacity="0.274"/><rect x="119.1" y="63.0" width="5.2" height="1.2" fill="#cccccc" opacity="0.274"/><rect x="125.5" y="63.0" width="3.3" height="1.2" fill="#cccccc" opacity="0.274"/><rect x="130.1" y="63.0" width="6.1" height="1.2" fill="#cccccc" opacity="0.274"/><rect x="137.5" y="63.0" width="7.0" height="1.2" fill="#cccccc" opacity="0.274"/><rect x="145.8" y="63.0" width="3.4" height="1.2" fill="#cccccc" opacity="0.274"/><rect x="150.5" y="63.0" width="5.2" height="1.2" fill="#cccccc" opacity="0.274"/><rect x="157.0" y="63.0" width="3.8" height="1.2" fill="#cccccc" opacity="0.274"/><rect x="162.0" y="63.0" width="6.8" height="1.2" fill="#cccccc" opacity="0.274"/><rect x="170.2" y="63.0" width="8.4" height="1.2" fill="#cccccc" opacity="0.274"/><rect x="4.0" y="67.5" width="7.6" height="1.2" fill="#cccccc" opacity="0.274"/><rect x="12.9" y="67.5" width="7.0" height="1.2" fill="#cccccc" opacity="0.274"/><rect x="21.2" y="67.5" width="2.9" height="1.2" fill="#cccccc" opacity="0.274"/><rect x="25.4" y="67.5" width="2.8" height="1.2" fill="#cccccc" opacity="0.274"/><rect x="29.5" y="67.5" width="5.1" height="1.2" fill="#cccccc" opacity="0.274"/><rect x="35.9" y="67.5" width="4.5" height="1.2" fill="#cccccc" opacity="0.274"/><rect x="41.8" y="67.5" width="5.7" height="1.2" fill="#cccccc" opacity="0.274"/><rect x="48.7" y="67.5" width="4.7" height="1.2" fill="#cccccc" opacity="0.274"/><rect x="54.7" y="67.5" width="7.5" height="1.2" fill="#cccccc" opacity="0.274"/><rect x="63.5" y="67.5" width="5.6" height="1.2" fill="#cccccc" opacity="0.274"/><rect x="70.4" y="67.5" width="8.6" height="1.2" fill="#cccccc" opacity="0.274"/><rect x="80.4" y="67.5" width="4.7" height="1.2" fill="#cccccc" opacity="0.274"/><rect x="86.3" y="67.5" width="4.7" height="1.2" fill="#cccccc" opacity="0.274"/><rect x="92.3" y="67.5" width="7.4" height="1.2" fill="#cccccc" opacity="0.274"/><rect x="101.0" y="67.5" width="8.4" height="1.2" fill="#cccccc" opacity="0.274"/><rect x="110.7" y="67.5" width="6.0" height="1.2" fill="#cccccc" opacity="0.274"/><rect x="117.9" y="67.5" width="6.6" height="1.2" fill="#cccccc" opacity="0.274"/><rect x="125.8" y="67.5" width="3.1" height="1.2" fill="#cccccc" opacity="0.274"/><rect x="130.2" y="67.5" width="3.8" height="1.2" fill="#cccccc" opacity="0.274"/><rect x="4.0" y="74.0" width="20.0" height="1.4" fill="#dddddd" opacity="0.5"/><rect x="9.0" y="79.0" width="5.0" height="1.2" fill="#cccccc" opacity="0.288"/><rect x="15.3" y="79.0" width="10.8" height="1.2" fill="#cccccc" opacity="0.288"/><rect x="27.4" y="79.0" width="7.6" height="1.2" fill="#cccccc" opacity="0.288"/><rect x="37.0" y="79.0" width="53.0" height="1.2" fill="#4a8ad8" opacity="0.6"/><rect x="4.0" y="85.0" width="314.0" height="18.0" fill="#232323"/><rect x="15.0" y="86.5" width="5.7" height="1.6" fill="#c586c0" opacity="0.396"/><rect x="24.1" y="86.5" width="3.1" height="1.6" fill="#4ec9b0" opacity="0.396"/><rect x="28.7" y="86.5" width="6.1" height="1.6" fill="#4ec9b0" opacity="0.396"/><rect x="9.0" y="90.7" width="12.9" height="1.6" fill="#4ec9b0" opacity="0.396"/><rect x="24.2" y="90.7" width="1.5" height="1.6" fill="#6a9955" opacity="0.396"/><rect x="9.0" y="92.8" width="11.4" height="1.6" fill="#c586c0" opacity="0.396"/><rect x="22.0" y="92.8" width="5.2" height="1.6" fill="#6a9955" opacity="0.396"/><rect x="29.4" y="92.8" width="5.2" height="1.6" fill="#c586c0" opacity="0.396"/><rect x="37.4" y="92.8" width="5.4" height="1.6" fill="#4ec9b0" opacity="0.396"/><rect x="9.0" y="94.9" width="5.7" height="1.6" fill="#6a9955" opacity="0.396"/><rect x="16.7" y="94.9" width="12.9" height="1.6" fill="#6a9955" opacity="0.396"/><rect x="32.3" y="94.9" width="1.9" height="1.6" fill="#c586c0" opacity="0.396"/><rect x="9.0" y="97.0" width="4.4" height="1.6" fill="#4ec9b0" opacity="0.396"/><rect x="15.5" y="97.0" width="16.5" height="1.6" fill="#c586c0" opacity="0.396"/><rect x="35.0" y="97.0" width="15.6" height="1.6" fill="#c586c0" opacity="0.396"/><rect x="52.8" y="97.0" width="3.3" height="1.6" fill="#6a9955" opacity="0.396"/><rect x="15.0" y="99.1" width="13.4" height="1.6" fill="#6a9955" opacity="0.396"/><rect x="30.1" y="99.1" width="11.6" height="1.6" fill="#6a9955" opacity="0.396"/><rect x="4.0" y="105.0" width="314.0" height="50.0" fill="#1b1b1b"/><rect x="15.0" y="107.0" width="15.7" height="1.4" fill="#6a9955" opacity="0.36"/><rect x="33.3" y="107.0" width="7.4" height="1.4" fill="#dcdcaa" opacity="0.36"/><rect x="18.0" y="109.2" width="12.5" height="1.4" fill="#569cd6" opacity="0.36"/><rect x="33.6" y="109.2" width="14.0" height="1.4" fill="#c586c0" opacity="0.36"/><rect x="9.0" y="111.4" width="10.0" height="1.4" fill="#d4d4d4" opacity="0.36"/><rect x="18.0" y="115.8" width="8.0" height="1.4" fill="#d4d4d4" opacity="0.36"/><rect x="29.1" y="115.8" width="6.2" height="1.4" fill="#d4d4d4" opacity="0.36"/><rect x="37.2" y="115.8" width="5.9" height="1.4" fill="#d4d4d4" opacity="0.36"/><rect x="15.0" y="118.0" width="4.7" height="1.4" fill="#dcdcaa" opacity="0.36"/><rect x="21.9" y="118.0" width="13.9" height="1.4" fill="#d4d4d4" opacity="0.36"/><rect x="39.2" y="118.0" width="15.5" height="1.4" fill="#c586c0" opacity="0.36"/><rect x="18.0" y="120.2" width="15.0" height="1.4" fill="#d4d4d4" opacity="0.36"/><rect x="34.7" y="120.2" width="5.3" height="1.4" fill="#569cd6" opacity="0.36"/><rect x="43.3" y="120.2" width="11.1" height="1.4" fill="#dcdcaa" opacity="0.36"/><rect x="56.8" y="120.2" width="7.6" height="1.4" fill="#6a9955" opacity="0.36"/><rect x="21.0" y="122.4" width="7.7" height="1.4" fill="#d4d4d4" opacity="0.36"/><rect x="30.3" y="122.4" width="11.7" height="1.4" fill="#dcdcaa" opacity="0.36"/><rect x="45.0" y="122.4" width="14.3" height="1.4" fill="#dcdcaa" opacity="0.36"/><rect x="15.0" y="126.8" width="12.4" height="1.4" fill="#ce9178" opacity="0.36"/><rect x="30.0" y="126.8" width="8.8" height="1.4" fill="#d4d4d4" opacity="0.36"/><rect x="40.6" y="126.8" width="14.7" height="1.4" fill="#6a9955" opacity="0.36"/><rect x="58.3" y="126.8" width="6.0" height="1.4" fill="#9cdcfe" opacity="0.36"/><rect x="15.0" y="131.2" width="17.3" height="1.4" fill="#c586c0" opacity="0.36"/><rect x="34.8" y="131.2" width="5.6" height="1.4" fill="#dcdcaa" opacity="0.36"/><rect x="9.0" y="133.4" width="3.4" height="1.4" fill="#569cd6" opacity="0.36"/><rect x="15.7" y="133.4" width="5.3" height="1.4" fill="#dcdcaa" opacity="0.36"/><rect x="24.3" y="133.4" width="11.0" height="1.4" fill="#d4d4d4" opacity="0.36"/><rect x="9.0" y="135.6" width="17.1" height="1.4" fill="#d4d4d4" opacity="0.36"/><rect x="29.6" y="135.6" width="6.1" height="1.4" fill="#9cdcfe" opacity="0.36"/><rect x="38.1" y="135.6" width="13.4" height="1.4" fill="#d4d4d4" opacity="0.36"/><rect x="9.0" y="137.8" width="11.9" height="1.4" fill="#d4d4d4" opacity="0.36"/><rect x="23.1" y="137.8" width="16.3" height="1.4" fill="#d4d4d4" opacity="0.36"/><rect x="42.0" y="137.8" width="3.7" height="1.4" fill="#6a9955" opacity="0.36"/><rect x="12.0" y="140.0" width="5.9" height="1.4" fill="#6a9955" opacity="0.36"/><rect x="20.5" y="140.0" width="12.7" height="1.4" fill="#d4d4d4" opacity="0.36"/><rect x="9.0" y="144.4" width="11.4" height="1.4" fill="#d4d4d4" opacity="0.36"/><rect x="22.3" y="144.4" width="8.3" height="1.4" fill="#dcdcaa" opacity="0.36"/><rect x="32.6" y="144.4" width="17.1" height="1.4" fill="#6a9955" opacity="0.36"/><rect x="52.4" y="144.4" width="4.8" height="1.4" fill="#6a9955" opacity="0.36"/><rect x="18.0" y="146.6" width="3.4" height="1.4" fill="#d4d4d4" opacity="0.36"/><rect x="23.0" y="146.6" width="4.6" height="1.4" fill="#d4d4d4" opacity="0.36"/><rect x="21.0" y="151.0" width="13.4" height="1.4" fill="#569cd6" opacity="0.36"/><rect x="37.1" y="151.0" width="7.7" height="1.4" fill="#c586c0" opacity="0.36"/><rect x="47.7" y="151.0" width="7.6" height="1.4" fill="#d4d4d4" opacity="0.36"/><rect x="18.0" y="153.2" width="4.4" height="1.4" fill="#6a9955" opacity="0.36"/><rect x="24.8" y="153.2" width="9.8" height="1.4" fill="#d4d4d4" opacity="0.36"/><rect x="37.5" y="153.2" width="12.2" height="1.4" fill="#569cd6" opacity="0.36"/><rect x="5.0" y="157.0" width="5.5" height="1.4" fill="#cccccc" opacity="0.36"/><rect x="11.8" y="157.0" width="12.5" height="1.4" fill="#cccccc" opacity="0.36"/><rect x="25.5" y="157.0" width="9.5" height="1.4" fill="#cccccc" opacity="0.36"/><rect x="5.0" y="160.5" width="13.0" height="1.4" fill="#cccccc" opacity="0.36"/><rect x="19.3" y="160.5" width="7.3" height="1.4" fill="#cccccc" opacity="0.36"/><rect x="28.0" y="160.5" width="3.0" height="1.4" fill="#cccccc" opacity="0.36"/><rect x="0.0" y="163.5" width="318.0" height="3.5" fill="#1a1a1a"/></g></svg>
<svg style="left:1290px;top:730px;overflow:hidden" width="318" height="179" viewBox="0 0 318 179"><g filter="url(#bl)"><rect x="0.0" y="0.0" width="318.0" height="179.0" fill="#191919"/><rect x="0.0" y="0.0" width="318.0" height="5.5" fill="#1b1b1b"/><rect x="10.0" y="2.5" width="6.7" height="1.5" fill="#bbbbbb" opacity="0.324"/><rect x="19.7" y="2.5" width="7.2" height="1.5" fill="#bbbbbb" opacity="0.324"/><rect x="29.8" y="2.5" width="7.5" height="1.5" fill="#bbbbbb" opacity="0.324"/><rect x="40.3" y="2.5" width="5.8" height="1.5" fill="#bbbbbb" opacity="0.324"/><rect x="49.2" y="2.5" width="4.1" height="1.5" fill="#bbbbbb" opacity="0.324"/><rect x="56.3" y="2.5" width="5.9" height="1.5" fill="#bbbbbb" opacity="0.324"/><rect x="65.2" y="2.5" width="4.8" height="1.5" fill="#bbbbbb" opacity="0.324"/><rect x="143.1" y="1.5" width="70.0" height="2.5" fill="#2c2c2c"/><rect x="0.0" y="5.5" width="9.0" height="173.5" fill="#1b1b1b"/><rect x="3.2" y="10.5" width="4.6" height="4.6" fill="#8a8a8a" opacity="0.25" rx="1"/><rect x="3.2" y="19.5" width="4.6" height="4.6" fill="#8a8a8a" opacity="0.25" rx="1"/><rect x="3.2" y="28.5" width="4.6" height="4.6" fill="#8a8a8a" opacity="0.25" rx="1"/><rect x="3.2" y="37.5" width="4.6" height="4.6" fill="#8a8a8a" opacity="0.25" rx="1"/><rect x="3.2" y="46.5" width="4.6" height="4.6" fill="#8a8a8a" opacity="0.25" rx="1"/><rect x="3.2" y="55.5" width="4.6" height="4.6" fill="#8a8a8a" opacity="0.25" rx="1"/><rect x="12.0" y="10.5" width="8.1" height="1.5" fill="#cccccc" opacity="0.288"/><rect x="21.4" y="10.5" width="4.9" height="1.5" fill="#cccccc" opacity="0.288"/><rect x="27.6" y="10.5" width="11.4" height="1.5" fill="#cccccc" opacity="0.288"/><rect x="40.3" y="10.5" width="9.6" height="1.5" fill="#cccccc" opacity="0.288"/><rect x="51.2" y="10.5" width="4.4" height="1.5" fill="#cccccc" opacity="0.288"/><rect x="36.0" y="10.3" width="20.0" height="1.7" fill="#c04040" opacity="0.6"/><rect x="12.0" y="15.0" width="12.0" height="1.2" fill="#aaaaaa" opacity="0.216"/><rect x="26.0" y="15.0" width="11.8" height="1.2" fill="#aaaaaa" opacity="0.216"/><rect x="39.8" y="15.0" width="6.6" height="1.2" fill="#aaaaaa" opacity="0.216"/><rect x="48.3" y="15.0" width="10.1" height="1.2" fill="#aaaaaa" opacity="0.216"/><rect x="60.5" y="15.0" width="11.7" height="1.2" fill="#aaaaaa" opacity="0.216"/><rect x="74.2" y="15.0" width="8.9" height="1.2" fill="#aaaaaa" opacity="0.216"/><rect x="85.1" y="15.0" width="7.4" height="1.2" fill="#aaaaaa" opacity="0.216"/><rect x="94.5" y="15.0" width="7.5" height="1.2" fill="#aaaaaa" opacity="0.216"/><rect x="104.0" y="15.0" width="9.8" height="1.2" fill="#aaaaaa" opacity="0.216"/><rect x="115.8" y="15.0" width="9.0" height="1.2" fill="#aaaaaa" opacity="0.216"/><rect x="126.9" y="15.0" width="13.7" height="1.2" fill="#aaaaaa" opacity="0.216"/><rect x="142.6" y="15.0" width="7.2" height="1.2" fill="#aaaaaa" opacity="0.216"/><rect x="151.8" y="15.0" width="6.7" height="1.2" fill="#aaaaaa" opacity="0.216"/><rect x="160.6" y="15.0" width="12.0" height="1.2" fill="#aaaaaa" opacity="0.216"/><rect x="174.5" y="15.0" width="9.5" height="1.2" fill="#aaaaaa" opacity="0.216"/><rect x="186.0" y="15.0" width="11.6" height="1.2" fill="#aaaaaa" opacity="0.216"/><rect x="199.6" y="15.0" width="7.8" height="1.2" fill="#aaaaaa" opacity="0.216"/><rect x="209.4" y="15.0" width="11.7" height="1.2" fill="#aaaaaa" opacity="0.216"/><rect x="223.1" y="15.0" width="9.0" height="1.2" fill="#aaaaaa" opacity="0.216"/><rect x="234.1" y="15.0" width="5.6" height="1.2" fill="#aaaaaa" opacity="0.216"/><rect x="241.7" y="15.0" width="5.3" height="1.2" fill="#aaaaaa" opacity="0.216"/><rect x="12.0" y="19.5" width="3.9" height="1.2" fill="#aaaaaa" opacity="0.216"/><rect x="18.9" y="19.5" width="13.2" height="1.2" fill="#aaaaaa" opacity="0.216"/><rect x="35.1" y="19.5" width="9.3" height="1.2" fill="#aaaaaa" opacity="0.216"/><rect x="47.4" y="19.5" width="8.4" height="1.2" fill="#aaaaaa" opacity="0.216"/><rect x="58.8" y="19.5" width="9.5" height="1.2" fill="#aaaaaa" opacity="0.216"/><rect x="71.3" y="19.5" width="8.1" height="1.2" fill="#aaaaaa" opacity="0.216"/><rect x="82.4" y="19.5" width="4.6" height="1.2" fill="#aaaaaa" opacity="0.216"/><text x="15.6" y="34.5" font-family="Liberation Sans" font-size="6.6" fill="#e4e4e4" textLength="73.5">Assignmnet 2 (100 points)</text><rect x="15.6" y="42.5" width="8.0" height="2.0" fill="#e0e0e0" opacity="0.576"/><rect x="15.6" y="46.0" width="4.6" height="2.0" fill="#e0e0e0" opacity="0.576"/><rect x="21.2" y="46.0" width="2.4" height="2.0" fill="#e0e0e0" opacity="0.576"/><rect x="15.6" y="49.5" width="3.6" height="2.0" fill="#e0e0e0" opacity="0.576"/><rect x="20.2" y="49.5" width="4.0" height="2.0" fill="#e0e0e0" opacity="0.576"/><rect x="25.2" y="49.5" width="4.4" height="2.0" fill="#e0e0e0" opacity="0.576"/><rect x="15.6" y="53.0" width="9.9" height="2.0" fill="#e0e0e0" opacity="0.576"/><rect x="26.5" y="53.0" width="6.4" height="2.0" fill="#e0e0e0" opacity="0.576"/><rect x="34.0" y="53.0" width="7.4" height="2.0" fill="#e0e0e0" opacity="0.576"/><rect x="42.4" y="53.0" width="4.2" height="2.0" fill="#e0e0e0" opacity="0.576"/><rect x="15.6" y="63.0" width="4.9" height="2.2" fill="#cccccc" opacity="0.324"/><rect x="21.7" y="63.0" width="12.2" height="2.2" fill="#cccccc" opacity="0.324"/><rect x="35.1" y="63.0" width="12.9" height="2.2" fill="#cccccc" opacity="0.324"/><rect x="49.1" y="63.0" width="13.0" height="2.2" fill="#cccccc" opacity="0.324"/><rect x="63.4" y="63.0" width="10.4" height="2.2" fill="#cccccc" opacity="0.324"/><rect x="74.9" y="63.0" width="1.7" height="2.2" fill="#cccccc" opacity="0.324"/><rect x="15.6" y="74.5" width="3.0" height="1.7" fill="#d0d0d0" opacity="0.396"/><rect x="19.9" y="74.5" width="3.0" height="1.7" fill="#d0d0d0" opacity="0.396"/><rect x="24.3" y="74.5" width="5.7" height="1.7" fill="#d0d0d0" opacity="0.396"/><rect x="31.3" y="74.5" width="4.7" height="1.7" fill="#d0d0d0" opacity="0.396"/><rect x="37.3" y="74.5" width="6.0" height="1.7" fill="#d0d0d0" opacity="0.396"/><rect x="44.7" y="74.5" width="3.4" height="1.7" fill="#d0d0d0" opacity="0.396"/><rect x="49.3" y="74.5" width="6.8" height="1.7" fill="#d0d0d0" opacity="0.396"/><rect x="57.4" y="74.5" width="4.2" height="1.7" fill="#d0d0d0" opacity="0.396"/><rect x="62.9" y="74.5" width="6.0" height="1.7" fill="#d0d0d0" opacity="0.396"/><rect x="70.2" y="74.5" width="8.4" height="1.7" fill="#d0d0d0" opacity="0.396"/><rect x="79.9" y="74.5" width="4.1" height="1.7" fill="#d0d0d0" opacity="0.396"/><rect x="85.3" y="74.5" width="8.6" height="1.7" fill="#d0d0d0" opacity="0.396"/><rect x="95.2" y="74.5" width="5.0" height="1.7" fill="#d0d0d0" opacity="0.396"/><rect x="101.6" y="74.5" width="8.9" height="1.7" fill="#d0d0d0" opacity="0.396"/><rect x="111.8" y="74.5" width="4.4" height="1.7" fill="#d0d0d0" opacity="0.396"/><rect x="117.5" y="74.5" width="2.6" height="1.7" fill="#d0d0d0" opacity="0.396"/><rect x="121.4" y="74.5" width="2.1" height="1.7" fill="#d0d0d0" opacity="0.396"/><rect x="124.8" y="74.5" width="8.9" height="1.7" fill="#d0d0d0" opacity="0.396"/><rect x="135.0" y="74.5" width="4.8" height="1.7" fill="#d0d0d0" opacity="0.396"/><rect x="141.1" y="74.5" width="2.9" height="1.7" fill="#d0d0d0" opacity="0.396"/><rect x="145.3" y="74.5" width="4.1" height="1.7" fill="#d0d0d0" opacity="0.396"/><rect x="150.6" y="74.5" width="4.6" height="1.7" fill="#d0d0d0" opacity="0.396"/><rect x="156.5" y="74.5" width="5.8" height="1.7" fill="#d0d0d0" opacity="0.396"/><rect x="163.7" y="74.5" width="2.4" height="1.7" fill="#d0d0d0" opacity="0.396"/><rect x="167.3" y="74.5" width="6.9" height="1.7" fill="#d0d0d0" opacity="0.396"/><rect x="175.6" y="74.5" width="7.7" height="1.7" fill="#d0d0d0" opacity="0.396"/><rect x="184.6" y="74.5" width="4.5" height="1.7" fill="#d0d0d0" opacity="0.396"/><rect x="190.4" y="74.5" width="8.0" height="1.7" fill="#d0d0d0" opacity="0.396"/><rect x="199.8" y="74.5" width="8.1" height="1.7" fill="#d0d0d0" opacity="0.396"/><rect x="209.1" y="74.5" width="3.6" height="1.7" fill="#d0d0d0" opacity="0.396"/><rect x="214.1" y="74.5" width="6.9" height="1.7" fill="#d0d0d0" opacity="0.396"/><rect x="222.3" y="74.5" width="4.8" height="1.7" fill="#d0d0d0" opacity="0.396"/><rect x="228.3" y="74.5" width="4.2" height="1.7" fill="#d0d0d0" opacity="0.396"/><rect x="233.9" y="74.5" width="4.7" height="1.7" fill="#d0d0d0" opacity="0.396"/><rect x="239.8" y="74.5" width="4.7" height="1.7" fill="#d0d0d0" opacity="0.396"/><rect x="245.8" y="74.5" width="5.8" height="1.7" fill="#d0d0d0" opacity="0.396"/><rect x="252.9" y="74.5" width="6.6" height="1.7" fill="#d0d0d0" opacity="0.396"/><rect x="260.9" y="74.5" width="5.3" height="1.7" fill="#d0d0d0" opacity="0.396"/><rect x="267.5" y="74.5" width="3.3" height="1.7" fill="#d0d0d0" opacity="0.396"/><rect x="272.1" y="74.5" width="4.7" height="1.7" fill="#d0d0d0" opacity="0.396"/><rect x="278.1" y="74.5" width="8.5" height="1.7" fill="#d0d0d0" opacity="0.396"/><rect x="287.9" y="74.5" width="7.9" height="1.7" fill="#d0d0d0" opacity="0.396"/><rect x="297.0" y="74.5" width="3.1" height="1.7" fill="#d0d0d0" opacity="0.396"/><rect x="301.4" y="74.5" width="9.0" height="1.7" fill="#d0d0d0" opacity="0.396"/><rect x="311.7" y="74.5" width="3.9" height="1.7" fill="#d0d0d0" opacity="0.396"/><rect x="15.6" y="77.8" width="2.9" height="1.7" fill="#d0d0d0" opacity="0.396"/><rect x="19.8" y="77.8" width="2.5" height="1.7" fill="#d0d0d0" opacity="0.396"/><rect x="23.6" y="77.8" width="2.1" height="1.7" fill="#d0d0d0" opacity="0.396"/><rect x="27.1" y="77.8" width="7.0" height="1.7" fill="#d0d0d0" opacity="0.396"/><rect x="35.4" y="77.8" width="5.4" height="1.7" fill="#d0d0d0" opacity="0.396"/><rect x="42.1" y="77.8" width="5.1" height="1.7" fill="#d0d0d0" opacity="0.396"/><rect x="48.5" y="77.8" width="8.9" height="1.7" fill="#d0d0d0" opacity="0.396"/><rect x="58.7" y="77.8" width="2.6" height="1.7" fill="#d0d0d0" opacity="0.396"/><rect x="62.6" y="77.8" width="6.5" height="1.7" fill="#d0d0d0" opacity="0.396"/><rect x="70.4" y="77.8" width="4.9" height="1.7" fill="#d0d0d0" opacity="0.396"/><rect x="76.6" y="77.8" width="5.2" height="1.7" fill="#d0d0d0" opacity="0.396"/><rect x="83.1" y="77.8" width="7.5" height="1.7" fill="#d0d0d0" opacity="0.396"/><rect x="91.9" y="77.8" width="6.2" height="1.7" fill="#d0d0d0" opacity="0.396"/><rect x="99.4" y="77.8" width="5.0" height="1.7" fill="#d0d0d0" opacity="0.396"/><rect x="105.7" y="77.8" width="3.3" height="1.7" fill="#d0d0d0" opacity="0.396"/><rect x="110.3" y="77.8" width="5.6" height="1.7" fill="#d0d0d0" opacity="0.396"/><rect x="117.1" y="77.8" width="5.9" height="1.7" fill="#d0d0d0" opacity="0.396"/><rect x="124.3" y="77.8" width="5.2" height="1.7" fill="#d0d0d0" opacity="0.396"/><rect x="130.8" y="77.8" width="4.5" height="1.7" fill="#d0d0d0" opacity="0.396"/><rect x="136.5" y="77.8" width="3.3" height="1.7" fill="#d0d0d0" opacity="0.396"/><rect x="141.1" y="77.8" width="6.2" height="1.7" fill="#d0d0d0" opacity="0.396"/><rect x="148.7" y="77.8" width="6.0" height="1.7" fill="#d0d0d0" opacity="0.396"/><rect x="156.0" y="77.8" width="7.9" height="1.7" fill="#d0d0d0" opacity="0.396"/><rect x="165.3" y="77.8" width="3.7" height="1.7" fill="#d0d0d0" opacity="0.396"/><rect x="170.2" y="77.8" width="5.5" height="1.7" fill="#d0d0d0" opacity="0.396"/><rect x="177.0" y="77.8" width="4.9" height="1.7" fill="#d0d0d0" opacity="0.396"/><rect x="183.2" y="77.8" width="5.8" height="1.7" fill="#d0d0d0" opacity="0.396"/><rect x="190.3" y="77.8" width="4.6" height="1.7" fill="#d0d0d0" opacity="0.396"/><rect x="196.2" y="77.8" width="8.8" height="1.7" fill="#d0d0d0" opacity="0.396"/><rect x="206.3" y="77.8" width="6.0" height="1.7" fill="#d0d0d0" opacity="0.396"/><rect x="213.6" y="77.8" width="2.0" height="1.7" fill="#d0d0d0" opacity="0.396"/><rect x="15.6" y="84.5" width="2.8" height="1.7" fill="#d0d0d0" opacity="0.396"/><rect x="19.7" y="84.5" width="5.4" height="1.7" fill="#d0d0d0" opacity="0.396"/><rect x="26.4" y="84.5" width="6.8" height="1.7" fill="#d0d0d0" opacity="0.396"/><rect x="34.5" y="84.5" width="3.0" height="1.7" fill="#d0d0d0" opacity="0.396"/><rect x="38.8" y="84.5" width="7.1" height="1.7" fill="#d0d0d0" opacity="0.396"/><rect x="47.2" y="84.5" width="8.9" height="1.7" fill="#d0d0d0" opacity="0.396"/><rect x="57.4" y="84.5" width="8.9" height="1.7" fill="#d0d0d0" opacity="0.396"/><rect x="67.6" y="84.5" width="7.5" height="1.7" fill="#d0d0d0" opacity="0.396"/><rect x="76.3" y="84.5" width="5.3" height="1.7" fill="#d0d0d0" opacity="0.396"/><rect x="82.9" y="84.5" width="2.5" height="1.7" fill="#d0d0d0" opacity="0.396"/><rect x="86.7" y="84.5" width="8.2" height="1.7" fill="#d0d0d0" opacity="0.396"/><rect x="96.3" y="84.5" width="2.6" height="1.7" fill="#d0d0d0" opacity="0.396"/><rect x="100.2" y="84.5" width="5.3" height="1.7" fill="#d0d0d0" opacity="0.396"/><rect x="106.8" y="84.5" width="7.2" height="1.7" fill="#d0d0d0" opacity="0.396"/><rect x="115.3" y="84.5" width="8.7" height="1.7" fill="#d0d0d0" opacity="0.396"/><rect x="125.3" y="84.5" width="2.5" height="1.7" fill="#d0d0d0" opacity="0.396"/><rect x="129.2" y="84.5" width="6.4" height="1.7" fill="#d0d0d0" opacity="0.396"/><rect x="136.9" y="84.5" width="7.6" height="1.7" fill="#d0d0d0" opacity="0.396"/><rect x="145.8" y="84.5" width="4.2" height="1.7" fill="#d0d0d0" opacity="0.396"/><rect x="151.3" y="84.5" width="2.4" height="1.7" fill="#d0d0d0" opacity="0.396"/><rect x="154.9" y="84.5" width="4.4" height="1.7" fill="#d0d0d0" opacity="0.396"/><rect x="160.6" y="84.5" width="7.4" height="1.7" fill="#d0d0d0" opacity="0.396"/><rect x="169.4" y="84.5" width="5.3" height="1.7" fill="#d0d0d0" opacity="0.396"/><rect x="176.0" y="84.5" width="5.6" height="1.7" fill="#d0d0d0" opacity="0.396"/><rect x="182.9" y="84.5" width="5.3" height="1.7" fill="#d0d0d0" opacity="0.396"/><rect x="189.4" y="84.5" width="7.1" height="1.7" fill="#d0d0d0" opacity="0.396"/><rect x="197.9" y="84.5" width="4.9" height="1.7" fill="#d0d0d0" opacity="0.396"/><rect x="204.1" y="84.5" width="8.7" height="1.7" fill="#d0d0d0" opacity="0.396"/><rect x="214.1" y="84.5" width="7.6" height="1.7" fill="#d0d0d0" opacity="0.396"/><rect x="223.0" y="84.5" width="4.0" height="1.7" fill="#d0d0d0" opacity="0.396"/><rect x="228.4" y="84.5" width="2.2" height="1.7" fill="#d0d0d0" opacity="0.396"/><rect x="231.9" y="84.5" width="8.5" height="1.7" fill="#d0d0d0" opacity="0.396"/><rect x="241.7" y="84.5" width="7.2" height="1.7" fill="#d0d0d0" opacity="0.396"/><rect x="250.2" y="84.5" width="7.1" height="1.7" fill="#d0d0d0" opacity="0.396"/><rect x="258.6" y="84.5" width="5.9" height="1.7" fill="#d0d0d0" opacity="0.396"/><rect x="265.8" y="84.5" width="2.4" height="1.7" fill="#d0d0d0" opacity="0.396"/><rect x="269.6" y="84.5" width="5.3" height="1.7" fill="#d0d0d0" opacity="0.396"/><rect x="276.2" y="84.5" width="3.2" height="1.7" fill="#d0d0d0" opacity="0.396"/><rect x="280.7" y="84.5" width="2.4" height="1.7" fill="#d0d0d0" opacity="0.396"/><rect x="284.3" y="84.5" width="8.9" height="1.7" fill="#d0d0d0" opacity="0.396"/><rect x="294.6" y="84.5" width="7.7" height="1.7" fill="#d0d0d0" opacity="0.396"/><rect x="303.5" y="84.5" width="6.4" height="1.7" fill="#d0d0d0" opacity="0.396"/><rect x="311.2" y="84.5" width="2.4" height="1.7" fill="#d0d0d0" opacity="0.396"/><rect x="15.6" y="88.0" width="2.6" height="1.7" fill="#d0d0d0" opacity="0.396"/><rect x="19.5" y="88.0" width="5.5" height="1.7" fill="#d0d0d0" opacity="0.396"/><rect x="26.3" y="88.0" width="8.0" height="1.7" fill="#d0d0d0" opacity="0.396"/><rect x="35.6" y="88.0" width="3.9" height="1.7" fill="#d0d0d0" opacity="0.396"/><rect x="40.8" y="88.0" width="2.9" height="1.7" fill="#d0d0d0" opacity="0.396"/><rect x="45.0" y="88.0" width="4.0" height="1.7" fill="#d0d0d0" opacity="0.396"/><rect x="50.3" y="88.0" width="8.0" height="1.7" fill="#d0d0d0" opacity="0.396"/><rect x="59.6" y="88.0" width="2.1" height="1.7" fill="#d0d0d0" opacity="0.396"/><rect x="63.0" y="88.0" width="2.8" height="1.7" fill="#d0d0d0" opacity="0.396"/><rect x="67.1" y="88.0" width="3.2" height="1.7" fill="#d0d0d0" opacity="0.396"/><rect x="71.6" y="88.0" width="6.1" height="1.7" fill="#d0d0d0" opacity="0.396"/><rect x="79.1" y="88.0" width="3.1" height="1.7" fill="#d0d0d0" opacity="0.396"/><rect x="83.4" y="88.0" width="5.1" height="1.7" fill="#d0d0d0" opacity="0.396"/><rect x="89.9" y="88.0" width="7.7" height="1.7" fill="#d0d0d0" opacity="0.396"/><rect x="98.8" y="88.0" width="3.8" height="1.7" fill="#d0d0d0" opacity="0.396"/><rect x="103.9" y="88.0" width="6.9" height="1.7" fill="#d0d0d0" opacity="0.396"/><rect x="112.1" y="88.0" width="5.4" height="1.7" fill="#d0d0d0" opacity="0.396"/><rect x="118.8" y="88.0" width="7.6" height="1.7" fill="#d0d0d0" opacity="0.396"/><rect x="127.7" y="88.0" width="8.0" height="1.7" fill="#d0d0d0" opacity="0.396"/><rect x="137.1" y="88.0" width="4.4" height="1.7" fill="#d0d0d0" opacity="0.396"/><rect x="142.8" y="88.0" width="2.6" height="1.7" fill="#d0d0d0" opacity="0.396"/><rect x="146.7" y="88.0" width="3.0" height="1.7" fill="#d0d0d0" opacity="0.396"/><rect x="151.0" y="88.0" width="8.5" height="1.7" fill="#d0d0d0" opacity="0.396"/><rect x="160.8" y="88.0" width="3.1" height="1.7" fill="#d0d0d0" opacity="0.396"/><rect x="165.2" y="88.0" width="5.5" height="1.7" fill="#d0d0d0" opacity="0.396"/><rect x="172.0" y="88.0" width="9.0" height="1.7" fill="#d0d0d0" opacity="0.396"/><rect x="182.2" y="88.0" width="7.4" height="1.7" fill="#d0d0d0" opacity="0.396"/><rect x="15.6" y="94.5" width="3.7" height="1.7" fill="#d0d0d0" opacity="0.396"/><rect x="20.6" y="94.5" width="5.1" height="1.7" fill="#d0d0d0" opacity="0.396"/><rect x="26.9" y="94.5" width="6.5" height="1.7" fill="#d0d0d0" opacity="0.396"/><rect x="34.7" y="94.5" width="3.5" height="1.7" fill="#d0d0d0" opacity="0.396"/><rect x="39.5" y="94.5" width="7.1" height="1.7" fill="#d0d0d0" opacity="0.396"/><rect x="47.9" y="94.5" width="4.4" height="1.7" fill="#d0d0d0" opacity="0.396"/><rect x="53.6" y="94.5" width="6.5" height="1.7" fill="#d0d0d0" opacity="0.396"/><rect x="61.4" y="94.5" width="7.3" height="1.7" fill="#d0d0d0" opacity="0.396"/><rect x="70.0" y="94.5" width="2.8" height="1.7" fill="#d0d0d0" opacity="0.396"/><rect x="74.1" y="94.5" width="3.2" height="1.7" fill="#d0d0d0" opacity="0.396"/><rect x="78.6" y="94.5" width="4.8" height="1.7" fill="#d0d0d0" opacity="0.396"/><rect x="84.7" y="94.5" width="4.1" height="1.7" fill="#d0d0d0" opacity="0.396"/><rect x="90.1" y="94.5" width="7.2" height="1.7" fill="#d0d0d0" opacity="0.396"/><rect x="98.6" y="94.5" width="7.3" height="1.7" fill="#d0d0d0" opacity="0.396"/><rect x="107.2" y="94.5" width="5.7" height="1.7" fill="#d0d0d0" opacity="0.396"/><rect x="114.2" y="94.5" width="4.7" height="1.7" fill="#d0d0d0" opacity="0.396"/><rect x="120.2" y="94.5" width="6.9" height="1.7" fill="#d0d0d0" opacity="0.396"/><rect x="128.4" y="94.5" width="5.3" height="1.7" fill="#d0d0d0" opacity="0.396"/><rect x="135.0" y="94.5" width="3.0" height="1.7" fill="#d0d0d0" opacity="0.396"/><rect x="139.4" y="94.5" width="8.1" height="1.7" fill="#d0d0d0" opacity="0.396"/><rect x="148.8" y="94.5" width="2.1" height="1.7" fill="#d0d0d0" opacity="0.396"/><rect x="152.1" y="94.5" width="8.5" height="1.7" fill="#d0d0d0" opacity="0.396"/><rect x="161.9" y="94.5" width="5.1" height="1.7" fill="#d0d0d0" opacity="0.396"/><rect x="168.4" y="94.5" width="6.7" height="1.7" fill="#d0d0d0" opacity="0.396"/><rect x="176.4" y="94.5" width="8.7" height="1.7" fill="#d0d0d0" opacity="0.396"/><rect x="186.5" y="94.5" width="6.8" height="1.7" fill="#d0d0d0" opacity="0.396"/><rect x="194.5" y="94.5" width="2.3" height="1.7" fill="#d0d0d0" opacity="0.396"/><rect x="198.1" y="94.5" width="8.4" height="1.7" fill="#d0d0d0" opacity="0.396"/><rect x="207.8" y="94.5" width="6.5" height="1.7" fill="#d0d0d0" opacity="0.396"/><rect x="215.6" y="94.5" width="8.7" height="1.7" fill="#d0d0d0" opacity="0.396"/><rect x="225.6" y="94.5" width="5.0" height="1.7" fill="#d0d0d0" opacity="0.396"/><rect x="231.9" y="94.5" width="8.4" height="1.7" fill="#d0d0d0" opacity="0.396"/><rect x="241.7" y="94.5" width="8.0" height="1.7" fill="#d0d0d0" opacity="0.396"/><rect x="251.0" y="94.5" width="4.3" height="1.7" fill="#d0d0d0" opacity="0.396"/><rect x="256.6" y="94.5" width="3.9" height="1.7" fill="#d0d0d0" opacity="0.396"/><rect x="15.6" y="101.0" width="2.7" height="1.7" fill="#d0d0d0" opacity="0.396"/><rect x="19.6" y="101.0" width="6.6" height="1.7" fill="#d0d0d0" opacity="0.396"/><rect x="27.5" y="101.0" width="4.7" height="1.7" fill="#d0d0d0" opacity="0.396"/><rect x="33.5" y="101.0" width="7.4" height="1.7" fill="#d0d0d0" opacity="0.396"/><rect x="42.2" y="101.0" width="7.2" height="1.7" fill="#d0d0d0" opacity="0.396"/><rect x="50.8" y="101.0" width="7.1" height="1.7" fill="#d0d0d0" opacity="0.396"/><rect x="59.2" y="101.0" width="6.1" height="1.7" fill="#d0d0d0" opacity="0.396"/><rect x="66.6" y="101.0" width="3.4" height="1.7" fill="#d0d0d0" opacity="0.396"/><rect x="71.3" y="101.0" width="4.4" height="1.7" fill="#d0d0d0" opacity="0.396"/><rect x="76.9" y="101.0" width="6.8" height="1.7" fill="#d0d0d0" opacity="0.396"/><rect x="85.1" y="101.0" width="3.3" height="1.7" fill="#d0d0d0" opacity="0.396"/><rect x="89.6" y="101.0" width="5.8" height="1.7" fill="#d0d0d0" opacity="0.396"/><rect x="96.8" y="101.0" width="6.7" height="1.7" fill="#d0d0d0" opacity="0.396"/><rect x="104.8" y="101.0" width="7.8" height="1.7" fill="#d0d0d0" opacity="0.396"/><rect x="113.9" y="101.0" width="2.1" height="1.7" fill="#d0d0d0" opacity="0.396"/><rect x="117.3" y="101.0" width="2.7" height="1.7" fill="#d0d0d0" opacity="0.396"/><rect x="121.3" y="101.0" width="2.7" height="1.7" fill="#d0d0d0" opacity="0.396"/><rect x="125.3" y="101.0" width="5.1" height="1.7" fill="#d0d0d0" opacity="0.396"/><rect x="131.7" y="101.0" width="3.5" height="1.7" fill="#d0d0d0" opacity="0.396"/><rect x="136.6" y="101.0" width="4.0" height="1.7" fill="#d0d0d0" opacity="0.396"/><rect x="141.8" y="101.0" width="3.4" height="1.7" fill="#d0d0d0" opacity="0.396"/><rect x="146.5" y="101.0" width="2.2" height="1.7" fill="#d0d0d0" opacity="0.396"/><rect x="150.0" y="101.0" width="2.6" height="1.7" fill="#d0d0d0" opacity="0.396"/><rect x="153.9" y="101.0" width="8.6" height="1.7" fill="#d0d0d0" opacity="0.396"/><rect x="163.8" y="101.0" width="6.6" height="1.7" fill="#d0d0d0" opacity="0.396"/><rect x="171.7" y="101.0" width="7.8" height="1.7" fill="#d0d0d0" opacity="0.396"/><rect x="180.8" y="101.0" width="8.7" height="1.7" fill="#d0d0d0" opacity="0.396"/><rect x="190.8" y="101.0" width="4.8" height="1.7" fill="#d0d0d0" opacity="0.396"/><rect x="15.6" y="109.5" width="30.0" height="1.6" fill="#dddddd" opacity="0.55"/><rect x="22.0" y="116.0" width="10.8" height="1.3" fill="#cccccc" opacity="0.288"/><rect x="34.1" y="116.0" width="4.3" height="1.3" fill="#cccccc" opacity="0.288"/><rect x="39.7" y="116.0" width="12.4" height="1.3" fill="#cccccc" opacity="0.288"/><rect x="53.4" y="116.0" width="3.6" height="1.3" fill="#cccccc" opacity="0.288"/><rect x="60.0" y="116.0" width="75.0" height="1.3" fill="#4a8ad8" opacity="0.6"/><rect x="9.0" y="123.0" width="309.0" height="48.0" fill="#1b1b1b"/><rect x="9.5" y="124.0" width="1.0" height="46.0" fill="#2a6fb0" opacity="0.7"/><rect x="33.0" y="126.0" width="5.8" height="1.7" fill="#c586c0" opacity="0.36"/><rect x="41.7" y="126.0" width="6.8" height="1.7" fill="#ce9178" opacity="0.36"/><rect x="51.3" y="126.0" width="4.1" height="1.7" fill="#ce9178" opacity="0.36"/><rect x="58.8" y="126.0" width="7.1" height="1.7" fill="#ce9178" opacity="0.36"/><rect x="68.8" y="126.0" width="13.0" height="1.7" fill="#ce9178" opacity="0.36"/><rect x="83.8" y="126.0" width="14.7" height="1.7" fill="#ce9178" opacity="0.36"/><rect x="101.6" y="126.0" width="8.7" height="1.7" fill="#ce9178" opacity="0.36"/><rect x="113.8" y="126.0" width="6.9" height="1.7" fill="#ce9178" opacity="0.36"/><rect x="122.6" y="126.0" width="4.0" height="1.7" fill="#9cdcfe" opacity="0.36"/><rect x="129.3" y="126.0" width="5.7" height="1.7" fill="#ce9178" opacity="0.36"/><rect x="136.7" y="126.0" width="11.1" height="1.7" fill="#ce9178" opacity="0.36"/><rect x="149.8" y="126.0" width="12.7" height="1.7" fill="#ce9178" opacity="0.36"/><rect x="165.3" y="126.0" width="4.5" height="1.7" fill="#c586c0" opacity="0.36"/><rect x="171.5" y="126.0" width="13.9" height="1.7" fill="#ce9178" opacity="0.36"/><rect x="187.0" y="126.0" width="4.2" height="1.7" fill="#c586c0" opacity="0.36"/><rect x="21.0" y="129.0" width="7.9" height="1.7" fill="#ce9178" opacity="0.36"/><rect x="31.6" y="129.0" width="10.7" height="1.7" fill="#ce9178" opacity="0.36"/><rect x="44.8" y="129.0" width="9.1" height="1.7" fill="#c586c0" opacity="0.36"/><rect x="56.4" y="129.0" width="3.0" height="1.7" fill="#ce9178" opacity="0.36"/><rect x="61.2" y="129.0" width="11.0" height="1.7" fill="#ce9178" opacity="0.36"/><rect x="21.0" y="132.0" width="17.4" height="1.7" fill="#c586c0" opacity="0.36"/><rect x="40.6" y="132.0" width="15.8" height="1.7" fill="#ce9178" opacity="0.36"/><rect x="58.1" y="132.0" width="9.9" height="1.7" fill="#ce9178" opacity="0.36"/><rect x="70.8" y="132.0" width="5.6" height="1.7" fill="#c586c0" opacity="0.36"/><rect x="79.8" y="132.0" width="12.9" height="1.7" fill="#ce9178" opacity="0.36"/><rect x="95.7" y="132.0" width="16.4" height="1.7" fill="#ce9178" opacity="0.36"/><rect x="114.6" y="132.0" width="16.3" height="1.7" fill="#ce9178" opacity="0.36"/><rect x="133.8" y="132.0" width="5.1" height="1.7" fill="#9cdcfe" opacity="0.36"/><rect x="140.5" y="132.0" width="11.1" height="1.7" fill="#9cdcfe" opacity="0.36"/><rect x="21.0" y="138.0" width="17.5" height="1.7" fill="#ce9178" opacity="0.36"/><rect x="41.9" y="138.0" width="3.2" height="1.7" fill="#ce9178" opacity="0.36"/><rect x="46.8" y="138.0" width="14.8" height="1.7" fill="#c586c0" opacity="0.36"/><rect x="63.9" y="138.0" width="6.2" height="1.7" fill="#d4d4d4" opacity="0.36"/><rect x="72.5" y="138.0" width="13.2" height="1.7" fill="#d4d4d4" opacity="0.36"/><rect x="87.5" y="138.0" width="11.7" height="1.7" fill="#c586c0" opacity="0.36"/><rect x="100.7" y="138.0" width="5.1" height="1.7" fill="#c586c0" opacity="0.36"/><rect x="108.3" y="138.0" width="16.8" height="1.7" fill="#c586c0" opacity="0.36"/><rect x="127.0" y="138.0" width="3.2" height="1.7" fill="#c586c0" opacity="0.36"/><rect x="21.0" y="144.0" width="5.6" height="1.7" fill="#d4d4d4" opacity="0.36"/><rect x="28.2" y="144.0" width="15.3" height="1.7" fill="#c586c0" opacity="0.36"/><rect x="45.9" y="144.0" width="15.0" height="1.7" fill="#9cdcfe" opacity="0.36"/><rect x="62.6" y="144.0" width="6.0" height="1.7" fill="#ce9178" opacity="0.36"/><rect x="71.7" y="144.0" width="17.7" height="1.7" fill="#ce9178" opacity="0.36"/><rect x="91.6" y="144.0" width="17.6" height="1.7" fill="#d4d4d4" opacity="0.36"/><rect x="111.8" y="144.0" width="7.8" height="1.7" fill="#9cdcfe" opacity="0.36"/><rect x="21.0" y="153.0" width="9.6" height="1.7" fill="#d4d4d4" opacity="0.36"/><rect x="32.2" y="153.0" width="4.5" height="1.7" fill="#d4d4d4" opacity="0.36"/><rect x="38.9" y="153.0" width="5.4" height="1.7" fill="#ce9178" opacity="0.36"/><rect x="45.9" y="153.0" width="3.1" height="1.7" fill="#c586c0" opacity="0.36"/><rect x="52.0" y="153.0" width="11.9" height="1.7" fill="#ce9178" opacity="0.36"/><rect x="66.2" y="153.0" width="15.1" height="1.7" fill="#ce9178" opacity="0.36"/><rect x="84.2" y="153.0" width="6.1" height="1.7" fill="#ce9178" opacity="0.36"/><rect x="92.8" y="153.0" width="9.2" height="1.7" fill="#9cdcfe" opacity="0.36"/><rect x="104.7" y="153.0" width="3.6" height="1.7" fill="#9cdcfe" opacity="0.36"/><rect x="111.2" y="153.0" width="12.2" height="1.7" fill="#c586c0" opacity="0.36"/><rect x="126.2" y="153.0" width="12.7" height="1.7" fill="#ce9178" opacity="0.36"/><rect x="21.0" y="156.0" width="11.0" height="1.7" fill="#c586c0" opacity="0.36"/><rect x="34.7" y="156.0" width="15.9" height="1.7" fill="#d4d4d4" opacity="0.36"/><rect x="53.1" y="156.0" width="10.0" height="1.7" fill="#9cdcfe" opacity="0.36"/><rect x="65.2" y="156.0" width="3.3" height="1.7" fill="#9cdcfe" opacity="0.36"/><rect x="27.0" y="159.0" width="5.4" height="1.7" fill="#c586c0" opacity="0.36"/><rect x="34.0" y="159.0" width="8.5" height="1.7" fill="#9cdcfe" opacity="0.36"/><rect x="44.8" y="159.0" width="8.0" height="1.7" fill="#ce9178" opacity="0.36"/><rect x="54.4" y="159.0" width="14.1" height="1.7" fill="#d4d4d4" opacity="0.36"/><rect x="70.4" y="159.0" width="14.8" height="1.7" fill="#ce9178" opacity="0.36"/><rect x="87.7" y="159.0" width="4.1" height="1.7" fill="#9cdcfe" opacity="0.36"/><rect x="94.7" y="159.0" width="11.9" height="1.7" fill="#ce9178" opacity="0.36"/><rect x="108.9" y="159.0" width="14.2" height="1.7" fill="#ce9178" opacity="0.36"/><rect x="125.1" y="159.0" width="4.7" height="1.7" fill="#9cdcfe" opacity="0.36"/><rect x="131.5" y="159.0" width="4.4" height="1.7" fill="#9cdcfe" opacity="0.36"/><rect x="0.0" y="171.5" width="318.0" height="4.0" fill="#191919"/><rect x="0.0" y="171.5" width="6.0" height="4.0" fill="#2a7acc"/><rect x="0.0" y="175.5" width="318.0" height="3.5" fill="#000"/></g></svg>
<svg style="left:282px;top:1018px;overflow:hidden" width="318" height="179" viewBox="0 0 318 179"><g filter="url(#bl)"><rect x="0.0" y="0.0" width="318.0" height="179.0" fill="#161616"/><rect x="0.0" y="0.0" width="318.0" height="4.0" fill="#050505"/><rect x="3.0" y="6.3" width="5.4" height="1.4" fill="#aaaaaa" opacity="0.288"/><rect x="12.4" y="6.3" width="8.2" height="1.4" fill="#aaaaaa" opacity="0.288"/><rect x="24.6" y="6.3" width="8.3" height="1.4" fill="#aaaaaa" opacity="0.288"/><rect x="36.9" y="6.3" width="12.8" height="1.4" fill="#aaaaaa" opacity="0.288"/><rect x="53.7" y="6.3" width="4.6" height="1.4" fill="#aaaaaa" opacity="0.288"/><rect x="62.3" y="6.3" width="13.2" height="1.4" fill="#aaaaaa" opacity="0.288"/><rect x="79.5" y="6.3" width="8.0" height="1.4" fill="#aaaaaa" opacity="0.288"/><rect x="91.5" y="6.3" width="6.5" height="1.4" fill="#aaaaaa" opacity="0.288"/><rect x="3.0" y="10.8" width="4.5" height="1.2" fill="#aaaaaa" opacity="0.252"/><rect x="9.5" y="10.8" width="10.9" height="1.2" fill="#aaaaaa" opacity="0.252"/><rect x="22.4" y="10.8" width="10.0" height="1.2" fill="#aaaaaa" opacity="0.252"/><rect x="34.4" y="10.8" width="13.7" height="1.2" fill="#aaaaaa" opacity="0.252"/><rect x="50.1" y="10.8" width="5.2" height="1.2" fill="#aaaaaa" opacity="0.252"/><rect x="57.3" y="10.8" width="4.4" height="1.2" fill="#aaaaaa" opacity="0.252"/><rect x="63.7" y="10.8" width="10.6" height="1.2" fill="#aaaaaa" opacity="0.252"/><rect x="76.3" y="10.8" width="3.7" height="1.2" fill="#aaaaaa" opacity="0.252"/><rect x="82.0" y="10.8" width="4.5" height="1.2" fill="#aaaaaa" opacity="0.252"/><rect x="88.5" y="10.8" width="12.4" height="1.2" fill="#aaaaaa" opacity="0.252"/><rect x="102.9" y="10.8" width="8.0" height="1.2" fill="#aaaaaa" opacity="0.252"/><rect x="112.9" y="10.8" width="4.9" height="1.2" fill="#aaaaaa" opacity="0.252"/><rect x="119.8" y="10.8" width="6.8" height="1.2" fill="#aaaaaa" opacity="0.252"/><rect x="128.6" y="10.8" width="12.8" height="1.2" fill="#aaaaaa" opacity="0.252"/><rect x="143.3" y="10.8" width="9.6" height="1.2" fill="#aaaaaa" opacity="0.252"/><rect x="3.0" y="14.8" width="11.7" height="1.2" fill="#aaaaaa" opacity="0.252"/><rect x="17.7" y="14.8" width="10.0" height="1.2" fill="#aaaaaa" opacity="0.252"/><rect x="30.7" y="14.8" width="9.7" height="1.2" fill="#aaaaaa" opacity="0.252"/><rect x="43.4" y="14.8" width="4.9" height="1.2" fill="#aaaaaa" opacity="0.252"/><rect x="51.3" y="14.8" width="13.7" height="1.2" fill="#aaaaaa" opacity="0.252"/><rect x="68.0" y="14.8" width="12.4" height="1.2" fill="#aaaaaa" opacity="0.252"/><rect x="83.4" y="14.8" width="4.0" height="1.2" fill="#aaaaaa" opacity="0.252"/><rect x="90.3" y="14.8" width="12.4" height="1.2" fill="#aaaaaa" opacity="0.252"/><rect x="105.8" y="14.8" width="7.2" height="1.2" fill="#aaaaaa" opacity="0.252"/><rect x="292.0" y="6.3" width="14.0" height="1.4" fill="#aaaaaa" opacity="0.252"/><rect x="308.0" y="6.3" width="6.0" height="1.4" fill="#aaaaaa" opacity="0.252"/><rect x="292.0" y="14.8" width="12.2" height="1.2" fill="#aaaaaa" opacity="0.252"/><rect x="306.2" y="14.8" width="6.1" height="1.2" fill="#aaaaaa" opacity="0.252"/><rect x="314.3" y="14.8" width="1.7" height="1.2" fill="#aaaaaa" opacity="0.252"/><text x="7.3" y="29.3" font-family="Liberation Sans" font-size="7.4" fill="#dcdcdc" textLength="75.5">Assignmnet 2 (100 points)</text></g></svg>
<svg style="left:618px;top:1018px;overflow:hidden" width="318" height="179" viewBox="0 0 318 179"><g filter="url(#bl)"><rect x="0.0" y="0.0" width="318.0" height="179.0" fill="#121212"/><rect x="0.0" y="0.0" width="318.0" height="3.0" fill="#000"/><rect x="0.0" y="3.0" width="318.0" height="6.5" fill="#161616"/><rect x="10.0" y="5.5" width="6.9" height="1.5" fill="#bbbbbb" opacity="0.288"/><rect x="19.9" y="5.5" width="5.0" height="1.5" fill="#bbbbbb" opacity="0.288"/><rect x="27.9" y="5.5" width="5.3" height="1.5" fill="#bbbbbb" opacity="0.288"/><rect x="36.2" y="5.5" width="6.3" height="1.5" fill="#bbbbbb" opacity="0.288"/><rect x="45.6" y="5.5" width="7.6" height="1.5" fill="#bbbbbb" opacity="0.288"/><rect x="56.1" y="5.5" width="6.4" height="1.5" fill="#bbbbbb" opacity="0.288"/><rect x="65.5" y="5.5" width="4.6" height="1.5" fill="#bbbbbb" opacity="0.288"/><rect x="73.1" y="5.5" width="6.3" height="1.5" fill="#bbbbbb" opacity="0.288"/><rect x="82.4" y="5.5" width="2.6" height="1.5" fill="#bbbbbb" opacity="0.288"/><rect x="150.0" y="4.5" width="45.0" height="3.5" fill="#222"/><rect x="0.0" y="9.5" width="10.0" height="170.0" fill="#141414"/><circle cx="5" cy="14" r="2.8" fill="#8a9ab0" opacity="0.6"/><rect x="13.0" y="12.0" width="13.8" height="1.4" fill="#aaaaaa" opacity="0.252"/><rect x="14.0" y="17.5" width="3.4" height="1.8" fill="#dddddd" opacity="0.396"/><rect x="18.7" y="17.5" width="8.2" height="1.8" fill="#dddddd" opacity="0.396"/><rect x="28.2" y="17.5" width="11.5" height="1.8" fill="#dddddd" opacity="0.396"/><rect x="41.0" y="17.5" width="3.4" height="1.8" fill="#dddddd" opacity="0.396"/><rect x="45.6" y="17.5" width="8.4" height="1.8" fill="#dddddd" opacity="0.396"/><rect x="14.0" y="22.5" width="8.3" height="1.4" fill="#aaaaaa" opacity="0.288"/><rect x="23.6" y="22.5" width="11.8" height="1.4" fill="#aaaaaa" opacity="0.288"/><rect x="36.7" y="22.5" width="12.0" height="1.4" fill="#aaaaaa" opacity="0.288"/><rect x="50.0" y="22.5" width="4.0" height="1.4" fill="#aaaaaa" opacity="0.288"/><rect x="58.0" y="12.5" width="5.6" height="1.6" fill="#cccccc" opacity="0.36"/><rect x="66.6" y="12.5" width="9.1" height="1.6" fill="#cccccc" opacity="0.36"/><rect x="78.8" y="12.5" width="3.1" height="1.6" fill="#cccccc" opacity="0.36"/><rect x="84.9" y="12.5" width="11.0" height="1.6" fill="#cccccc" opacity="0.36"/><rect x="99.0" y="12.5" width="13.4" height="1.6" fill="#cccccc" opacity="0.36"/><rect x="115.4" y="12.5" width="4.5" height="1.6" fill="#cccccc" opacity="0.36"/><rect x="122.9" y="12.5" width="6.3" height="1.6" fill="#cccccc" opacity="0.36"/><rect x="132.1" y="12.5" width="10.1" height="1.6" fill="#cccccc" opacity="0.36"/><rect x="145.3" y="12.5" width="4.0" height="1.6" fill="#cccccc" opacity="0.36"/><rect x="58.0" y="18.0" width="6.4" height="1.3" fill="#aaaaaa" opacity="0.252"/><rect x="66.4" y="18.0" width="10.7" height="1.3" fill="#aaaaaa" opacity="0.252"/><rect x="79.1" y="18.0" width="12.4" height="1.3" fill="#aaaaaa" opacity="0.252"/><rect x="93.5" y="18.0" width="11.2" height="1.3" fill="#aaaaaa" opacity="0.252"/><rect x="106.7" y="18.0" width="3.3" height="1.3" fill="#aaaaaa" opacity="0.252"/><rect x="112.0" y="18.0" width="8.0" height="1.3" fill="#aaaaaa" opacity="0.252"/><rect x="122.0" y="18.0" width="11.5" height="1.3" fill="#aaaaaa" opacity="0.252"/><rect x="135.5" y="18.0" width="12.6" height="1.3" fill="#aaaaaa" opacity="0.252"/><rect x="150.1" y="18.0" width="7.5" height="1.3" fill="#aaaaaa" opacity="0.252"/><rect x="159.6" y="18.0" width="11.7" height="1.3" fill="#aaaaaa" opacity="0.252"/><rect x="173.3" y="18.0" width="7.1" height="1.3" fill="#aaaaaa" opacity="0.252"/><rect x="182.3" y="18.0" width="8.1" height="1.3" fill="#aaaaaa" opacity="0.252"/><rect x="192.5" y="18.0" width="5.5" height="1.3" fill="#aaaaaa" opacity="0.252"/><rect x="58.0" y="23.0" width="12.5" height="1.3" fill="#aaaaaa" opacity="0.252"/><rect x="73.5" y="23.0" width="3.8" height="1.3" fill="#aaaaaa" opacity="0.252"/><rect x="80.2" y="23.0" width="12.8" height="1.3" fill="#aaaaaa" opacity="0.252"/><rect x="96.1" y="23.0" width="6.7" height="1.3" fill="#aaaaaa" opacity="0.252"/><rect x="105.7" y="23.0" width="3.4" height="1.3" fill="#aaaaaa" opacity="0.252"/><rect x="112.1" y="23.0" width="7.7" height="1.3" fill="#aaaaaa" opacity="0.252"/><rect x="122.8" y="23.0" width="6.0" height="1.3" fill="#aaaaaa" opacity="0.252"/><rect x="131.7" y="23.0" width="13.4" height="1.3" fill="#aaaaaa" opacity="0.252"/><rect x="148.2" y="23.0" width="9.0" height="1.3" fill="#aaaaaa" opacity="0.252"/></g></svg>
<div class="t" style="left:285.3px;top:355.65px;font-size:11.4px;color:#222;font-weight:400;-webkit-text-stroke:0.12px #222">physics 007</div>
<div class="t" style="left:285.0px;top:378.15px;font-size:11.4px;color:#3e3e3e;font-weight:400;">Computer - Sommer 2025</div>
<div class="a" style="left:285px;top:403.5px;width:12px;height:10px"><svg width="12" height="10" viewBox="0 0 12 10"><path d="M8 0.5 L11.5 0.5 L11.5 9.5 L6 9.5 Z" fill="#c9ccd6"/><path d="M0 9.5 L6.5 3.5 L11 3.8 L4.5 9.5 Z" fill="#5f9a52"/><path d="M4.2 9.6 L10 4.2" stroke="#d8f5c8" stroke-width="1"/><path d="M8.5 1 L11.5 1" stroke="#9aa0b0" stroke-width="1"/></svg></div>
<div class="a" style="left:286px;top:412.5px;width:31px;height:16px;overflow:hidden"><div class="t" style="left:-1.8px;top:4.2px;font-size:11px;color:#5a5f80">avatar</div></div>
<div class="t" style="left:325.8px;top:410.05px;font-size:11.4px;color:#333;font-weight:400;">Prof. Glurak</div>
<div class="t" style="left:621.3px;top:355.65px;font-size:11.4px;color:#222;font-weight:400;-webkit-text-stroke:0.12px #222">Kacper Kijewski-CAI NatLPr-A1</div>
<div class="t" style="left:621.0px;top:378.15px;font-size:11.4px;color:#3e3e3e;font-weight:400;">CAI_NatLPr-Assignment_1 - Sommer 2025</div>
<div class="a" style="left:621px;top:403.5px;width:12px;height:10px"><svg width="12" height="10" viewBox="0 0 12 10"><path d="M8 0.5 L11.5 0.5 L11.5 9.5 L6 9.5 Z" fill="#c9ccd6"/><path d="M0 9.5 L6.5 3.5 L11 3.8 L4.5 9.5 Z" fill="#5f9a52"/><path d="M4.2 9.6 L10 4.2" stroke="#d8f5c8" stroke-width="1"/><path d="M8.5 1 L11.5 1" stroke="#9aa0b0" stroke-width="1"/></svg></div>
<div class="a" style="left:622px;top:412.5px;width:31px;height:16px;overflow:hidden"><div class="t" style="left:-1.8px;top:4.2px;font-size:11px;color:#5a5f80">avatar</div></div>
<div class="t" style="left:661.8px;top:410.05px;font-size:11.4px;color:#333;font-weight:400;">Gokul Srinivasagan</div>
<div class="t" style="left:957.3px;top:355.65px;font-size:11.4px;color:#222;font-weight:400;-webkit-text-stroke:0.12px #222">Johannes Elsinger-CAI NatLPr-A1</div>
<div class="t" style="left:957.0px;top:378.15px;font-size:11.4px;color:#3e3e3e;font-weight:400;">CAI_NatLPr-Assignment_1 - Sommer 2025</div>
<div class="a" style="left:957px;top:403.5px;width:12px;height:10px"><svg width="12" height="10" viewBox="0 0 12 10"><path d="M8 0.5 L11.5 0.5 L11.5 9.5 L6 9.5 Z" fill="#c9ccd6"/><path d="M0 9.5 L6.5 3.5 L11 3.8 L4.5 9.5 Z" fill="#5f9a52"/><path d="M4.2 9.6 L10 4.2" stroke="#d8f5c8" stroke-width="1"/><path d="M8.5 1 L11.5 1" stroke="#9aa0b0" stroke-width="1"/></svg></div>
<div class="a" style="left:958px;top:412.5px;width:31px;height:16px;overflow:hidden"><div class="t" style="left:-1.8px;top:4.2px;font-size:11px;color:#5a5f80">avatar</div></div>
<div class="t" style="left:997.8px;top:410.05px;font-size:11.4px;color:#333;font-weight:400;">Gokul Srinivasagan</div>
<div class="t" style="left:1293.3px;top:355.65px;font-size:11.4px;color:#222;font-weight:400;-webkit-text-stroke:0.12px #222">Immanuel Mayer-CAI NatLPr-A1</div>
<div class="t" style="left:1293.0px;top:378.15px;font-size:11.4px;color:#3e3e3e;font-weight:400;">CAI_NatLPr-Assignment_1 - Sommer 2025</div>
<div class="a" style="left:1293px;top:403.5px;width:12px;height:10px"><svg width="12" height="10" viewBox="0 0 12 10"><path d="M8 0.5 L11.5 0.5 L11.5 9.5 L6 9.5 Z" fill="#c9ccd6"/><path d="M0 9.5 L6.5 3.5 L11 3.8 L4.5 9.5 Z" fill="#5f9a52"/><path d="M4.2 9.6 L10 4.2" stroke="#d8f5c8" stroke-width="1"/><path d="M8.5 1 L11.5 1" stroke="#9aa0b0" stroke-width="1"/></svg></div>
<div class="a" style="left:1294px;top:412.5px;width:31px;height:16px;overflow:hidden"><div class="t" style="left:-1.8px;top:4.2px;font-size:11px;color:#5a5f80">avatar</div></div>
<div class="t" style="left:1333.8px;top:410.05px;font-size:11.4px;color:#333;font-weight:400;">Gokul Srinivasagan</div>
<div class="t" style="left:285.3px;top:643.35px;font-size:11.4px;color:#222;font-weight:400;-webkit-text-stroke:0.12px #222">Florian Seiler-CAI NatLPr-A1</div>
<div class="t" style="left:285.0px;top:665.85px;font-size:11.4px;color:#3e3e3e;font-weight:400;">CAI_NatLPr-Assignment_1 - Sommer 2025</div>
<div class="a" style="left:285px;top:691.2px;width:12px;height:10px"><svg width="12" height="10" viewBox="0 0 12 10"><path d="M8 0.5 L11.5 0.5 L11.5 9.5 L6 9.5 Z" fill="#c9ccd6"/><path d="M0 9.5 L6.5 3.5 L11 3.8 L4.5 9.5 Z" fill="#5f9a52"/><path d="M4.2 9.6 L10 4.2" stroke="#d8f5c8" stroke-width="1"/><path d="M8.5 1 L11.5 1" stroke="#9aa0b0" stroke-width="1"/></svg></div>
<div class="a" style="left:286px;top:700.2px;width:31px;height:16px;overflow:hidden"><div class="t" style="left:-1.8px;top:4.2px;font-size:11px;color:#5a5f80">avatar</div></div>
<div class="t" style="left:325.8px;top:697.75px;font-size:11.4px;color:#333;font-weight:400;">Gokul Srinivasagan</div>
<div class="t" style="left:621.3px;top:643.35px;font-size:11.4px;color:#222;font-weight:400;-webkit-text-stroke:0.12px #222">Felix Boyke-CAI NatLPr-A1</div>
<div class="t" style="left:621.0px;top:665.85px;font-size:11.4px;color:#3e3e3e;font-weight:400;">CAI_NatLPr-Assignment_1 - Sommer 2025</div>
<div class="a" style="left:621px;top:691.2px;width:12px;height:10px"><svg width="12" height="10" viewBox="0 0 12 10"><path d="M8 0.5 L11.5 0.5 L11.5 9.5 L6 9.5 Z" fill="#c9ccd6"/><path d="M0 9.5 L6.5 3.5 L11 3.8 L4.5 9.5 Z" fill="#5f9a52"/><path d="M4.2 9.6 L10 4.2" stroke="#d8f5c8" stroke-width="1"/><path d="M8.5 1 L11.5 1" stroke="#9aa0b0" stroke-width="1"/></svg></div>
<div class="a" style="left:622px;top:700.2px;width:31px;height:16px;overflow:hidden"><div class="t" style="left:-1.8px;top:4.2px;font-size:11px;color:#5a5f80">avatar</div></div>
<div class="t" style="left:661.8px;top:697.75px;font-size:11.4px;color:#333;font-weight:400;">Gokul Srinivasagan</div>
<div class="t" style="left:957.3px;top:643.35px;font-size:11.4px;color:#222;font-weight:400;-webkit-text-stroke:0.12px #222">Baatarbileg Erkhembaya-CAI NatLPr-A1</div>
<div class="t" style="left:957.0px;top:665.85px;font-size:11.4px;color:#3e3e3e;font-weight:400;">CAI_NatLPr-Assignment_1 - Sommer 2025</div>
<div class="a" style="left:957px;top:691.2px;width:12px;height:10px"><svg width="12" height="10" viewBox="0 0 12 10"><path d="M8 0.5 L11.5 0.5 L11.5 9.5 L6 9.5 Z" fill="#c9ccd6"/><path d="M0 9.5 L6.5 3.5 L11 3.8 L4.5 9.5 Z" fill="#5f9a52"/><path d="M4.2 9.6 L10 4.2" stroke="#d8f5c8" stroke-width="1"/><path d="M8.5 1 L11.5 1" stroke="#9aa0b0" stroke-width="1"/></svg></div>
<div class="a" style="left:958px;top:700.2px;width:31px;height:16px;overflow:hidden"><div class="t" style="left:-1.8px;top:4.2px;font-size:11px;color:#5a5f80">avatar</div></div>
<div class="t" style="left:997.8px;top:697.75px;font-size:11.4px;color:#333;font-weight:400;">Gokul Srinivasagan</div>
<div class="t" style="left:1293.3px;top:643.35px;font-size:11.4px;color:#222;font-weight:400;-webkit-text-stroke:0.12px #222">Dominik Lohwasser-CAI NatLPr-A1</div>
<div class="t" style="left:1293.0px;top:665.85px;font-size:11.4px;color:#3e3e3e;font-weight:400;">CAI_NatLPr-Assignment_1 - Sommer 2025</div>
<div class="a" style="left:1293px;top:691.2px;width:12px;height:10px"><svg width="12" height="10" viewBox="0 0 12 10"><path d="M8 0.5 L11.5 0.5 L11.5 9.5 L6 9.5 Z" fill="#c9ccd6"/><path d="M0 9.5 L6.5 3.5 L11 3.8 L4.5 9.5 Z" fill="#5f9a52"/><path d="M4.2 9.6 L10 4.2" stroke="#d8f5c8" stroke-width="1"/><path d="M8.5 1 L11.5 1" stroke="#9aa0b0" stroke-width="1"/></svg></div>
<div class="a" style="left:1294px;top:700.2px;width:31px;height:16px;overflow:hidden"><div class="t" style="left:-1.8px;top:4.2px;font-size:11px;color:#5a5f80">avatar</div></div>
<div class="t" style="left:1333.8px;top:697.75px;font-size:11.4px;color:#333;font-weight:400;">Gokul Srinivasagan</div>
<div class="t" style="left:285.3px;top:931.15px;font-size:11.4px;color:#222;font-weight:400;-webkit-text-stroke:0.12px #222">Albert Didkovskyi-CAI NatLPr-A2</div>
<div class="t" style="left:285.0px;top:953.65px;font-size:11.4px;color:#3e3e3e;font-weight:400;">CAI_NatLPr-Assignment_2 - Sommer 2025</div>
<div class="a" style="left:285px;top:979px;width:12px;height:10px"><svg width="12" height="10" viewBox="0 0 12 10"><path d="M8 0.5 L11.5 0.5 L11.5 9.5 L6 9.5 Z" fill="#c9ccd6"/><path d="M0 9.5 L6.5 3.5 L11 3.8 L4.5 9.5 Z" fill="#5f9a52"/><path d="M4.2 9.6 L10 4.2" stroke="#d8f5c8" stroke-width="1"/><path d="M8.5 1 L11.5 1" stroke="#9aa0b0" stroke-width="1"/></svg></div>
<div class="a" style="left:286px;top:988px;width:31px;height:16px;overflow:hidden"><div class="t" style="left:-1.8px;top:4.2px;font-size:11px;color:#5a5f80">avatar</div></div>
<div class="t" style="left:325.8px;top:985.55px;font-size:11.4px;color:#333;font-weight:400;">Gokul Srinivasagan</div>
<div class="t" style="left:621.3px;top:931.15px;font-size:11.4px;color:#222;font-weight:400;-webkit-text-stroke:0.12px #222">Alexander Prader-CAI NatLPr-A2</div>
<div class="t" style="left:621.0px;top:953.65px;font-size:11.4px;color:#3e3e3e;font-weight:400;">CAI_NatLPr-Assignment_2 - Sommer 2025</div>
<div class="a" style="left:621px;top:979px;width:12px;height:10px"><svg width="12" height="10" viewBox="0 0 12 10"><path d="M8 0.5 L11.5 0.5 L11.5 9.5 L6 9.5 Z" fill="#c9ccd6"/><path d="M0 9.5 L6.5 3.5 L11 3.8 L4.5 9.5 Z" fill="#5f9a52"/><path d="M4.2 9.6 L10 4.2" stroke="#d8f5c8" stroke-width="1"/><path d="M8.5 1 L11.5 1" stroke="#9aa0b0" stroke-width="1"/></svg></div>
<div class="a" style="left:622px;top:988px;width:31px;height:16px;overflow:hidden"><div class="t" style="left:-1.8px;top:4.2px;font-size:11px;color:#5a5f80">avatar</div></div>
<div class="t" style="left:661.8px;top:985.55px;font-size:11.4px;color:#333;font-weight:400;">Gokul Srinivasagan</div>
<div class="t" style="left:957.3px;top:931.15px;font-size:11.4px;color:#222;font-weight:400;-webkit-text-stroke:0.12px #222">Ariana Gallapeni-CAI NatLPr-A2</div>
<div class="t" style="left:957.0px;top:953.65px;font-size:11.4px;color:#3e3e3e;font-weight:400;">CAI_NatLPr-Assignment_2 - Sommer 2025</div>
<div class="a" style="left:957px;top:979px;width:12px;height:10px"><svg width="12" height="10" viewBox="0 0 12 10"><path d="M8 0.5 L11.5 0.5 L11.5 9.5 L6 9.5 Z" fill="#c9ccd6"/><path d="M0 9.5 L6.5 3.5 L11 3.8 L4.5 9.5 Z" fill="#5f9a52"/><path d="M4.2 9.6 L10 4.2" stroke="#d8f5c8" stroke-width="1"/><path d="M8.5 1 L11.5 1" stroke="#9aa0b0" stroke-width="1"/></svg></div>
<div class="a" style="left:958px;top:988px;width:31px;height:16px;overflow:hidden"><div class="t" style="left:-1.8px;top:4.2px;font-size:11px;color:#5a5f80">avatar</div></div>
<div class="t" style="left:997.8px;top:985.55px;font-size:11.4px;color:#333;font-weight:400;">Gokul Srinivasagan</div>
<div class="t" style="left:1293.3px;top:931.15px;font-size:11.4px;color:#222;font-weight:400;-webkit-text-stroke:0.12px #222">Felix Boyke-CAI NatLPr-A2</div>
<div class="t" style="left:1293.0px;top:953.65px;font-size:11.4px;color:#3e3e3e;font-weight:400;">CAI_NatLPr-Assignment_2 - Sommer 2025</div>
<div class="a" style="left:1293px;top:979px;width:12px;height:10px"><svg width="12" height="10" viewBox="0 0 12 10"><path d="M8 0.5 L11.5 0.5 L11.5 9.5 L6 9.5 Z" fill="#c9ccd6"/><path d="M0 9.5 L6.5 3.5 L11 3.8 L4.5 9.5 Z" fill="#5f9a52"/><path d="M4.2 9.6 L10 4.2" stroke="#d8f5c8" stroke-width="1"/><path d="M8.5 1 L11.5 1" stroke="#9aa0b0" stroke-width="1"/></svg></div>
<div class="a" style="left:1294px;top:988px;width:31px;height:16px;overflow:hidden"><div class="t" style="left:-1.8px;top:4.2px;font-size:11px;color:#5a5f80">avatar</div></div>
<div class="t" style="left:1333.8px;top:985.55px;font-size:11.4px;color:#333;font-weight:400;">Gokul Srinivasagan</div>
<div class="a" style="left:0;top:0;width:1920px;height:29px;background:#2c4bd2"></div>
<div class="a" style="left:0;top:0;width:1920px;height:2px;background:#283068"></div>
<div class="a" style="left:0;top:28px;width:1920px;height:1px;background:#3a4ab8"></div>
<svg style="left:291px;top:10px" width="12" height="11" viewBox="0 0 12 11"><rect x="0.6" y="0.6" width="10.8" height="9.3" fill="none" stroke="#eef0ff" stroke-width="1.2" rx="0.5"/><path d="M4.3 2.9 L8.2 5.25 L4.3 7.6 Z" fill="#eef0ff"/></svg>
<div class="t" style="left:306.5px;top:9.84px;font-size:12px;color:#eef0ff;font-weight:400;">Media</div>
<svg style="left:357px;top:10px" width="14" height="10" viewBox="0 0 14 10"><path d="M7 0.7 L13 3.4 L7 6.1 L1 3.4 Z" fill="none" stroke="#eef0ff" stroke-width="1.1" stroke-linejoin="round"/><path d="M1.3 5.4 L7 8.2 L12.7 5.4" fill="none" stroke="#eef0ff" stroke-width="1.1" stroke-linejoin="round"/></svg>
<div class="t" style="left:373.5px;top:10.52px;font-size:11.2px;color:#eef0ff;font-weight:400;">Channels</div>
<svg style="left:439px;top:8.5px" width="12" height="13" viewBox="0 0 12 13"><circle cx="6" cy="6.5" r="5.2" fill="none" stroke="#eef0ff" stroke-width="1.1"/><path d="M5.2 3.2 L5.2 7 L7.8 8.6" fill="none" stroke="#eef0ff" stroke-width="1.1"/></svg>
<div class="t" style="left:455.0px;top:9.84px;font-size:12px;color:#eef0ff;font-weight:400;">History</div>
<svg style="left:1439.8px;top:9px" width="12" height="12.5" viewBox="0 0 12 12"><circle cx="6" cy="6" r="5.4" fill="none" stroke="#eef0ff" stroke-width="1"/><ellipse cx="6" cy="6" rx="2.4" ry="5.4" fill="none" stroke="#eef0ff" stroke-width="1"/><path d="M0.6 6 H11.4 M1.5 3.2 H10.5 M1.5 8.8 H10.5 M6 0.6 V11.4" stroke="#eef0ff" stroke-width="0.9"/></svg>
<div class="t" style="left:1455.7px;top:10.52px;font-size:11.2px;color:#eef0ff;font-weight:400;">EN</div>
<div class="a" style="left:1479px;top:1.5px;width:129.5px;height:27.5px;border:1px solid #b8c4f4;border-radius:4px;background:#2d48d0"></div>
<svg style="left:1489.5px;top:10px" width="10" height="10" viewBox="0 0 10 10"><circle cx="5" cy="3" r="2.3" fill="none" stroke="#eef0ff" stroke-width="1"/><path d="M0.7 9.4 C0.9 6.6 2.6 5.9 5 5.9 C7.4 5.9 9.1 6.6 9.3 9.4 Z" fill="none" stroke="#eef0ff" stroke-width="1"/></svg>
<div class="t" style="left:1504.5px;top:10.27px;font-size:11.5px;color:#eef0ff;font-weight:400;">Glurak Pokemon</div>
<svg style="left:1593px;top:13px" width="7" height="4" viewBox="0 0 7 4"><path d="M0 0 H7 L3.5 4 Z" fill="#eef0ff"/></svg>
<svg style="left:282px;top:41px" width="47" height="47" viewBox="0 0 47 47">
<defs><linearGradient id="lg" x1="0" y1="0" x2="1" y2="1"><stop offset="0" stop-color="#2f62c9"/><stop offset="0.5" stop-color="#4a86dd"/><stop offset="1" stop-color="#2a58c6"/></linearGradient></defs>
<rect x="0" y="0" width="47" height="47" rx="2.5" fill="url(#lg)"/>
<path d="M3 4 C24 3 36 16 36 27 C36 38 26 45 8 45 L3 45 Z" fill="#2638c4" opacity="0.7"/>
<g fill="none" stroke="#f4f8ff" stroke-width="2.3">
<path d="M4.6 8 V39.5"/><path d="M8.8 8 V39.5"/>
<path d="M8.8 22 H22"/><path d="M8.8 26 H22"/>
<path d="M42 9 H31 C26 9 24 12 24 15.5 C24 19 26.5 22 31 22 H33 C38.5 22 42 25.5 42 30.3 C42 35.3 38.5 38.8 33 38.8 H16"/>
<path d="M42 14 H31.5 C29.5 14 28.6 15.5 28.6 17 C28.6 18.8 30 20 32 20 H35"/>
<path d="M23 33.8 H33 C35.8 33.8 37.6 32.4 37.6 30.6 C37.6 28.6 35.8 27.3 33 27.3 H29.5"/>
</g></svg>
<div class="t" style="left:334.3px;top:51.27px;font-size:21.3px;color:#151515;font-weight:700;letter-spacing:-0.85px">HAnS</div>
<div class="t" style="left:334.5px;top:70.6px;font-size:6.1px;font-family:'Liberation Serif',serif;color:#444;letter-spacing:-0.05px">Hochschul-Assistenz-System</div>
<div class="a" style="left:890.5px;top:51px;width:220px;height:28px;border:1px solid #f0f0f0;box-shadow:0 1px 2px rgba(0,0,0,0.06);border-radius:2px;background:#fff"></div>
<div class="t" style="left:899.4px;top:59.42px;font-size:11.55px;color:#6d6d6d;font-weight:400;">Search for everything</div>
<svg style="left:1084.5px;top:60px" width="12" height="12" viewBox="0 0 12 12"><circle cx="5" cy="5" r="4" fill="none" stroke="#444" stroke-width="1.1"/><path d="M8 8 L11 11" stroke="#444" stroke-width="1.5"/></svg>
<div class="a" style="left:282px;top:103px;width:145px;height:32px;border:1px solid #f3f3f3;border-radius:2px;background:#fefefe"></div>
<div class="t" style="left:288.5px;top:113.22px;font-size:11.55px;color:#4f4f4f;font-weight:400;">Recently uploaded media</div>
<div class="a" style="left:0;top:1049.5px;width:1920px;height:30.5px;background:#2c4bd2"></div>
<div class="a" style="left:0;top:1049.5px;width:1920px;height:1px;background:#2e3fa8"></div>
<div class="a" style="left:0;top:1077.6px;width:1920px;height:2.4px;background:#3a3c48"></div>
<div class="a" style="left:0;top:1060.4px;width:18.7px;height:17.2px;background:#1c1c22;border-radius:0 2px 0 0"></div>
<div class="t" style="left:-1.5px;top:1064.28px;font-size:10.3px;color:#f2f2f2;font-weight:700;">ate</div>
<div class="t" style="left:295.0px;top:1061.67px;font-size:8.9px;color:#e8ecff;font-weight:400;">How to contact us</div>
<div class="t" style="left:388.0px;top:1061.79px;font-size:8.75px;color:#e8ecff;font-weight:400;">Legal notice</div>
<div class="t" style="left:457.6px;top:1061.67px;font-size:8.9px;color:#e8ecff;font-weight:400;">Data protection</div>
<div class="t" style="left:541.2px;top:1061.96px;font-size:8.55px;color:#e8ecff;font-weight:400;">Terms of usage</div>
<div class="a" style="left:1479.5px;top:30px;width:129px;height:212.5px;background:#fdfdfd;border:1px solid #e4e4e4;border-radius:4px;box-shadow:0 1px 3px rgba(0,0,0,0.05)"></div>
<div class="a" style="left:1480px;top:61px;width:128px;height:22.5px;background:#2c4bd2"></div>
<svg style="left:1492px;top:43px" width="11" height="11" viewBox="0 0 11 11"><g fill="#111"><path d="M5.5 0 L8 2.5 L5.5 5 L3 2.5 Z"/><path d="M5.5 6 L8 8.5 L5.5 11 L3 8.5 Z"/><path d="M0 5.5 L2.5 3 L5 5.5 L2.5 8 Z"/><path d="M6 5.5 L8.5 3 L11 5.5 L8.5 8 Z"/></g></svg>
<div class="t" style="left:1507.5px;top:43.40px;font-size:11.7px;color:#262626;font-weight:400;">API</div>
<svg style="left:1492px;top:66.5px" width="11.5" height="11.5" viewBox="0 0 12 12"><circle cx="6" cy="6" r="5.3" fill="none" stroke="#eef0ff" stroke-width="1"/><path d="M6 3 V9 M3 6 H9" stroke="#eef0ff" stroke-width="1"/></svg>
<div class="t" style="left:1507.5px;top:67.08px;font-size:11.6px;color:#f4f6ff;font-weight:400;">Channel</div>
<div class="t" style="left:1494.5px;top:92.73px;font-size:8px;color:#262626;font-weight:700;">?</div>
<div class="t" style="left:1507.5px;top:90.60px;font-size:11.7px;color:#262626;font-weight:400;">Survey</div>
<svg style="left:1492px;top:114px" width="12" height="11" viewBox="0 0 12 11"><path d="M1 3.5 H4 L10 0.8 V9.7 L4 7 H1 Z M4 3.5 V7 M2.2 7 L3.4 10.2" fill="none" stroke="#333" stroke-width="1.1" stroke-linejoin="round"/></svg>
<div class="t" style="left:1507.5px;top:114.40px;font-size:11.7px;color:#262626;font-weight:400;">Announcement</div>
<svg style="left:1492.5px;top:136px" width="11" height="13" viewBox="0 0 11 13"><path d="M3.5 4.5 H1 V12 H10 V4.5 H7.5 M5.5 8 V1 M3 3.3 L5.5 0.8 L8 3.3" fill="none" stroke="#333" stroke-width="1.1"/></svg>
<div class="t" style="left:1507.5px;top:138.10px;font-size:11.7px;color:#262626;font-weight:400;">Upload</div>
<svg style="left:1492px;top:161px" width="12" height="11" viewBox="0 0 12 11"><rect x="0.5" y="0.5" width="3.5" height="3.5" fill="none" stroke="#111" stroke-width="1.2" rx="0.8"/><rect x="0.5" y="6" width="3.5" height="3.5" fill="none" stroke="#111" stroke-width="1.2" rx="0.8"/><path d="M5.5 1 H11 M5.5 3 H9 M5.5 6.5 H11 M5.5 8.5 H9" stroke="#111" stroke-width="1.1"/></svg>
<div class="t" style="left:1507.5px;top:160.90px;font-size:11.7px;color:#262626;font-weight:400;">Your Media</div>
<div class="a" style="left:1486.5px;top:184.5px;width:21px;height:13px;border:1px solid #f2f2f2;border-radius:7px"></div>
<div class="a" style="left:1488px;top:187px;width:8px;height:8px;border-radius:50%;background:#c4c4c4"></div>
<div class="t" style="left:1512.7px;top:184.50px;font-size:11.7px;color:#262626;font-weight:400;">Evaluation</div>
<div class="a" style="left:1480px;top:203px;width:128px;height:1px;background:#ececec"></div>
<svg style="left:1492px;top:220px" width="12" height="11" viewBox="0 0 12 11"><path d="M7 3 V0.8 H0.8 V10.2 H7 V8 M4 5.5 H11 M8.5 3 L11 5.5 L8.5 8" fill="none" stroke="#333" stroke-width="1.05"/></svg>
<div class="t" style="left:1507.5px;top:219.93px;font-size:11.9px;color:#262626;font-weight:400;">Logout</div>
<svg style="left:1533.5px;top:80px" width="14" height="18" viewBox="0 0 12 16"><path d="M3.2 1.2 C3.2 0.4 4.6 0.4 4.6 1.2 V6.5 C4.8 5.8 6 5.8 6.1 6.6 C6.3 5.9 7.5 5.9 7.6 6.8 C7.8 6.2 9 6.2 9.1 7 V11 C9.1 13 8 14.6 6.5 14.6 H5 C3.8 14.6 3 13.8 2.4 12.8 L0.6 9.4 C0.2 8.6 1.2 8 1.8 8.6 L3.2 10 Z" fill="#fff" stroke="#222" stroke-width="0.9" stroke-linejoin="round"/></svg>
</body></html>
